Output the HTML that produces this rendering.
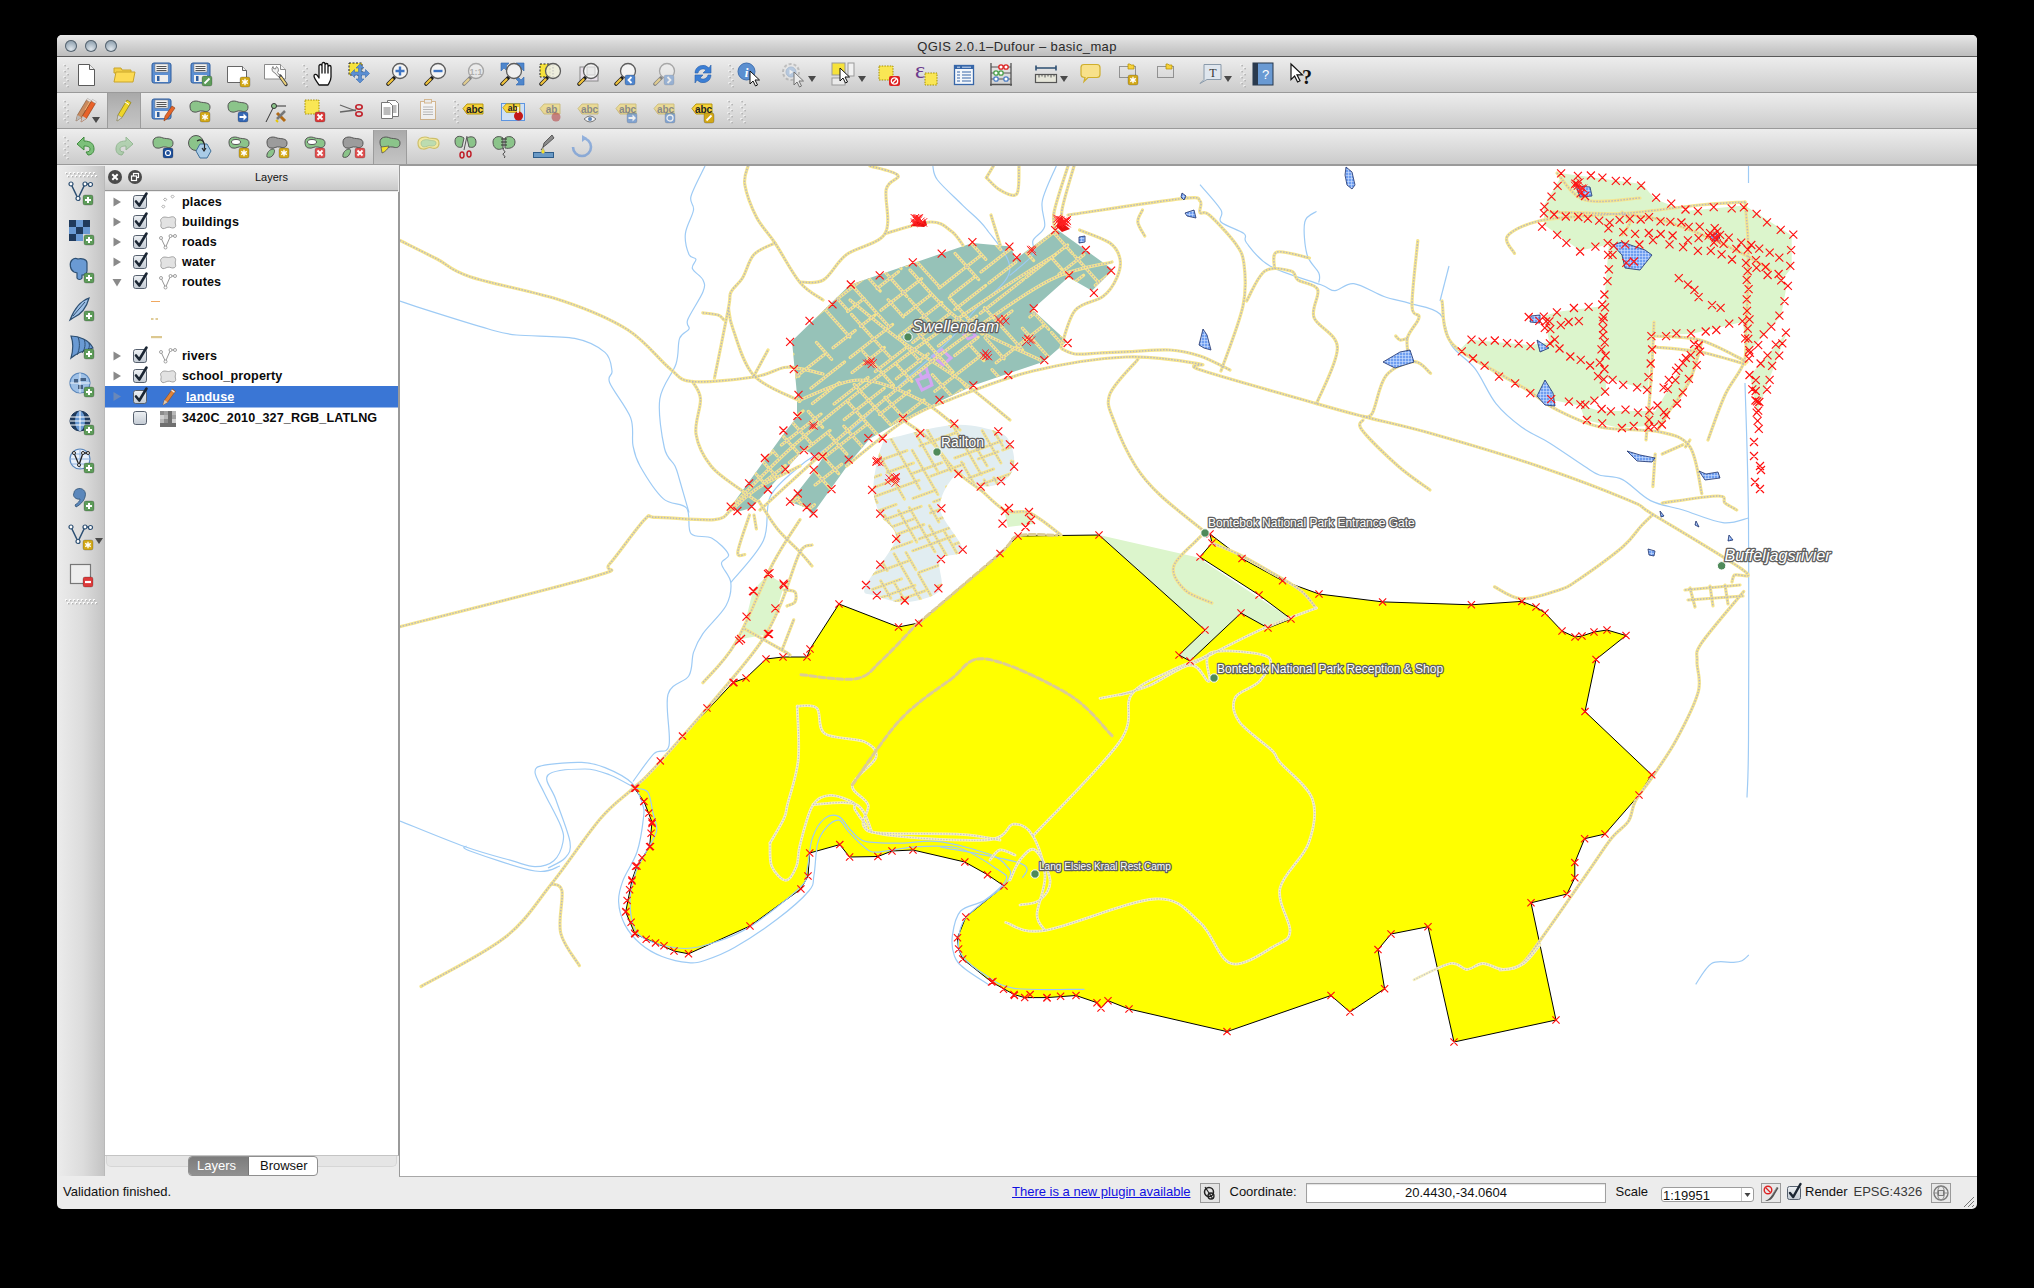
<!DOCTYPE html>
<html><head><meta charset="utf-8"><style>
html,body{margin:0;padding:0}
body{width:2034px;height:1288px;background:#000;overflow:hidden;position:relative;font-family:"Liberation Sans",sans-serif}
.a{position:absolute}
#win{position:absolute;left:57px;top:35px;width:1920px;height:1174px;background:#ececec;border-radius:5px 5px 5px 5px;overflow:hidden}
#title{position:absolute;left:0;top:0;width:1920px;height:21px;background:linear-gradient(#e9e9e9,#d6d6d6 40%,#bdbdbd);border-bottom:1px solid #585858}
#title .t{position:absolute;left:0;width:1920px;text-align:center;top:4px;font-size:13px;letter-spacing:.38px;color:#2a2a2a}
.tl{position:absolute;top:5px;width:12px;height:12px;border-radius:50%;background:radial-gradient(circle at 50% 75%,#dfe6ec,#9eaebb 60%,#7d8c99);box-shadow:inset 0 0 0 1px #56636e}
.tb{position:absolute;left:0;width:1920px;height:35px;background:linear-gradient(#ededed,#d9d9d9 60%,#cbcbcb);border-bottom:1px solid #9a9a9a;border-top:0}
#lbar{position:absolute;left:0;top:131px;width:47px;height:1010px;background:linear-gradient(90deg,#ececec,#dcdcdc 55%,#c4c4c4);border-right:1px solid #b9b9b9}
#ltitle{position:absolute;left:48px;top:130px;width:293px;height:25px;background:linear-gradient(#f0f0f0,#dedede 50%,#cacaca);border-bottom:1px solid #979797}
#ltitle .t{position:absolute;left:40px;right:0;top:6px;text-align:center;font-size:11px;color:#111}
.cb{position:absolute;top:5px;width:14px;height:14px;border-radius:50%;background:#4a4a4a}
#llist{position:absolute;left:48px;top:157px;width:293px;height:963px;background:#fff;border-right:1px solid #9a9a9a;border-bottom:1px solid #c4c4c4}
#map{position:absolute;left:342px;top:130px;width:1578px;height:1010px;border-left:1px solid #9a9a9a;border-top:1px solid #9a9a9a;border-bottom:1px solid #a8a8a8;background:#fff;overflow:hidden}
.row{position:absolute;left:0;height:20px;width:293px;font-size:13px;font-weight:bold;color:#111}
.lt{position:absolute;font-size:12.6px;font-weight:bold;color:#0a0a0a;line-height:16px;white-space:nowrap;letter-spacing:.12px}
.st{position:absolute;font-size:13px;line-height:18px;white-space:nowrap;color:#111}

</style></head><body>
<div id="win">
<div id="title"><div class="tl" style="left:8px"></div><div class="tl" style="left:28px"></div><div class="tl" style="left:48px"></div><div class="t">QGIS 2.0.1–Dufour – basic_map</div></div>
<div class="tb" style="top:22px"></div>
<div class="tb" style="top:58px"></div>
<div class="tb" style="top:94px"></div>
<div id="lbar"></div>
<div id="ltitle"><div class="cb" style="left:3px"><svg width="14" height="14"><path d="M4.3,4.3l5.4,5.4M9.7,4.3l-5.4,5.4" stroke="#fff" stroke-width="2"/></svg></div><div class="cb" style="left:23px"><svg width="14" height="14"><rect x="5.5" y="3.5" width="5" height="4" fill="none" stroke="#fff" stroke-width="1.2"/><rect x="3.5" y="6" width="5" height="4.5" fill="#4a4a4a" stroke="#fff" stroke-width="1.2"/></svg></div><div class="t">Layers</div></div>
<div id="llist"></div>
<div id="map"></div>
</div>
<svg class="a" style="left:0;top:0" width="1400" height="620"><defs><linearGradient id="act" x1="0" y1="0" x2="0" y2="1"><stop offset="0" stop-color="#a9a9a9"/><stop offset=".5" stop-color="#b9b9b9"/><stop offset="1" stop-color="#c4c4c4"/></linearGradient></defs><rect x="63.5" y="64" width="2" height="2" fill="#fafafa"/><rect x="64.3" y="64.8" width="1.6" height="1.6" fill="#b0b0b0"/><rect x="66.5" y="67" width="2" height="2" fill="#fafafa"/><rect x="67.3" y="67.8" width="1.6" height="1.6" fill="#b0b0b0"/><rect x="63.5" y="70" width="2" height="2" fill="#fafafa"/><rect x="64.3" y="70.8" width="1.6" height="1.6" fill="#b0b0b0"/><rect x="66.5" y="73" width="2" height="2" fill="#fafafa"/><rect x="67.3" y="73.8" width="1.6" height="1.6" fill="#b0b0b0"/><rect x="63.5" y="76" width="2" height="2" fill="#fafafa"/><rect x="64.3" y="76.8" width="1.6" height="1.6" fill="#b0b0b0"/><rect x="66.5" y="79" width="2" height="2" fill="#fafafa"/><rect x="67.3" y="79.8" width="1.6" height="1.6" fill="#b0b0b0"/><rect x="63.5" y="82" width="2" height="2" fill="#fafafa"/><rect x="64.3" y="82.8" width="1.6" height="1.6" fill="#b0b0b0"/><rect x="66.5" y="85" width="2" height="2" fill="#fafafa"/><rect x="67.3" y="85.8" width="1.6" height="1.6" fill="#b0b0b0"/><g transform="translate(77,63)"><path d="M1.5,1.5 h11 l5,5 v16 h-16 z" fill="#fff" stroke="#5a5a5a" stroke-width="1"/><path d="M12.5,1.5 v5 h5" fill="#eee" stroke="#5a5a5a"/></g><g transform="translate(113,64)"><path d="M1,4 h7 l1,2 h9 v3 h-17 z" fill="#f3cf47" stroke="#c9a52a"/><path d="M1,18 l2,-10 h19 l-2,10 z" fill="#fddb55" stroke="#c9a52a"/></g><g transform="translate(151,62)"><rect x="1" y="1" width="19" height="20" rx="2" fill="#5c8fd2" stroke="#2e5d9e"/><rect x="4" y="2" width="13" height="8" fill="#f2f2f2" stroke="#777" stroke-width=".5"/><path d="M5.5,4.5h10M5.5,6.5h10M5.5,8.5h10" stroke="#555" stroke-width="1"/><rect x="4" y="13" width="13" height="7" fill="#eee"/><rect x="6" y="14" width="2.5" height="5" fill="#2e5d9e"/></g><g transform="translate(190,62)"><rect x="1" y="1" width="19" height="20" rx="2" fill="#5c8fd2" stroke="#2e5d9e"/><rect x="4" y="2" width="13" height="8" fill="#f2f2f2" stroke="#777" stroke-width=".5"/><path d="M5.5,4.5h10M5.5,6.5h10M5.5,8.5h10" stroke="#555" stroke-width="1"/><rect x="4" y="13" width="13" height="7" fill="#eee"/><rect x="6" y="14" width="2.5" height="5" fill="#2e5d9e"/><g transform="translate(12,14)"><rect x="0" y="0" width="10" height="10" rx="2" fill="#5e9c5a" stroke="rgba(0,0,0,.25)" stroke-width=".8"/><path d="M2.5,7.5 l5,-5" stroke="#fff" stroke-width="1.8"/></g></g><g transform="translate(226,63)"><path d="M1.5,3.5 h15 l4,4 v12 h-19 z" fill="#fff" stroke="#666"/><path d="M16.5,3.5v4h4" fill="#eee" stroke="#666"/><g transform="translate(14,14)"><rect x="0" y="0" width="10" height="10" rx="2" fill="#d3a919" stroke="rgba(0,0,0,.25)" stroke-width=".8"/><path d="M5,1.8v6.4M2.2,3.4l5.6,3.2M2.2,6.6l5.6,-3.2" stroke="#fff" stroke-width="1.3"/><circle cx="5" cy="5" r="1.5" fill="#fff"/></g></g><g transform="translate(264,63)"><path d="M0.5,1.5 h16 l5,5 v9.5 h-21 z" fill="#fff" stroke="#8a8a8a"/><path d="M16.5,1.5v5h5" fill="#f2f2f2" stroke="#8a8a8a"/><path d="M16,13 l6,8.5" stroke="#3a3a3a" stroke-width="3.4" stroke-linecap="round"/><path d="M17,14.5 l4.6,6.5" stroke="#edd27a" stroke-width="2" stroke-linecap="round"/><path d="M16.5,13.5 l-3,-4 a4,4 0 0 0 -1,-6 l-1,2.5 l-2,-0.5 l-0.5,-2 a4,4 0 0 0 2,6.5 l3,3.5z" fill="#f0f0f0" stroke="#777" stroke-width=".9"/></g><rect x="302.5" y="64" width="2" height="2" fill="#fafafa"/><rect x="303.3" y="64.8" width="1.6" height="1.6" fill="#b0b0b0"/><rect x="305.5" y="67" width="2" height="2" fill="#fafafa"/><rect x="306.3" y="67.8" width="1.6" height="1.6" fill="#b0b0b0"/><rect x="302.5" y="70" width="2" height="2" fill="#fafafa"/><rect x="303.3" y="70.8" width="1.6" height="1.6" fill="#b0b0b0"/><rect x="305.5" y="73" width="2" height="2" fill="#fafafa"/><rect x="306.3" y="73.8" width="1.6" height="1.6" fill="#b0b0b0"/><rect x="302.5" y="76" width="2" height="2" fill="#fafafa"/><rect x="303.3" y="76.8" width="1.6" height="1.6" fill="#b0b0b0"/><rect x="305.5" y="79" width="2" height="2" fill="#fafafa"/><rect x="306.3" y="79.8" width="1.6" height="1.6" fill="#b0b0b0"/><rect x="302.5" y="82" width="2" height="2" fill="#fafafa"/><rect x="303.3" y="82.8" width="1.6" height="1.6" fill="#b0b0b0"/><rect x="305.5" y="85" width="2" height="2" fill="#fafafa"/><rect x="306.3" y="85.8" width="1.6" height="1.6" fill="#b0b0b0"/><g transform="translate(313,62)"><path d="M6,23 c-2,-3 -5,-7 -5,-9 c0,-2 2,-2 3,-1 l2,3 v-12 c0,-2 3,-2 3,0 v7 v-9 c0,-2 3,-2 3,0 v9 v-8 c0,-2 3,-2 3,0 v8 v-6 c0,-2 3,-2 3,0 v10 c0,4 -2,6 -3,8 z" fill="#fff" stroke="#111" stroke-width="1.3" stroke-linejoin="round"/></g><g transform="translate(348,62)"><rect x="1" y="1" width="13" height="12" fill="#f6e23a" stroke="#222" stroke-width="1" stroke-dasharray="2,1.5"/><path d="M12,2 l4,4 h-2.5 v4 h4 v-2.5 l4,4 l-4,4 v-2.5 h-4 v4 h2.5 l-4,4 l-4,-4 h2.5 v-4 h-4 v2.5 l-4,-4 l4,-4 v2.5 h4 v-4 h-2.5 z" fill="#5c8fd2" stroke="#3b6cae" stroke-width=".6"/></g><g transform="translate(386,62)"><path d="M2,22 l6,-6" stroke="#1a1a1a" stroke-width="3.6" stroke-linecap="round"/><path d="M2.3,21.7 l4.3,-4.3" stroke="#f0c33c" stroke-width="2.2" stroke-linecap="round"/><circle cx="14" cy="9" r="7.5" fill="#f4f4f4" stroke="#5d5d5d" stroke-width="1.3"/><path d="M14,4.5v9M9.5,9h9" stroke="#3d74c4" stroke-width="2.4"/></g><g transform="translate(424,62)"><path d="M2,22 l6,-6" stroke="#1a1a1a" stroke-width="3.6" stroke-linecap="round"/><path d="M2.3,21.7 l4.3,-4.3" stroke="#f0c33c" stroke-width="2.2" stroke-linecap="round"/><circle cx="14" cy="9" r="7.5" fill="#f4f4f4" stroke="#5d5d5d" stroke-width="1.3"/><path d="M9.5,9h9" stroke="#3d74c4" stroke-width="2.4"/></g><g transform="translate(462,62)" opacity=".45"><path d="M2,22 l6,-6" stroke="#1a1a1a" stroke-width="3.6" stroke-linecap="round"/><path d="M2.3,21.7 l4.3,-4.3" stroke="#f0c33c" stroke-width="2.2" stroke-linecap="round"/><circle cx="14" cy="9" r="7.5" fill="#f4f4f4" stroke="#5d5d5d" stroke-width="1.3"/><text x="14" y="12.5" font-size="9" font-weight="bold" text-anchor="middle" fill="#777" font-family="Liberation Sans">1:1</text></g><g transform="translate(500,62)"><path d="M1,1 h8 l-3,3 l3,3 l-2,2 l-3,-3 l-3,3 z M24,1 v8 l-3,-3 l-3,3 l-2,-2 l3,-3 l-3,-3 z M24,23 h-8 l3,-3 l-3,-3 l2,-2 l3,3 l3,-3 z" fill="#4e86cc" stroke="#2f66ae" stroke-width=".6"/></g><g transform="translate(500,62)"><path d="M2,22 l6,-6" stroke="#1a1a1a" stroke-width="3.6" stroke-linecap="round"/><path d="M2.3,21.7 l4.3,-4.3" stroke="#f0c33c" stroke-width="2.2" stroke-linecap="round"/><circle cx="14" cy="9" r="7.5" fill="#f0f0f0" stroke="#5d5d5d" stroke-width="1.3"/></g><g transform="translate(539,62)"><rect x="1" y="2" width="10" height="13" fill="#f6e23a" stroke="#222" stroke-dasharray="2,1.5"/></g><g transform="translate(539,62)"><path d="M2,22 l6,-6" stroke="#1a1a1a" stroke-width="3.6" stroke-linecap="round"/><path d="M2.3,21.7 l4.3,-4.3" stroke="#f0c33c" stroke-width="2.2" stroke-linecap="round"/><circle cx="14" cy="9" r="7.5" fill="rgba(240,240,220,.85)" stroke="#5d5d5d" stroke-width="1.3"/><path d="M14,2v14" stroke="#bbb" stroke-dasharray="1.5,1.5"/></g><g transform="translate(577,62)"><rect x="3" y="5" width="18" height="14" fill="#e8e0ea" stroke="#888"/></g><g transform="translate(577,62)"><path d="M2,22 l6,-6" stroke="#1a1a1a" stroke-width="3.6" stroke-linecap="round"/><path d="M2.3,21.7 l4.3,-4.3" stroke="#f0c33c" stroke-width="2.2" stroke-linecap="round"/><circle cx="14" cy="9" r="7.5" fill="#f4f4f4" stroke="#5d5d5d" stroke-width="1.3"/><rect x="10" y="5" width="8" height="8" fill="#e8e8e8" stroke="#ccc"/></g><g transform="translate(614,62)"><path d="M2,22 l6,-6" stroke="#1a1a1a" stroke-width="3.6" stroke-linecap="round"/><path d="M2.3,21.7 l4.3,-4.3" stroke="#f0c33c" stroke-width="2.2" stroke-linecap="round"/><circle cx="14" cy="9" r="7.5" fill="#f4f4f4" stroke="#5d5d5d" stroke-width="1.3"/><g transform="translate(11,13)"><rect x="0" y="0" width="10" height="10" rx="2" fill="#4f86d0" stroke="rgba(0,0,0,.25)" stroke-width=".8"/><path d="M6.5,2 l-3,3 l3,3" stroke="#fff" stroke-width="1.8" fill="none"/></g></g><g transform="translate(653,62)" opacity=".45"><path d="M2,22 l6,-6" stroke="#1a1a1a" stroke-width="3.6" stroke-linecap="round"/><path d="M2.3,21.7 l4.3,-4.3" stroke="#f0c33c" stroke-width="2.2" stroke-linecap="round"/><circle cx="14" cy="9" r="7.5" fill="#f4f4f4" stroke="#5d5d5d" stroke-width="1.3"/><g transform="translate(11,13)"><rect x="0" y="0" width="10" height="10" rx="2" fill="#4f86d0" stroke="rgba(0,0,0,.25)" stroke-width=".8"/><path d="M3.5,2 l3,3 l-3,3" stroke="#fff" stroke-width="1.8" fill="none"/></g></g><g transform="translate(691,62)"><path d="M4,11 a8,8 0 0 1 14,-5 l2,-3 v8 h-8 l3,-3 a5,5 0 0 0 -8,3 z" fill="#3b7fd6" stroke="#2a5fa8" stroke-width=".6"/><path d="M20,13 a8,8 0 0 1 -14,5 l-2,3 v-8 h8 l-3,3 a5,5 0 0 0 8,-3 z" fill="#3b7fd6" stroke="#2a5fa8" stroke-width=".6"/></g><rect x="728.5" y="64" width="2" height="2" fill="#fafafa"/><rect x="729.3" y="64.8" width="1.6" height="1.6" fill="#b0b0b0"/><rect x="731.5" y="67" width="2" height="2" fill="#fafafa"/><rect x="732.3" y="67.8" width="1.6" height="1.6" fill="#b0b0b0"/><rect x="728.5" y="70" width="2" height="2" fill="#fafafa"/><rect x="729.3" y="70.8" width="1.6" height="1.6" fill="#b0b0b0"/><rect x="731.5" y="73" width="2" height="2" fill="#fafafa"/><rect x="732.3" y="73.8" width="1.6" height="1.6" fill="#b0b0b0"/><rect x="728.5" y="76" width="2" height="2" fill="#fafafa"/><rect x="729.3" y="76.8" width="1.6" height="1.6" fill="#b0b0b0"/><rect x="731.5" y="79" width="2" height="2" fill="#fafafa"/><rect x="732.3" y="79.8" width="1.6" height="1.6" fill="#b0b0b0"/><rect x="728.5" y="82" width="2" height="2" fill="#fafafa"/><rect x="729.3" y="82.8" width="1.6" height="1.6" fill="#b0b0b0"/><rect x="731.5" y="85" width="2" height="2" fill="#fafafa"/><rect x="732.3" y="85.8" width="1.6" height="1.6" fill="#b0b0b0"/><g transform="translate(737,62)"><circle cx="9.5" cy="9.5" r="8.5" fill="#5b8fd0" stroke="#3f6faf"/><text x="9.5" y="14.5" font-size="13" font-style="italic" font-weight="bold" text-anchor="middle" fill="#fff" font-family="Liberation Serif">i</text><g transform="translate(13,9)"><path d="M0,0 v13 l3,-3 l2.5,5 l2,-1 l-2.5,-5 h4.5 z" fill="#fff" stroke="#111" stroke-width="1"/></g></g><g transform="translate(781,62)"><g opacity=".5"><circle cx="10" cy="10" r="8" fill="#e6e6e6" stroke="#999" stroke-width="2" stroke-dasharray="3,2"/><circle cx="10" cy="10" r="5" fill="#8fb3de" stroke="#7a9cc6"/><path d="M8.5,7.5 l4,2.5 l-4,2.5z" fill="#fff"/><g transform="translate(13,10)"><path d="M0,0 v13 l3,-3 l2.5,5 l2,-1 l-2.5,-5 h4.5 z" fill="#fff" stroke="#111" stroke-width="1"/></g></g></g><path d="M808,76 h8 l-4,6 z" fill="#4a4a4a"/><g transform="translate(831,62)"><rect x="1" y="1" width="13" height="12" fill="#f6e23a" stroke="#999"/><rect x="17" y="1" width="6" height="13" fill="#f1f1f1" stroke="#999"/><rect x="1" y="16" width="13" height="7" fill="#eaeaea" stroke="#999"/><g transform="translate(9,6)"><path d="M0,0 v13 l3,-3 l2.5,5 l2,-1 l-2.5,-5 h4.5 z" fill="#fff" stroke="#111" stroke-width="1"/></g></g><path d="M858,76 h8 l-4,6 z" fill="#4a4a4a"/><g transform="translate(878,63)"><rect x="1" y="3" width="14" height="14" fill="#f9e654" stroke="#a58f00" stroke-dasharray="1.5,1.2"/><g transform="translate(11,13)"><rect x="0" y="0" width="11" height="10" rx="2" fill="#d22"/><circle cx="5.5" cy="5" r="3.2" fill="none" stroke="#fff" stroke-width="1.3"/><path d="M3.5,7l4,-4" stroke="#fff" stroke-width="1.3"/></g></g><g transform="translate(915,62)"><text x="0" y="16" font-size="24" fill="#6b3b8c" font-family="Liberation Serif">ε</text><rect x="10" y="11" width="12" height="12" fill="#f9e654" stroke="#a58f00" stroke-dasharray="1.5,1.2"/></g><g transform="translate(953,63)"><rect x="1.5" y="2.5" width="19" height="19" fill="#f4f7fb" stroke="#3766a8" stroke-width="1.3"/><rect x="1.5" y="2.5" width="19" height="3.5" fill="#3766a8"/><path d="M4,9h3M9,9h9M4,12h3M9,12h9M4,15h3M9,15h9M4,18h3M9,18h9" stroke="#3766a8" stroke-width="1.2"/><path d="M4,4.2h3M9,4.2h9" stroke="#cfe0f5" stroke-width="1"/></g><g transform="translate(989,62)"><path d="M2,1v23M22,1v23M1,22.5h22" stroke="#555" stroke-width="1.3"/><path d="M2,5h20M2,11h20M2,17h20" stroke="#555" stroke-width="1"/><circle cx="12" cy="5" r="2.2" fill="#fff" stroke="#d22" stroke-width="1.3"/><circle cx="17" cy="5" r="2.2" fill="#fff" stroke="#d22" stroke-width="1.3"/><circle cx="7" cy="11" r="2.2" fill="#fff" stroke="#4aa04a" stroke-width="1.3"/><circle cx="12" cy="11" r="2.2" fill="#fff" stroke="#4aa04a" stroke-width="1.3"/><circle cx="7" cy="17" r="2.2" fill="#fff" stroke="#4d7fc6" stroke-width="1.3"/><circle cx="17" cy="17" r="2.2" fill="#fff" stroke="#4d7fc6" stroke-width="1.3"/></g><g transform="translate(1034,63)"><path d="M2,5h20M2,2.5v5M22,2.5v5" stroke="#2d4f72" stroke-width="1.6"/><rect x="1.5" y="11.5" width="21" height="8" fill="#e6e6da" stroke="#555" stroke-width="1.2"/><path d="M5,11.5v3M8,11.5v2M11,11.5v3M14,11.5v2M17,11.5v3M20,11.5v2" stroke="#555"/></g><path d="M1060,76 h8 l-4,6 z" fill="#4a4a4a"/><g transform="translate(1080,63)"><path d="M4,1.5 h13 c2,0 3,1 3,3 v7 c0,2 -1,3 -3,3 h-9 l-4,4 l1,-4 c-2,0 -4,-1 -4,-3 v-7 c0,-2 1,-3 3,-3 z" fill="#f8e18a" stroke="#cfae2c" stroke-width="1.2"/></g><g transform="translate(1118,63)"><rect x="1.5" y="3.5" width="16" height="11" fill="none" stroke="#444" stroke-dasharray="1,1"/><path d="M10,1 h2 l1,1 h3 v4 h-6 z" fill="#f7d23a" stroke="#b08d00" stroke-width=".7"/><g transform="translate(10,12)"><rect x="0" y="0" width="10" height="10" rx="2" fill="#d3a919" stroke="rgba(0,0,0,.25)" stroke-width=".8"/><path d="M5,1.8v6.4M2.2,3.4l5.6,3.2M2.2,6.6l5.6,-3.2" stroke="#fff" stroke-width="1.3"/><circle cx="5" cy="5" r="1.5" fill="#fff"/></g></g><g transform="translate(1156,63)"><rect x="1.5" y="3.5" width="16" height="11" fill="none" stroke="#444" stroke-dasharray="1,1"/><path d="M10,1 h2 l1,1 h3 v4 h-6 z" fill="#f7d23a" stroke="#b08d00" stroke-width=".7"/></g><g transform="translate(1199,63)"><path d="M5,1.5 h17 v15 h-14 l-7,4 l4,-4 v-15 z" fill="#dfe6ee" stroke="#8a9aaa" stroke-width="1"/><text x="14" y="13.5" font-size="12" text-anchor="middle" fill="#333" font-family="Liberation Serif">T</text></g><path d="M1224,76 h8 l-4,6 z" fill="#4a4a4a"/><rect x="1240.5" y="64" width="2" height="2" fill="#fafafa"/><rect x="1241.3" y="64.8" width="1.6" height="1.6" fill="#b0b0b0"/><rect x="1243.5" y="67" width="2" height="2" fill="#fafafa"/><rect x="1244.3" y="67.8" width="1.6" height="1.6" fill="#b0b0b0"/><rect x="1240.5" y="70" width="2" height="2" fill="#fafafa"/><rect x="1241.3" y="70.8" width="1.6" height="1.6" fill="#b0b0b0"/><rect x="1243.5" y="73" width="2" height="2" fill="#fafafa"/><rect x="1244.3" y="73.8" width="1.6" height="1.6" fill="#b0b0b0"/><rect x="1240.5" y="76" width="2" height="2" fill="#fafafa"/><rect x="1241.3" y="76.8" width="1.6" height="1.6" fill="#b0b0b0"/><rect x="1243.5" y="79" width="2" height="2" fill="#fafafa"/><rect x="1244.3" y="79.8" width="1.6" height="1.6" fill="#b0b0b0"/><rect x="1240.5" y="82" width="2" height="2" fill="#fafafa"/><rect x="1241.3" y="82.8" width="1.6" height="1.6" fill="#b0b0b0"/><rect x="1243.5" y="85" width="2" height="2" fill="#fafafa"/><rect x="1244.3" y="85.8" width="1.6" height="1.6" fill="#b0b0b0"/><g transform="translate(1252,62)"><rect x="1" y="1" width="20" height="22" fill="#6a9ad3" stroke="#26364a"/><rect x="1" y="1" width="5" height="22" fill="#2a3a4e"/><text x="13.5" y="17" font-size="13" text-anchor="middle" fill="#fff" font-family="Liberation Sans">?</text></g><g transform="translate(1290,62)"><g transform="translate(1,2) scale(1.2)"><path d="M0,0 v13 l3,-3 l2.5,5 l2,-1 l-2.5,-5 h4.5 z" fill="#fff" stroke="#111" stroke-width="1"/></g><text x="12" y="22" font-size="20" font-weight="bold" fill="#111" font-family="Liberation Serif">?</text></g><rect x="63.5" y="100" width="2" height="2" fill="#fafafa"/><rect x="64.3" y="100.8" width="1.6" height="1.6" fill="#b0b0b0"/><rect x="66.5" y="103" width="2" height="2" fill="#fafafa"/><rect x="67.3" y="103.8" width="1.6" height="1.6" fill="#b0b0b0"/><rect x="63.5" y="106" width="2" height="2" fill="#fafafa"/><rect x="64.3" y="106.8" width="1.6" height="1.6" fill="#b0b0b0"/><rect x="66.5" y="109" width="2" height="2" fill="#fafafa"/><rect x="67.3" y="109.8" width="1.6" height="1.6" fill="#b0b0b0"/><rect x="63.5" y="112" width="2" height="2" fill="#fafafa"/><rect x="64.3" y="112.8" width="1.6" height="1.6" fill="#b0b0b0"/><rect x="66.5" y="115" width="2" height="2" fill="#fafafa"/><rect x="67.3" y="115.8" width="1.6" height="1.6" fill="#b0b0b0"/><rect x="63.5" y="118" width="2" height="2" fill="#fafafa"/><rect x="64.3" y="118.8" width="1.6" height="1.6" fill="#b0b0b0"/><rect x="66.5" y="121" width="2" height="2" fill="#fafafa"/><rect x="67.3" y="121.8" width="1.6" height="1.6" fill="#b0b0b0"/><g transform="translate(74,98)"><path d="M2,23 l1.5,-6 l9,-15 l4,2.4 l-9,15 z" fill="#c98a5e" stroke="#7a4e2a" stroke-width=".6"/><path d="M12.5,2 l4,2.4 l1,-1.6 l-4,-2.4z" fill="#f4e8e0" stroke="#999" stroke-width=".5"/><path d="M2,23l1.5,-6l4,2.4z" fill="#b8b8b8"/><path d="M7,24 l1.5,-6 l9,-15 l4,2.4 l-9,15 z" fill="#e8622a" stroke="#8b3a10" stroke-width=".6"/><path d="M17.5,3 l4,2.4 l1,-1.6 l-4,-2.4z" fill="#f8f0ea" stroke="#999" stroke-width=".5"/><path d="M7,24l1.5,-6l4,2.4z" fill="#c8c8c8"/><path d="M11,12 l5,-8.5" stroke="#f7b070" stroke-width="1"/></g><path d="M92,117 h8 l-4,6 z" fill="#4a4a4a"/><rect x="107" y="93" width="34" height="35" fill="url(#act)"/><path d="M107.5,93v35M140.5,93v35" stroke="#9c9c9c"/><g transform="translate(114,98)"><path d="M3,23 l1,-6 l9,-15 l4,2.5 l-9,15 z" fill="#eed52a" stroke="#8a7a10" stroke-width=".7"/><path d="M3,23l1,-6l4,2.5z" fill="#d5d5d5" stroke="#888" stroke-width=".5"/><path d="M11,4 l4,2.5" stroke="#fff" stroke-width="1"/></g><g transform="translate(151,98)"><rect x="1" y="1" width="19" height="20" rx="2" fill="#5c8fd2" stroke="#2e5d9e"/><rect x="4" y="2" width="13" height="8" fill="#f2f2f2" stroke="#777" stroke-width=".5"/><path d="M5.5,4.5h10M5.5,6.5h10M5.5,8.5h10" stroke="#555" stroke-width="1"/><rect x="4" y="13" width="13" height="7" fill="#eee"/><rect x="6" y="14" width="2.5" height="5" fill="#2e5d9e"/><path d="M13,23 l1,-5 l7,-10 l3,2 l-7,10 z" fill="#e5662a" stroke="#8b3a10" stroke-width=".6"/></g><g transform="translate(188,99)"><path d="M2,7 c0,-5 6,-6 10,-4 c4,1 10,0 10,5 c0,5 -4,5 -7,4 c-4,-1 -6,2 -9,1 c-3,0 -4,-3 -4,-6z" fill="#8bc48a" stroke="#555" stroke-width="1"/><g transform="translate(12,13)"><rect x="0" y="0" width="10" height="10" rx="2" fill="#d3a919" stroke="rgba(0,0,0,.25)" stroke-width=".8"/><path d="M5,1.8v6.4M2.2,3.4l5.6,3.2M2.2,6.6l5.6,-3.2" stroke="#fff" stroke-width="1.3"/><circle cx="5" cy="5" r="1.5" fill="#fff"/></g></g><g transform="translate(226,99)"><path d="M2,7 c0,-5 6,-6 10,-4 c4,1 10,0 10,5 c0,5 -4,5 -7,4 c-4,-1 -6,2 -9,1 c-3,0 -4,-3 -4,-6z" fill="#8bc48a" stroke="#555" stroke-width="1"/><g transform="translate(12,13)"><rect x="0" y="0" width="10" height="10" rx="2" fill="#3668b5" stroke="rgba(0,0,0,.25)" stroke-width=".8"/><path d="M1.5,4h4v-2.5l3.5,3.5l-3.5,3.5v-2.5h-4z" fill="#fff"/></g></g><g transform="translate(265,99)"><path d="M1,23 l8,-16 h12" stroke="#333" stroke-width="1" fill="none"/><circle cx="9" cy="7" r="2.5" fill="#8bc48a" stroke="#333"/><path d="M12,14 l8,8" stroke="#b36a12" stroke-width="3"/><path d="M20,12 l-8,8" stroke="#777" stroke-width="2.5"/><path d="M11,21l2,2" stroke="#e8c800" stroke-width="2"/></g><g transform="translate(304,99)"><rect x="1" y="1" width="14" height="14" fill="#f9e654" stroke="#a58f00" stroke-dasharray="1.5,1.2"/><g transform="translate(11,13)"><rect x="0" y="0" width="10" height="10" rx="2" fill="#dc3a3a" stroke="rgba(0,0,0,.25)" stroke-width=".8"/><path d="M2.5,2.5l5,5M7.5,2.5l-5,5" stroke="#fff" stroke-width="1.8"/></g></g><g transform="translate(339,99)"><path d="M1,6 l16,6 M1,13 l16,-2" stroke="#666" stroke-width="1.3"/><ellipse cx="20" cy="8" rx="3.2" ry="2.2" fill="none" stroke="#c0202a" stroke-width="1.6"/><ellipse cx="20" cy="15" rx="3.2" ry="2.2" fill="none" stroke="#c0202a" stroke-width="1.6"/></g><g transform="translate(380,99)"><g transform="translate(6,-2)"><path d="M1.5,3.5h8l3,3v13h-11z" fill="#fff" stroke="#777"/><path d="M3.5,9h7M3.5,11h7M3.5,13h7M3.5,15h7" stroke="#555" stroke-width=".8"/></g><path d="M1.5,3.5h8l3,3v13h-11z" fill="#fff" stroke="#777"/><path d="M3.5,9h7M3.5,11h7M3.5,13h7M3.5,15h7" stroke="#555" stroke-width=".8"/></g><g transform="translate(419,99)"><g opacity=".6"><rect x="1.5" y="2.5" width="15" height="18" fill="#fff" stroke="#c99a5a"/><rect x="5.5" y="0.5" width="7" height="3.5" fill="#eee" stroke="#c99a5a"/><path d="M4,8h10M4,10.5h10M4,13h10M4,15.5h10" stroke="#888" stroke-width=".8"/></g></g><rect x="453.5" y="100" width="2" height="2" fill="#fafafa"/><rect x="454.3" y="100.8" width="1.6" height="1.6" fill="#b0b0b0"/><rect x="456.5" y="103" width="2" height="2" fill="#fafafa"/><rect x="457.3" y="103.8" width="1.6" height="1.6" fill="#b0b0b0"/><rect x="453.5" y="106" width="2" height="2" fill="#fafafa"/><rect x="454.3" y="106.8" width="1.6" height="1.6" fill="#b0b0b0"/><rect x="456.5" y="109" width="2" height="2" fill="#fafafa"/><rect x="457.3" y="109.8" width="1.6" height="1.6" fill="#b0b0b0"/><rect x="453.5" y="112" width="2" height="2" fill="#fafafa"/><rect x="454.3" y="112.8" width="1.6" height="1.6" fill="#b0b0b0"/><rect x="456.5" y="115" width="2" height="2" fill="#fafafa"/><rect x="457.3" y="115.8" width="1.6" height="1.6" fill="#b0b0b0"/><rect x="453.5" y="118" width="2" height="2" fill="#fafafa"/><rect x="454.3" y="118.8" width="1.6" height="1.6" fill="#b0b0b0"/><rect x="456.5" y="121" width="2" height="2" fill="#fafafa"/><rect x="457.3" y="121.8" width="1.6" height="1.6" fill="#b0b0b0"/><g transform="translate(462,103)"><g opacity="1.0"><path d="M1,5.5 l4,-4.5 h16 v10 h-16 z" fill="#f7d43c" stroke="#b09000" stroke-width=".9"/><text x="12.5" y="9.5" font-size="10" font-weight="bold" text-anchor="middle" fill="#222" font-family="Liberation Sans">abc</text></g></g><rect x="501.5" y="103.5" width="23" height="17" fill="#cfe0f5" stroke="#5d95e0"/><g transform="translate(502,103)"><g transform="scale(.85)"><g opacity="1.0"><path d="M1,5.5 l4,-4.5 h16 v10 h-16 z" fill="#f7d43c" stroke="#b09000" stroke-width=".9"/><text x="12.5" y="9.5" font-size="10" font-weight="bold" text-anchor="middle" fill="#222" font-family="Liberation Sans">ab</text></g></g><circle cx="16.5" cy="13" r="4.5" fill="#c41818"/><path d="M16,4v6" stroke="#fff" stroke-width="1.5"/></g><g transform="translate(539,103)"><g opacity="0.45"><path d="M1,5.5 l4,-4.5 h16 v10 h-16 z" fill="#f7d43c" stroke="#b09000" stroke-width=".9"/><text x="12.5" y="9.5" font-size="10" font-weight="bold" text-anchor="middle" fill="#222" font-family="Liberation Sans">ab</text></g><circle cx="17" cy="14" r="4.5" fill="#b84848" opacity=".6"/></g><g transform="translate(577,103)"><g opacity="0.45"><path d="M1,5.5 l4,-4.5 h16 v10 h-16 z" fill="#f7d43c" stroke="#b09000" stroke-width=".9"/><text x="12.5" y="9.5" font-size="10" font-weight="bold" text-anchor="middle" fill="#222" font-family="Liberation Sans">abc</text></g><path d="M7,16 q6,-6 12,0 q-6,6 -12,0z" fill="#fff" stroke="#555" opacity=".7"/><circle cx="13" cy="16" r="2" fill="#3b6cae" opacity=".8"/></g><g transform="translate(615,103)"><g opacity="0.45"><path d="M1,5.5 l4,-4.5 h16 v10 h-16 z" fill="#f7d43c" stroke="#b09000" stroke-width=".9"/><text x="12.5" y="9.5" font-size="10" font-weight="bold" text-anchor="middle" fill="#222" font-family="Liberation Sans">abc</text></g><g opacity=".6"><g transform="translate(12,10)"><rect x="0" y="0" width="10" height="10" rx="2" fill="#4f86d0" stroke="rgba(0,0,0,.25)" stroke-width=".8"/><path d="M1.5,4h4v-2.5l3.5,3.5l-3.5,3.5v-2.5h-4z" fill="#fff"/></g></g></g><g transform="translate(653,103)"><g opacity="0.45"><path d="M1,5.5 l4,-4.5 h16 v10 h-16 z" fill="#f7d43c" stroke="#b09000" stroke-width=".9"/><text x="12.5" y="9.5" font-size="10" font-weight="bold" text-anchor="middle" fill="#222" font-family="Liberation Sans">abc</text></g><g opacity=".6"><g transform="translate(12,10)"><rect x="0" y="0" width="10" height="10" rx="2" fill="#4f86d0" stroke="rgba(0,0,0,.25)" stroke-width=".8"/><circle cx="5" cy="5" r="3" fill="none" stroke="#fff" stroke-width="1.3"/></g></g></g><g transform="translate(691,103)"><g opacity="1.0"><path d="M1,5.5 l4,-4.5 h16 v10 h-16 z" fill="#f7d43c" stroke="#b09000" stroke-width=".9"/><text x="12.5" y="9.5" font-size="10" font-weight="bold" text-anchor="middle" fill="#222" font-family="Liberation Sans">abc</text></g><g transform="translate(13,10)"><rect x="0" y="0" width="10" height="10" rx="2" fill="#d3a919" stroke="rgba(0,0,0,.25)" stroke-width=".8"/><path d="M2.5,7.5 l5,-5" stroke="#fff" stroke-width="1.8"/></g></g><rect x="727.5" y="100" width="2" height="2" fill="#fafafa"/><rect x="728.3" y="100.8" width="1.6" height="1.6" fill="#b0b0b0"/><rect x="730.5" y="103" width="2" height="2" fill="#fafafa"/><rect x="731.3" y="103.8" width="1.6" height="1.6" fill="#b0b0b0"/><rect x="727.5" y="106" width="2" height="2" fill="#fafafa"/><rect x="728.3" y="106.8" width="1.6" height="1.6" fill="#b0b0b0"/><rect x="730.5" y="109" width="2" height="2" fill="#fafafa"/><rect x="731.3" y="109.8" width="1.6" height="1.6" fill="#b0b0b0"/><rect x="727.5" y="112" width="2" height="2" fill="#fafafa"/><rect x="728.3" y="112.8" width="1.6" height="1.6" fill="#b0b0b0"/><rect x="730.5" y="115" width="2" height="2" fill="#fafafa"/><rect x="731.3" y="115.8" width="1.6" height="1.6" fill="#b0b0b0"/><rect x="727.5" y="118" width="2" height="2" fill="#fafafa"/><rect x="728.3" y="118.8" width="1.6" height="1.6" fill="#b0b0b0"/><rect x="730.5" y="121" width="2" height="2" fill="#fafafa"/><rect x="731.3" y="121.8" width="1.6" height="1.6" fill="#b0b0b0"/><rect x="740.5" y="100" width="2" height="2" fill="#fafafa"/><rect x="741.3" y="100.8" width="1.6" height="1.6" fill="#b0b0b0"/><rect x="743.5" y="103" width="2" height="2" fill="#fafafa"/><rect x="744.3" y="103.8" width="1.6" height="1.6" fill="#b0b0b0"/><rect x="740.5" y="106" width="2" height="2" fill="#fafafa"/><rect x="741.3" y="106.8" width="1.6" height="1.6" fill="#b0b0b0"/><rect x="743.5" y="109" width="2" height="2" fill="#fafafa"/><rect x="744.3" y="109.8" width="1.6" height="1.6" fill="#b0b0b0"/><rect x="740.5" y="112" width="2" height="2" fill="#fafafa"/><rect x="741.3" y="112.8" width="1.6" height="1.6" fill="#b0b0b0"/><rect x="743.5" y="115" width="2" height="2" fill="#fafafa"/><rect x="744.3" y="115.8" width="1.6" height="1.6" fill="#b0b0b0"/><rect x="740.5" y="118" width="2" height="2" fill="#fafafa"/><rect x="741.3" y="118.8" width="1.6" height="1.6" fill="#b0b0b0"/><rect x="743.5" y="121" width="2" height="2" fill="#fafafa"/><rect x="744.3" y="121.8" width="1.6" height="1.6" fill="#b0b0b0"/><rect x="63.5" y="136" width="2" height="2" fill="#fafafa"/><rect x="64.3" y="136.8" width="1.6" height="1.6" fill="#b0b0b0"/><rect x="66.5" y="139" width="2" height="2" fill="#fafafa"/><rect x="67.3" y="139.8" width="1.6" height="1.6" fill="#b0b0b0"/><rect x="63.5" y="142" width="2" height="2" fill="#fafafa"/><rect x="64.3" y="142.8" width="1.6" height="1.6" fill="#b0b0b0"/><rect x="66.5" y="145" width="2" height="2" fill="#fafafa"/><rect x="67.3" y="145.8" width="1.6" height="1.6" fill="#b0b0b0"/><rect x="63.5" y="148" width="2" height="2" fill="#fafafa"/><rect x="64.3" y="148.8" width="1.6" height="1.6" fill="#b0b0b0"/><rect x="66.5" y="151" width="2" height="2" fill="#fafafa"/><rect x="67.3" y="151.8" width="1.6" height="1.6" fill="#b0b0b0"/><rect x="63.5" y="154" width="2" height="2" fill="#fafafa"/><rect x="64.3" y="154.8" width="1.6" height="1.6" fill="#b0b0b0"/><rect x="66.5" y="157" width="2" height="2" fill="#fafafa"/><rect x="67.3" y="157.8" width="1.6" height="1.6" fill="#b0b0b0"/><g transform="translate(76,136)"><path d="M1,8 l7,-7 v4 c7,0 10,3 10,8 c0,4 -3,6 -6,6 l-2,-3 c3,0 4,-1 4,-3 c0,-2 -2,-3 -6,-3 v4 z" fill="#7cc07a" stroke="#3f8a3d" stroke-width="1"/></g><g transform="translate(115,136)"><g transform="translate(19,0) scale(-1,1)" opacity=".45"><path d="M1,8 l7,-7 v4 c7,0 10,3 10,8 c0,4 -3,6 -6,6 l-2,-3 c3,0 4,-1 4,-3 c0,-2 -2,-3 -6,-3 v4 z" fill="#7cc07a" stroke="#3f8a3d" stroke-width="1"/></g></g><g transform="translate(151,135)"><path d="M2,7 c0,-5 6,-6 10,-4 c4,1 10,0 10,5 c0,5 -4,5 -7,4 c-4,-1 -6,2 -9,1 c-3,0 -4,-3 -4,-6z" fill="#8bc48a" stroke="#555" stroke-width="1"/><g transform="translate(12,13)"><rect x="0" y="0" width="10" height="10" rx="2" fill="#1f4f99" stroke="rgba(0,0,0,.25)" stroke-width=".8"/><circle cx="5" cy="5" r="2.5" fill="none" stroke="#fff" stroke-width="1.2"/></g></g><g transform="translate(188,135)"><circle cx="8" cy="8" r="7.5" fill="#8bc48a" stroke="#555"/><path d="M8,16 L12,9 H19 L23,16 L19,23 H12 Z" fill="#a9cbe6" stroke="#3e6f99"/><path d="M9,6 c5,-3 9,1 7,9" stroke="#222" fill="none" stroke-width="1.1"/><path d="M14,13 l2,3 l2,-3" stroke="#222" fill="none" stroke-width="1.1"/></g><g transform="translate(227,135)"><path d="M2,7 c0,-5 6,-6 10,-4 c4,1 10,0 10,5 c0,5 -4,5 -7,4 c-4,-1 -6,2 -9,1 c-3,0 -4,-3 -4,-6z" fill="#8bc48a" stroke="#555" stroke-width="1"/><ellipse cx="9" cy="7" rx="4.5" ry="2.5" fill="#fff" stroke="#555"/><g transform="translate(12,13)"><rect x="0" y="0" width="10" height="10" rx="2" fill="#d3a919" stroke="rgba(0,0,0,.25)" stroke-width=".8"/><path d="M5,1.8v6.4M2.2,3.4l5.6,3.2M2.2,6.6l5.6,-3.2" stroke="#fff" stroke-width="1.3"/><circle cx="5" cy="5" r="1.5" fill="#fff"/></g></g><g transform="translate(265,135)"><path d="M2,7 c0,-5 6,-6 10,-4 c4,1 10,0 10,5 c0,5 -4,5 -7,4 c-4,-1 -6,2 -9,1 c-3,0 -4,-3 -4,-6z" fill="#9c9c9c" stroke="#555" stroke-width="1"/><path d="M2,22 c-1,-4 3,-8 6,-8 c2,0 2,3 0,6 c-1,2 -4,3 -6,2z" fill="#8bc48a" stroke="#555"/><g transform="translate(14,13)"><rect x="0" y="0" width="10" height="10" rx="2" fill="#d3a919" stroke="rgba(0,0,0,.25)" stroke-width=".8"/><path d="M5,1.8v6.4M2.2,3.4l5.6,3.2M2.2,6.6l5.6,-3.2" stroke="#fff" stroke-width="1.3"/><circle cx="5" cy="5" r="1.5" fill="#fff"/></g></g><g transform="translate(303,135)"><path d="M2,7 c0,-5 6,-6 10,-4 c4,1 10,0 10,5 c0,5 -4,5 -7,4 c-4,-1 -6,2 -9,1 c-3,0 -4,-3 -4,-6z" fill="#8bc48a" stroke="#555" stroke-width="1"/><ellipse cx="9" cy="7" rx="4.5" ry="2.5" fill="#fff" stroke="#555"/><g transform="translate(12,13)"><rect x="0" y="0" width="10" height="10" rx="2" fill="#e05050" stroke="rgba(0,0,0,.25)" stroke-width=".8"/><path d="M2.5,2.5l5,5M7.5,2.5l-5,5" stroke="#fff" stroke-width="1.8"/></g></g><g transform="translate(341,135)"><path d="M2,7 c0,-5 6,-6 10,-4 c4,1 10,0 10,5 c0,5 -4,5 -7,4 c-4,-1 -6,2 -9,1 c-3,0 -4,-3 -4,-6z" fill="#9c9c9c" stroke="#555" stroke-width="1"/><path d="M2,22 c-1,-4 3,-8 6,-8 c2,0 2,3 0,6 c-1,2 -4,3 -6,2z" fill="#8bc48a" stroke="#555"/><g transform="translate(14,13)"><rect x="0" y="0" width="10" height="10" rx="2" fill="#e05050" stroke="rgba(0,0,0,.25)" stroke-width=".8"/><path d="M2.5,2.5l5,5M7.5,2.5l-5,5" stroke="#fff" stroke-width="1.8"/></g></g><rect x="373" y="130" width="34" height="34" fill="url(#act)"/><path d="M373.5,130v34M406.5,130v34" stroke="#9c9c9c"/><g transform="translate(379,135)"><path d="M1,7 c0,-5 6,-6 10,-4 c4,1 10,0 10,5 c0,5 -4,5 -7,4 c-4,-1 -6,2 -9,1 c-3,0 -4,-3 -4,-6z" fill="#8bc48a" stroke="#555"/><path d="M2,12 l8,-1 c-1,3 -4,6 -7,7 z" fill="#f1e22b" stroke="#555" stroke-width=".8"/></g><g transform="translate(416,135)"><path d="M2,8 c0,-6 7,-7 11,-5 c4,1 10,-1 10,5 c0,5 -4,6 -7,5 c-4,-2 -6,2 -9,1 c-3,0 -5,-2 -5,-6z" fill="#f1e8a0" stroke="#cdbf6a" stroke-width="1.2"/><path d="M5,8 c0,-3 5,-4 8,-3 c3,1 7,0 7,3 c0,3 -3,3 -5,3 c-3,-1 -4,1 -7,1 c-2,0 -3,-2 -3,-4z" fill="#bcdcb0" stroke="#9ab88e" stroke-width=".6"/></g><g transform="translate(454,135)"><path d="M1,6 c0,-5 5,-6 9,-3 l-2,9 c-3,1 -7,0 -7,-6z M13,3 c3,-2 9,-2 9,4 c0,5 -3,6 -7,5z" fill="#8bc48a" stroke="#555"/><path d="M13,1 l-3,14" stroke="#555"/><ellipse cx="8" cy="20" rx="2" ry="3" fill="none" stroke="#c0202a" stroke-width="1.5"/><ellipse cx="15" cy="19" rx="2" ry="3" fill="none" stroke="#c0202a" stroke-width="1.5"/></g><g transform="translate(492,135)"><path d="M1,7 c0,-5 6,-7 10,-4 v10 c-4,3 -10,1 -10,-6z M13,3 c4,-3 10,-1 10,4 c0,6 -6,7 -10,6z" fill="#8bc48a" stroke="#555"/><path d="M9,4h6M9,7h6M9,10h6" stroke="#333"/><path d="M12,13 c-3,2 3,3 0,5 c-3,2 3,3 0,5" stroke="#333" fill="none"/></g><g transform="translate(532,135)"><path d="M12,8 l8,-8 l2,3 l-8,7 l-3,2 z" fill="#8a8a8a" stroke="#444" stroke-width=".8"/><path d="M9,15 l3,-4" stroke="#444"/><rect x="1.5" y="17.5" width="20" height="5" fill="#6a9ac6" stroke="#2e5d8a"/><path d="M11,13 l2,4 l-2,2 l-2,-2z" fill="#f1e22b" stroke="#999" stroke-width=".5"/></g><g transform="translate(569,135)"><g opacity=".55"><path d="M4,12 a9,9 0 1 0 9,-9" stroke="#4e86d6" stroke-width="2.6" fill="none"/><path d="M13,0 l5,3 l-5,4z" fill="#4e86d6"/></g></g><rect x="65" y="172" width="2" height="2" fill="#fafafa"/><rect x="66" y="173" width="1.5" height="1.5" fill="#b5b5b5"/><rect x="67" y="175" width="2" height="2" fill="#fafafa"/><rect x="68" y="176" width="1.5" height="1.5" fill="#b5b5b5"/><rect x="69" y="172" width="2" height="2" fill="#fafafa"/><rect x="70" y="173" width="1.5" height="1.5" fill="#b5b5b5"/><rect x="71" y="175" width="2" height="2" fill="#fafafa"/><rect x="72" y="176" width="1.5" height="1.5" fill="#b5b5b5"/><rect x="73" y="172" width="2" height="2" fill="#fafafa"/><rect x="74" y="173" width="1.5" height="1.5" fill="#b5b5b5"/><rect x="75" y="175" width="2" height="2" fill="#fafafa"/><rect x="76" y="176" width="1.5" height="1.5" fill="#b5b5b5"/><rect x="77" y="172" width="2" height="2" fill="#fafafa"/><rect x="78" y="173" width="1.5" height="1.5" fill="#b5b5b5"/><rect x="79" y="175" width="2" height="2" fill="#fafafa"/><rect x="80" y="176" width="1.5" height="1.5" fill="#b5b5b5"/><rect x="81" y="172" width="2" height="2" fill="#fafafa"/><rect x="82" y="173" width="1.5" height="1.5" fill="#b5b5b5"/><rect x="83" y="175" width="2" height="2" fill="#fafafa"/><rect x="84" y="176" width="1.5" height="1.5" fill="#b5b5b5"/><rect x="85" y="172" width="2" height="2" fill="#fafafa"/><rect x="86" y="173" width="1.5" height="1.5" fill="#b5b5b5"/><rect x="87" y="175" width="2" height="2" fill="#fafafa"/><rect x="88" y="176" width="1.5" height="1.5" fill="#b5b5b5"/><rect x="89" y="172" width="2" height="2" fill="#fafafa"/><rect x="90" y="173" width="1.5" height="1.5" fill="#b5b5b5"/><rect x="91" y="175" width="2" height="2" fill="#fafafa"/><rect x="92" y="176" width="1.5" height="1.5" fill="#b5b5b5"/><rect x="93" y="172" width="2" height="2" fill="#fafafa"/><rect x="94" y="173" width="1.5" height="1.5" fill="#b5b5b5"/><rect x="95" y="175" width="2" height="2" fill="#fafafa"/><rect x="96" y="176" width="1.5" height="1.5" fill="#b5b5b5"/><g transform="translate(69,181)"><path d="M2,3 L9,17.5 L16,3 H21.5" stroke="#2d4f72" stroke-width="1.5" fill="none"/><circle cx="2" cy="3" r="2" fill="#fff" stroke="#2d4f72" stroke-width="1.2"/><circle cx="9" cy="17.5" r="2" fill="#fff" stroke="#2d4f72" stroke-width="1.2"/><circle cx="16" cy="3" r="2" fill="#fff" stroke="#2d4f72" stroke-width="1.2"/><circle cx="21.5" cy="3.5" r="2" fill="#fff" stroke="#2d4f72" stroke-width="1.2"/><g transform="translate(14,14)"><rect x="0" y="0" width="10" height="10" rx="2" fill="#5e9c5a" stroke="rgba(0,0,0,.25)" stroke-width=".8"/><path d="M5,2v6M2,5h6" stroke="#fff" stroke-width="2"/></g></g><g transform="translate(69,220)"><rect x="0" y="0" width="7" height="7" fill="#1f3a5c"/><rect x="7" y="0" width="7" height="7" fill="#6a9ad3"/><rect x="14" y="0" width="7" height="7" fill="#1f3a5c"/><rect x="0" y="7" width="7" height="7" fill="#6a9ad3"/><rect x="7" y="7" width="7" height="7" fill="#1f3a5c"/><rect x="14" y="7" width="7" height="7" fill="#6a9ad3"/><rect x="0" y="14" width="7" height="7" fill="#1f3a5c"/><rect x="7" y="14" width="7" height="7" fill="#6a9ad3"/><g transform="translate(15,15)"><rect x="0" y="0" width="10" height="10" rx="2" fill="#5e9c5a" stroke="rgba(0,0,0,.25)" stroke-width=".8"/><path d="M5,2v6M2,5h6" stroke="#fff" stroke-width="2"/></g></g><g transform="translate(69,258)"><path d="M3,2 c-3,3 -2,10 2,12 l3,1 v5 c1,2 4,2 5,0 v-3 c2,0 5,-1 5,-4 v-8 c0,-4 -6,-5 -9,-4 c-2,-1 -4,-1 -6,1z" fill="#6a9ad3" stroke="#2d4f72" stroke-width="1.2"/><g transform="translate(15,15)"><rect x="0" y="0" width="10" height="10" rx="2" fill="#5e9c5a" stroke="rgba(0,0,0,.25)" stroke-width=".8"/><path d="M5,2v6M2,5h6" stroke="#fff" stroke-width="2"/></g></g><g transform="translate(69,296)"><path d="M1,24 c3,-8 8,-18 19,-22 c-2,8 -7,16 -16,20z" fill="#9ec0e6" stroke="#2d4f72" stroke-width="1.2"/><path d="M4,20 l12,-14" stroke="#2d4f72"/><g transform="translate(15,15)"><rect x="0" y="0" width="10" height="10" rx="2" fill="#5e9c5a" stroke="rgba(0,0,0,.25)" stroke-width=".8"/><path d="M5,2v6M2,5h6" stroke="#fff" stroke-width="2"/></g></g><g transform="translate(69,334)"><path d="M2,2 c8,0 18,4 22,12 c-8,2 -16,5 -22,10 c2,-7 3,-14 0,-22z" fill="#6a9ad3" stroke="#2d4f72" stroke-width="1.2"/><path d="M9,3 c2,5 2,12 -1,18 M15,5 c2,5 1,10 -2,14 M20,9 c1,3 0,6 -2,8" stroke="#2d4f72" fill="none"/><g transform="translate(15,15)"><rect x="0" y="0" width="10" height="10" rx="2" fill="#5e9c5a" stroke="rgba(0,0,0,.25)" stroke-width=".8"/><path d="M5,2v6M2,5h6" stroke="#fff" stroke-width="2"/></g></g><g transform="translate(69,372)"><circle cx="11" cy="11" r="10" fill="#9ec0e6" stroke="#5b87bb" stroke-width="1.2"/><path d="M5,7h4v4h-4zM11,6h6v3h-6zM9,13h5v4h-5z" fill="#1f3a5c" opacity=".7"/><path d="M1,11h20M11,1v20" stroke="#fff" stroke-width=".8"/><g transform="translate(15,15)"><rect x="0" y="0" width="10" height="10" rx="2" fill="#5e9c5a" stroke="rgba(0,0,0,.25)" stroke-width=".8"/><path d="M5,2v6M2,5h6" stroke="#fff" stroke-width="2"/></g></g><g transform="translate(69,410)"><circle cx="11" cy="11" r="10" fill="#1f3a5c" stroke="#1f3a5c"/><ellipse cx="11" cy="11" rx="5" ry="10" fill="#6a9ad3"/><path d="M1,7h20M1,11h20M1,15h20M11,1v20" stroke="#fff" stroke-width="1"/><g transform="translate(15,15)"><rect x="0" y="0" width="10" height="10" rx="2" fill="#5e9c5a" stroke="rgba(0,0,0,.25)" stroke-width=".8"/><path d="M5,2v6M2,5h6" stroke="#fff" stroke-width="2"/></g></g><g transform="translate(69,448)"><circle cx="11" cy="11" r="10" fill="#e8f0fa" stroke="#5b87bb" stroke-width="1.2"/><path d="M1,11h20M11,1v20M3,6h16M3,16h16" stroke="#7ba3d8" stroke-width=".8"/><path d="M5,5 l5,12 l4,-12 h5" stroke="#222" stroke-width="1.3" fill="none"/><circle cx="5" cy="5" r="1.5" fill="#fff" stroke="#222"/><circle cx="10" cy="17" r="1.5" fill="#fff" stroke="#222"/><circle cx="14" cy="5" r="1.5" fill="#fff" stroke="#222"/><circle cx="19" cy="5" r="1.5" fill="#fff" stroke="#222"/><g transform="translate(15,15)"><rect x="0" y="0" width="10" height="10" rx="2" fill="#5e9c5a" stroke="rgba(0,0,0,.25)" stroke-width=".8"/><path d="M5,2v6M2,5h6" stroke="#fff" stroke-width="2"/></g></g><g transform="translate(69,487)"><path d="M8,2 c5,-2 10,2 8,8 c-1,4 -5,8 -9,10 l-1,-2 c3,-2 5,-4 5,-6 c-4,1 -8,-3 -6,-6 c0,-2 1,-3 3,-4z" fill="#5b87bb" stroke="#2d4f72" stroke-width=".8"/><g transform="translate(15,14)"><rect x="0" y="0" width="10" height="10" rx="2" fill="#5e9c5a" stroke="rgba(0,0,0,.25)" stroke-width=".8"/><path d="M5,2v6M2,5h6" stroke="#fff" stroke-width="2"/></g></g><g transform="translate(69,524)"><path d="M2,3 L9,17.5 L16,3 H21.5" stroke="#2d4f72" stroke-width="1.5" fill="none"/><circle cx="2" cy="3" r="2" fill="#fff" stroke="#2d4f72" stroke-width="1.2"/><circle cx="9" cy="17.5" r="2" fill="#fff" stroke="#2d4f72" stroke-width="1.2"/><circle cx="16" cy="3" r="2" fill="#fff" stroke="#2d4f72" stroke-width="1.2"/><circle cx="21.5" cy="3.5" r="2" fill="#fff" stroke="#2d4f72" stroke-width="1.2"/><g transform="translate(14,16)"><rect x="0" y="0" width="10" height="10" rx="2" fill="#d3a919" stroke="rgba(0,0,0,.25)" stroke-width=".8"/><path d="M5,1.8v6.4M2.2,3.4l5.6,3.2M2.2,6.6l5.6,-3.2" stroke="#fff" stroke-width="1.3"/><circle cx="5" cy="5" r="1.5" fill="#fff"/></g></g><path d="M95,538 h8 l-4,6 z" fill="#4a4a4a"/><g transform="translate(70,564)"><rect x="0.5" y="0.5" width="20" height="19" fill="#eee" stroke="#777" stroke-width="1.2"/><g transform="translate(13,13)"><rect x="0" y="0" width="10" height="10" rx="2" fill="#dc3a3a" stroke="rgba(0,0,0,.25)" stroke-width=".8"/><path d="M2,5h6" stroke="#fff" stroke-width="2.2"/></g></g><rect x="65" y="599" width="2" height="2" fill="#fafafa"/><rect x="66" y="600" width="1.5" height="1.5" fill="#b5b5b5"/><rect x="67" y="602" width="2" height="2" fill="#fafafa"/><rect x="68" y="603" width="1.5" height="1.5" fill="#b5b5b5"/><rect x="69" y="599" width="2" height="2" fill="#fafafa"/><rect x="70" y="600" width="1.5" height="1.5" fill="#b5b5b5"/><rect x="71" y="602" width="2" height="2" fill="#fafafa"/><rect x="72" y="603" width="1.5" height="1.5" fill="#b5b5b5"/><rect x="73" y="599" width="2" height="2" fill="#fafafa"/><rect x="74" y="600" width="1.5" height="1.5" fill="#b5b5b5"/><rect x="75" y="602" width="2" height="2" fill="#fafafa"/><rect x="76" y="603" width="1.5" height="1.5" fill="#b5b5b5"/><rect x="77" y="599" width="2" height="2" fill="#fafafa"/><rect x="78" y="600" width="1.5" height="1.5" fill="#b5b5b5"/><rect x="79" y="602" width="2" height="2" fill="#fafafa"/><rect x="80" y="603" width="1.5" height="1.5" fill="#b5b5b5"/><rect x="81" y="599" width="2" height="2" fill="#fafafa"/><rect x="82" y="600" width="1.5" height="1.5" fill="#b5b5b5"/><rect x="83" y="602" width="2" height="2" fill="#fafafa"/><rect x="84" y="603" width="1.5" height="1.5" fill="#b5b5b5"/><rect x="85" y="599" width="2" height="2" fill="#fafafa"/><rect x="86" y="600" width="1.5" height="1.5" fill="#b5b5b5"/><rect x="87" y="602" width="2" height="2" fill="#fafafa"/><rect x="88" y="603" width="1.5" height="1.5" fill="#b5b5b5"/><rect x="89" y="599" width="2" height="2" fill="#fafafa"/><rect x="90" y="600" width="1.5" height="1.5" fill="#b5b5b5"/><rect x="91" y="602" width="2" height="2" fill="#fafafa"/><rect x="92" y="603" width="1.5" height="1.5" fill="#b5b5b5"/><rect x="93" y="599" width="2" height="2" fill="#fafafa"/><rect x="94" y="600" width="1.5" height="1.5" fill="#b5b5b5"/><rect x="95" y="602" width="2" height="2" fill="#fafafa"/><rect x="96" y="603" width="1.5" height="1.5" fill="#b5b5b5"/></svg><svg class="a" style="left:0;top:0" width="420" height="440"><defs><linearGradient id="cbg" x1="0" y1="0" x2="0" y2="1"><stop offset="0" stop-color="#eef1f4"/><stop offset=".5" stop-color="#d9dee4"/><stop offset="1" stop-color="#c2cad3"/></linearGradient></defs><rect x="105" y="386" width="293" height="21.5" fill="#3a76d5"/><path d="M113.5,197.5 L121,202 L113.5,206.5 z" fill="#8a8a8a"/><rect x="133.5" y="195.5" width="13" height="13" rx="2.2" fill="url(#cbg)" stroke="#56606e" stroke-width="1"/><path d="M136,201.5 L139.3,205.5 L146.5,193.5" fill="none" stroke="#1b2633" stroke-width="2.6" stroke-linecap="round" stroke-linejoin="round"/><path d="M172.5,194.9 L174.1,196.5 L172.5,198.1 L170.9,196.5 Z" fill="#fff" stroke="#8a8a8a" stroke-width=".7"/><path d="M165.2,197.9 L166.79999999999998,199.5 L165.2,201.1 L163.6,199.5 Z" fill="#fff" stroke="#8a8a8a" stroke-width=".7"/><path d="M163.4,204.9 L165.0,206.5 L163.4,208.1 L161.8,206.5 Z" fill="#fff" stroke="#8a8a8a" stroke-width=".7"/><path d="M113.5,217.5 L121,222 L113.5,226.5 z" fill="#8a8a8a"/><rect x="133.5" y="215.5" width="13" height="13" rx="2.2" fill="url(#cbg)" stroke="#56606e" stroke-width="1"/><path d="M136,221.5 L139.3,225.5 L146.5,213.5" fill="none" stroke="#1b2633" stroke-width="2.6" stroke-linecap="round" stroke-linejoin="round"/><path d="M161.5,218.5 c2,-2.5 5,-1 7,-1 c2,0 4.5,-2 6.5,0.5 c1.5,2 0,3.5 0.2,5 c0.2,1.5 1.3,3 -0.5,4.5 c-2.5,1.5 -4.5,-0.8 -6.8,-0.3 c-2.5,0.5 -4.5,2.5 -6.2,0.8 c-1.8,-2 -0.2,-4 -0.6,-5.5 c-0.4,-1.5 -1.2,-2.5 0.4,-4z" fill="#e2e2e2" stroke="#9a9a9a" stroke-width=".9"/><path d="M113.5,237.5 L121,242 L113.5,246.5 z" fill="#8a8a8a"/><rect x="133.5" y="235.5" width="13" height="13" rx="2.2" fill="url(#cbg)" stroke="#56606e" stroke-width="1"/><path d="M136,241.5 L139.3,245.5 L146.5,233.5" fill="none" stroke="#1b2633" stroke-width="2.6" stroke-linecap="round" stroke-linejoin="round"/><path d="M161,238 L165.5,247.5 L170.5,236 L175,236" fill="none" stroke="#8a8a8a" stroke-width=".9"/><circle cx="161" cy="238" r="1.5" fill="#fff" stroke="#8a8a8a" stroke-width=".8"/><circle cx="165.5" cy="247.5" r="1.5" fill="#fff" stroke="#8a8a8a" stroke-width=".8"/><circle cx="170.5" cy="236" r="1.5" fill="#fff" stroke="#8a8a8a" stroke-width=".8"/><circle cx="175" cy="236" r="1.5" fill="#fff" stroke="#8a8a8a" stroke-width=".8"/><path d="M113.5,257.5 L121,262 L113.5,266.5 z" fill="#8a8a8a"/><rect x="133.5" y="255.5" width="13" height="13" rx="2.2" fill="url(#cbg)" stroke="#56606e" stroke-width="1"/><path d="M136,261.5 L139.3,265.5 L146.5,253.5" fill="none" stroke="#1b2633" stroke-width="2.6" stroke-linecap="round" stroke-linejoin="round"/><path d="M161.5,258.5 c2,-2.5 5,-1 7,-1 c2,0 4.5,-2 6.5,0.5 c1.5,2 0,3.5 0.2,5 c0.2,1.5 1.3,3 -0.5,4.5 c-2.5,1.5 -4.5,-0.8 -6.8,-0.3 c-2.5,0.5 -4.5,2.5 -6.2,0.8 c-1.8,-2 -0.2,-4 -0.6,-5.5 c-0.4,-1.5 -1.2,-2.5 0.4,-4z" fill="#e2e2e2" stroke="#9a9a9a" stroke-width=".9"/><path d="M112.5,279 L121.5,279 L117,286.5 z" fill="#8a8a8a"/><rect x="133.5" y="275.5" width="13" height="13" rx="2.2" fill="url(#cbg)" stroke="#56606e" stroke-width="1"/><path d="M136,281.5 L139.3,285.5 L146.5,273.5" fill="none" stroke="#1b2633" stroke-width="2.6" stroke-linecap="round" stroke-linejoin="round"/><path d="M161,278 L165.5,287.5 L170.5,276 L175,276" fill="none" stroke="#8a8a8a" stroke-width=".9"/><circle cx="161" cy="278" r="1.5" fill="#fff" stroke="#8a8a8a" stroke-width=".8"/><circle cx="165.5" cy="287.5" r="1.5" fill="#fff" stroke="#8a8a8a" stroke-width=".8"/><circle cx="170.5" cy="276" r="1.5" fill="#fff" stroke="#8a8a8a" stroke-width=".8"/><circle cx="175" cy="276" r="1.5" fill="#fff" stroke="#8a8a8a" stroke-width=".8"/><path d="M113.5,351.5 L121,356 L113.5,360.5 z" fill="#8a8a8a"/><rect x="133.5" y="349.5" width="13" height="13" rx="2.2" fill="url(#cbg)" stroke="#56606e" stroke-width="1"/><path d="M136,355.5 L139.3,359.5 L146.5,347.5" fill="none" stroke="#1b2633" stroke-width="2.6" stroke-linecap="round" stroke-linejoin="round"/><path d="M161,352 L165.5,361.5 L170.5,350 L175,350" fill="none" stroke="#8a8a8a" stroke-width=".9"/><circle cx="161" cy="352" r="1.5" fill="#fff" stroke="#8a8a8a" stroke-width=".8"/><circle cx="165.5" cy="361.5" r="1.5" fill="#fff" stroke="#8a8a8a" stroke-width=".8"/><circle cx="170.5" cy="350" r="1.5" fill="#fff" stroke="#8a8a8a" stroke-width=".8"/><circle cx="175" cy="350" r="1.5" fill="#fff" stroke="#8a8a8a" stroke-width=".8"/><path d="M113.5,371.5 L121,376 L113.5,380.5 z" fill="#8a8a8a"/><rect x="133.5" y="369.5" width="13" height="13" rx="2.2" fill="url(#cbg)" stroke="#56606e" stroke-width="1"/><path d="M136,375.5 L139.3,379.5 L146.5,367.5" fill="none" stroke="#1b2633" stroke-width="2.6" stroke-linecap="round" stroke-linejoin="round"/><path d="M161.5,372.5 c2,-2.5 5,-1 7,-1 c2,0 4.5,-2 6.5,0.5 c1.5,2 0,3.5 0.2,5 c0.2,1.5 1.3,3 -0.5,4.5 c-2.5,1.5 -4.5,-0.8 -6.8,-0.3 c-2.5,0.5 -4.5,2.5 -6.2,0.8 c-1.8,-2 -0.2,-4 -0.6,-5.5 c-0.4,-1.5 -1.2,-2.5 0.4,-4z" fill="#e2e2e2" stroke="#9a9a9a" stroke-width=".9"/><path d="M113.5,392.0 L121,396.5 L113.5,401.0 z" fill="#6a88b8"/><rect x="133.5" y="390.5" width="13" height="13" rx="2.2" fill="url(#cbg)" stroke="#56606e" stroke-width="1"/><path d="M136,396.5 L139.3,400.5 L146.5,388.5" fill="none" stroke="#1b2633" stroke-width="2.6" stroke-linecap="round" stroke-linejoin="round"/><path d="M163,405 l1.5,-5 l8,-11 l3,2.2 l-8,11 z" fill="#e0843a" stroke="#8b4a1a" stroke-width=".6"/><path d="M163,405 l1.5,-5 l3,2.2z" fill="#d8c8b0"/><path d="M171.5,390 l3,2.2" stroke="#eee" stroke-width="1.2"/><rect x="133.5" y="411.5" width="13" height="13" rx="2.2" fill="url(#cbg)" stroke="#56606e" stroke-width="1"/><rect x="160" y="411" width="4" height="4" fill="#8c8c8c"/><rect x="164" y="411" width="4" height="4" fill="#a0a0a0"/><rect x="168" y="411" width="4" height="4" fill="#6f6f6f"/><rect x="172" y="411" width="4" height="4" fill="#b8b8b8"/><rect x="160" y="415" width="4" height="4" fill="#d0d0d0"/><rect x="164" y="415" width="4" height="4" fill="#b8b8b8"/><rect x="168" y="415" width="4" height="4" fill="#6f6f6f"/><rect x="172" y="415" width="4" height="4" fill="#a0a0a0"/><rect x="160" y="419" width="4" height="4" fill="#b8b8b8"/><rect x="164" y="419" width="4" height="4" fill="#8c8c8c"/><rect x="168" y="419" width="4" height="4" fill="#6f6f6f"/><rect x="172" y="419" width="4" height="4" fill="#d0d0d0"/><rect x="160" y="423" width="4" height="4" fill="#6f6f6f"/><rect x="164" y="423" width="4" height="4" fill="#6f6f6f"/><rect x="168" y="423" width="4" height="4" fill="#6f6f6f"/><rect x="172" y="423" width="4" height="4" fill="#6f6f6f"/><path d="M151,301.5h9" stroke="#f0a860" stroke-width="1"/><rect x="151" y="318" width="2.5" height="2" fill="#e0cc98"/><rect x="155.5" y="318" width="2.5" height="2" fill="#e0cc98"/><rect x="151" y="336" width="11" height="2.2" fill="#dcc890"/></svg><div class="lt" style="left:182px;top:194px">places</div><div class="lt" style="left:182px;top:214px">buildings</div><div class="lt" style="left:182px;top:234px">roads</div><div class="lt" style="left:182px;top:254px">water</div><div class="lt" style="left:182px;top:274px">routes</div><div class="lt" style="left:182px;top:348px">rivers</div><div class="lt" style="left:182px;top:368px">school_property</div><div class="lt" style="left:186px;top:388.5px;color:#fff;text-decoration:underline">landuse</div><div class="lt" style="left:182px;top:409.5px">3420C_2010_327_RGB_LATLNG</div><svg class="a" style="left:0;top:0" width="2034" height="1288"><defs><clipPath id="mc"><rect x="400" y="166" width="1576" height="1010"/></clipPath></defs><g clip-path="url(#mc)"><path d="M768.0,574.5 L784.5,584.6 L769.0,634.0 L741.0,639.0 L753.0,590.6Z" fill="#dcf5cc"/><path d="M1099.0,535.0 L1198.0,557.5 L1291.0,619.0 L1268.0,628.0 L1241.0,613.0 L1190.0,661.0 L1179.0,655.0 L1205.0,630.0Z" fill="#dcf5cc"/><path d="M979.0,352.0 L993.0,341.0 L1005.0,350.0 L998.0,364.0 L979.0,363.0Z" fill="#dcf5cc"/><path d="M1005.0,514.0 L1030.0,512.0 L1034.0,524.0 L1008.0,527.0Z" fill="#dcf5cc"/><path d="M1544.0,205.6 L1563.0,173.5 L1642.0,184.0 L1655.0,199.0 L1685.0,211.0 L1744.7,205.6 L1791.7,235.5 L1791.7,267.5 L1782.0,280.0 L1744.7,263.0 L1685.0,246.0 L1655.0,242.0 L1612.0,244.0 L1580.0,250.4 L1544.0,224.8Z" fill="#dcf5cc"/><path d="M1610.0,229.0 L1700.0,240.0 L1748.0,250.0 L1787.0,284.0 L1781.0,316.0 L1748.0,353.0 L1742.5,322.0 L1691.0,334.0 L1652.0,335.0 L1648.0,390.0 L1600.0,376.0 L1604.0,306.0Z" fill="#dcf5cc"/><path d="M1469.8,339.7 L1530.0,345.0 L1549.4,342.5 L1544.0,316.0 L1558.0,311.7 L1604.0,306.0 L1606.0,392.0 L1585.8,406.7 L1551.0,399.8 L1530.0,391.4 L1497.7,376.0 L1460.0,349.4Z" fill="#dcf5cc"/><path d="M1580.0,405.0 L1600.0,411.0 L1650.0,411.0 L1665.0,413.0 L1660.0,425.0 L1620.0,428.0 L1585.0,420.0Z" fill="#dcf5cc"/><path d="M1650.0,420.0 L1668.0,390.0 L1693.0,345.0 L1701.0,353.0 L1676.0,405.0 L1654.0,427.0Z" fill="#dcf5cc"/><path d="M1786.7,332.6 L1757.0,412.3 L1750.0,375.4Z" fill="#dcf5cc"/><path d="M850.0,284.8 L972.4,242.9 L1010.8,246.4 L1015.5,259.2 L1056.3,228.9 L1113.0,269.7 L1092.0,290.8 L1068.4,277.2 L1032.3,309.5 L1067.0,341.2 L1043.5,361.7 L974.7,385.0 L939.8,401.3 L902.5,420.0 L870.0,438.6 L850.4,461.5 L812.0,515.0 L807.0,508.0 L789.6,501.7 L796.0,494.0 L815.6,469.0 L824.0,456.0 L814.6,455.0 L803.7,449.6 L751.5,508.0 L738.5,511.5 L729.8,508.0 L785.0,432.0 L797.0,417.0 L797.0,395.0 L792.0,341.0Z" fill="#96c2b8"/><path d="M883.8,440.0 C895.3,437.5 934.0,426.3 953.0,425.0 C972.0,423.7 988.1,428.7 997.8,432.0 C1007.5,435.3 1008.4,439.1 1011.0,445.0 C1013.6,450.9 1015.2,461.0 1013.6,467.3 C1012.0,473.6 1007.3,479.6 1001.6,482.7 C995.9,485.8 986.8,487.5 979.4,486.1 C972.0,484.7 963.8,470.5 957.2,474.2 C950.6,477.9 939.1,495.8 940.0,508.3 C940.9,520.8 962.3,540.8 962.3,549.3 C962.3,557.8 943.7,552.8 940.0,559.6 C936.3,566.4 945.7,583.2 940.0,590.3 C934.3,597.4 916.8,601.4 906.0,602.3 C895.2,603.2 882.0,598.0 875.2,595.5 C868.4,593.0 861.6,596.4 865.0,587.0 C868.4,577.6 893.2,551.1 895.7,539.1 C898.2,527.1 884.0,523.2 880.3,515.2 C876.6,507.2 874.1,500.1 873.5,491.3 C872.9,482.5 875.2,470.8 876.9,462.2 C878.6,453.6 882.6,443.7 883.8,440.0" fill="#e1edf1"/><path d="M919,372 l7,-5 l2,7 l-6,4 z M917,380 l12,-4 l3,9 l-10,5z" fill="none" stroke="#d3a6f2" stroke-width="3"/><path d="M933,356 l8,-7 l10,9 l-8,7 z" fill="none" stroke="#d3a6f2" stroke-width="3"/><path d="M964,335 l8,-3 l4,4 l-8,3z" fill="none" stroke="#d3a6f2" stroke-width="2.5"/><path d="M733.0,682.5 L746.0,678.0 L766.0,659.0 L783.0,657.0 L807.0,657.0 L810.0,649.0 L839.0,604.0 L898.5,627.0 L918.7,623.0 L1000.0,553.5 L1018.0,536.0 L1099.0,535.0 L1205.0,630.0 L1179.0,655.0 L1190.0,661.0 L1241.0,613.0 L1268.0,628.0 L1291.0,619.0 L1259.0,595.0 L1200.0,557.0 L1212.0,543.0 L1210.0,534.0 L1242.0,558.5 L1282.5,580.7 L1319.0,594.0 L1382.6,601.9 L1471.4,604.8 L1521.8,601.4 L1536.0,607.0 L1545.0,613.0 L1562.0,631.0 L1575.0,637.0 L1582.0,636.0 L1594.0,632.0 L1607.0,630.0 L1626.0,635.5 L1596.0,659.4 L1585.0,711.6 L1651.7,774.8 L1639.0,795.0 L1605.0,834.0 L1584.6,838.7 L1574.8,862.6 L1574.8,877.8 L1567.0,894.0 L1531.0,902.8 L1556.0,1020.0 L1454.0,1042.0 L1428.0,926.7 L1391.0,934.0 L1378.0,949.6 L1384.6,988.7 L1349.9,1012.0 L1331.0,995.5 L1227.0,1031.6 L1129.0,1009.0 L1108.0,1000.7 L1101.0,1008.0 L1097.0,1002.7 L1076.0,995.5 L1047.0,997.6 L1024.7,997.6 L1014.0,994.5 L991.6,982.0 L962.7,959.0 L958.6,949.0 L957.5,937.7 L965.8,917.0 L1004.0,886.0 L987.5,874.7 L964.8,862.0 L913.0,850.0 L892.0,851.0 L877.9,856.5 L849.6,857.0 L839.8,844.6 L809.7,853.0 L808.0,876.0 L800.9,889.0 L750.0,926.0 L688.5,953.8 L674.0,951.0 L635.0,934.0 L625.7,912.0 L632.0,880.0 L637.0,866.0 L649.6,846.7 L652.0,822.0 L644.0,801.6 L634.5,788.3Z" fill="#ffff00" stroke="#000" stroke-width="1" stroke-linejoin="round"/><path d="M400.0,301.0 C404.7,302.6 413.2,305.7 428.0,310.4 C442.8,315.1 473.8,324.9 488.5,329.0 C503.2,333.1 502.1,333.4 516.5,335.0 C530.9,336.6 560.0,335.5 574.7,338.4 C589.5,341.3 598.8,347.0 605.0,352.4 C611.2,357.8 611.2,365.9 612.0,371.0 C612.8,376.1 606.6,374.9 609.7,382.7 C612.8,390.5 626.7,407.1 630.6,417.6 C634.5,428.1 631.4,437.5 633.0,445.6 C634.6,453.7 635.0,457.2 640.0,466.0 C645.0,474.8 655.5,491.6 663.2,498.6 C671.0,505.6 681.9,502.2 686.5,508.0 C691.1,513.8 686.8,528.6 691.0,533.6 C695.2,538.6 705.8,534.7 712.0,538.2 C718.2,541.7 726.9,550.2 728.5,554.5 C730.1,558.8 721.1,559.1 721.5,563.8 C721.9,568.5 730.0,575.5 730.8,582.5 C731.5,589.5 730.6,597.3 726.0,605.8 C721.4,614.3 708.3,625.9 702.9,633.7 C697.5,641.5 695.8,645.4 693.5,652.4 C691.2,659.4 693.1,668.7 688.9,675.7 C684.6,682.7 671.3,682.6 668.0,694.3 C664.7,705.9 671.3,735.7 669.0,745.6 C666.7,755.5 660.0,747.6 654.0,753.6 C648.0,759.6 636.5,776.9 633.0,781.5" fill="none" stroke="#9ecbf5" stroke-width="1.2"/><path d="M705.0,166.0 C702.7,171.1 692.9,189.0 691.0,196.3 C689.1,203.6 694.4,203.8 693.5,210.0 C692.6,216.2 686.1,226.2 685.4,233.6 C684.6,241.0 687.2,250.2 689.0,254.5 C690.8,258.8 695.3,256.9 695.9,259.2 C696.5,261.5 691.2,265.0 692.4,268.5 C693.6,272.0 701.2,276.1 703.0,280.0 C704.8,283.9 705.5,285.2 703.0,291.8 C700.5,298.4 690.0,313.6 687.7,319.8 C685.4,326.0 690.4,325.9 689.0,329.0 C687.6,332.1 681.8,332.6 679.6,338.4 C677.4,344.2 679.3,353.9 676.0,364.0 C672.7,374.1 661.7,385.0 659.8,399.0 C657.9,413.0 661.9,436.8 664.4,448.0 C666.9,459.2 672.5,460.7 675.0,466.0 C677.5,471.3 677.3,472.2 679.6,480.0 C681.9,487.8 687.4,507.2 689.0,512.6" fill="none" stroke="#9ecbf5" stroke-width="1.2"/><path d="M932.8,166.0 C933.6,168.3 932.5,173.4 937.5,180.0 C942.5,186.6 954.9,197.4 963.0,205.6 C971.1,213.8 978.6,218.1 986.4,229.0 C994.2,239.9 1011.7,257.2 1009.7,270.8 C1007.8,284.4 984.8,298.8 974.7,310.4 C964.6,322.0 960.6,329.0 949.0,340.7 C937.4,352.4 920.0,366.3 904.8,380.3 C889.6,394.3 871.6,413.0 858.0,424.6 C844.4,436.2 833.0,443.1 823.3,450.0 C813.6,456.9 808.8,458.3 800.0,466.0 C791.2,473.7 776.5,483.9 770.4,496.3 C764.3,508.7 770.0,526.1 763.4,540.5 C756.8,554.9 736.2,575.5 730.8,582.5" fill="none" stroke="#9ecbf5" stroke-width="1.2"/><path d="M1056.3,166.0 C1054.0,171.8 1044.2,190.9 1042.3,201.0 C1040.3,211.1 1046.1,220.0 1044.6,226.6 C1043.0,233.2 1034.9,235.8 1033.0,240.5 C1031.1,245.2 1036.9,248.7 1033.0,254.5 C1029.1,260.3 1013.6,272.0 1009.7,275.5" fill="none" stroke="#9ecbf5" stroke-width="1.2"/><path d="M1200.0,184.6 C1203.5,188.8 1217.5,203.8 1221.0,210.0 C1224.5,216.2 1217.2,218.1 1221.0,222.0 C1224.8,225.9 1239.7,230.1 1244.0,233.6 C1248.3,237.1 1242.3,237.6 1246.6,243.0 C1250.9,248.4 1257.6,259.0 1270.0,266.0 C1282.4,273.0 1310.2,280.7 1321.0,284.8 C1331.8,288.9 1329.5,290.8 1335.0,290.6 C1340.5,290.4 1345.6,282.6 1353.8,283.6 C1362.0,284.6 1374.7,293.2 1384.0,296.5 C1393.3,299.8 1400.4,300.5 1409.7,303.4 C1419.0,306.3 1433.0,307.0 1440.0,314.0 C1447.0,321.0 1445.8,336.3 1451.6,345.4 C1457.4,354.5 1467.6,359.0 1475.0,368.7 C1482.4,378.4 1488.2,393.9 1496.0,403.6 C1503.8,413.3 1512.6,420.4 1521.5,427.0 C1530.4,433.6 1539.1,436.5 1549.5,443.0 C1559.9,449.5 1575.7,460.7 1584.0,466.0 C1592.3,471.3 1592.9,472.7 1599.3,475.0 C1605.7,477.3 1614.1,475.3 1622.6,479.6 C1631.1,483.9 1640.4,495.5 1650.5,500.6 C1660.6,505.7 1671.0,506.3 1683.0,510.0 C1695.0,513.7 1711.9,521.4 1722.8,522.7 C1733.7,524.0 1744.1,518.8 1748.4,518.0" fill="none" stroke="#9ecbf5" stroke-width="1.2"/><path d="M1316.5,211.4 C1314.5,213.2 1306.4,214.8 1304.8,222.0 C1303.2,229.2 1304.7,246.0 1307.0,254.5 C1309.3,263.0 1316.8,268.3 1318.8,273.0 C1320.8,277.7 1318.8,280.9 1318.8,282.5" fill="none" stroke="#9ecbf5" stroke-width="1.2"/><path d="M1449.0,266.0 L1440.0,301.0" fill="none" stroke="#9ecbf5" stroke-width="1.2"/><path d="M1748.5,166.0 L1748.5,183.0" fill="none" stroke="#9ecbf5" stroke-width="1.2"/><path d="M1745.0,383.0 C1745.6,405.8 1747.9,460.5 1748.5,520.0 C1749.1,579.5 1748.8,693.8 1748.5,740.0 C1748.2,786.2 1747.2,787.9 1747.0,797.5" fill="none" stroke="#9ecbf5" stroke-width="1.2"/><path d="M1695.7,984.4 C1698.3,980.9 1705.3,967.1 1711.6,963.4 C1717.9,959.7 1728.5,962.8 1733.6,962.4 C1738.7,962.0 1739.5,961.9 1742.0,960.7 C1744.5,959.5 1747.7,956.0 1748.8,955.0" fill="none" stroke="#9ecbf5" stroke-width="1.2"/><path d="M400.0,821.0 C410.9,825.3 446.6,840.2 465.2,846.8 C483.8,853.4 500.2,857.4 511.8,860.7 C523.4,864.0 528.0,866.6 535.0,866.6 C542.0,866.6 549.1,864.8 553.8,860.7 C558.5,856.6 561.9,847.8 563.0,842.0 C564.1,836.2 563.8,833.9 560.7,825.8 C557.6,817.7 548.7,802.2 544.4,793.2 C540.1,784.2 535.0,776.7 535.0,772.0 C535.0,767.3 536.6,766.8 544.4,765.2 C552.2,763.6 571.6,762.0 581.7,762.4 C591.8,762.8 596.6,764.2 605.0,767.6 C613.4,771.0 625.6,776.9 631.9,783.0 C638.1,789.1 640.6,798.1 642.5,804.0 C644.4,809.9 644.3,810.4 643.4,818.4 C642.5,826.4 640.4,841.7 637.0,852.0 C633.6,862.3 626.1,872.1 623.0,880.4 C619.9,888.7 618.3,894.2 618.6,901.6 C618.9,909.0 621.1,917.5 624.8,924.6 C628.5,931.7 634.5,938.7 640.7,944.0 C646.9,949.3 654.0,953.4 662.0,956.5 C670.0,959.6 681.2,962.1 688.5,962.7 C695.8,963.3 698.3,962.5 706.0,960.0 C713.7,957.5 722.7,954.4 734.5,947.6 C746.3,940.8 764.6,928.7 777.0,919.3 C789.4,909.9 802.6,898.4 808.8,891.0 C815.0,883.6 812.5,883.0 814.0,875.0 C815.5,867.0 815.6,851.2 817.7,843.2 C819.8,835.2 823.0,831.1 826.5,827.3 C830.0,823.5 835.5,819.6 839.0,820.2 C842.5,820.8 844.0,826.7 847.8,830.8 C851.6,834.9 857.9,841.5 862.0,845.0 C866.1,848.5 867.9,851.1 872.6,852.0 C877.3,852.9 882.3,851.2 890.0,850.3 C897.7,849.4 906.9,847.0 918.6,846.7 C930.3,846.4 946.8,844.7 960.0,848.5 C973.2,852.3 990.1,864.4 997.8,869.6 C1005.5,874.9 1008.1,874.9 1006.0,880.0 C1003.9,885.1 992.6,894.8 985.0,900.0 C977.4,905.2 966.0,905.1 960.6,911.0 C955.2,916.9 953.4,928.1 952.4,935.6 C951.4,943.1 952.4,950.8 954.5,956.3 C956.6,961.8 958.9,963.9 964.8,968.7 C970.6,973.5 985.5,982.5 989.6,985.2" fill="none" stroke="#9ecbf5" stroke-width="1.2"/><path d="M548.0,868.0 C550.8,866.3 561.3,862.3 565.0,858.0 C568.7,853.7 571.5,851.7 570.0,842.0 C568.5,832.3 559.7,811.2 556.0,800.0 C552.3,788.8 543.2,780.2 548.0,775.0 C552.8,769.8 574.7,769.0 585.0,769.0 C595.3,769.0 601.6,771.8 610.0,775.0 C618.4,778.2 631.2,786.1 635.4,788.3" fill="none" stroke="#9ecbf5" stroke-width="1.2"/><path d="M466.0,846.0 C466.7,846.8 458.5,846.8 470.0,851.0 C481.5,855.2 520.0,868.5 535.0,871.0 C550.0,873.5 555.8,866.8 560.0,866.0" fill="none" stroke="#9ecbf5" stroke-width="1.2"/><path d="M635.4,788.3 C637.5,788.9 644.9,787.9 647.8,792.0 C650.7,796.1 651.5,806.5 653.0,813.0 C654.5,819.5 657.8,824.3 656.6,830.8 C655.4,837.3 649.5,844.9 646.0,852.0 C642.5,859.1 638.1,865.0 635.4,873.3 C632.7,881.6 630.0,892.1 630.0,901.6 C630.0,911.1 631.6,923.2 635.4,930.0 C639.2,936.8 644.7,939.2 653.0,942.3 C661.3,945.4 674.7,948.5 685.0,948.5 C695.3,948.5 704.1,946.0 715.0,942.3 C725.9,938.6 736.2,935.5 750.4,926.4 C764.6,917.2 790.6,896.8 800.0,887.4 C809.4,878.0 804.9,878.0 807.0,869.7 C809.1,861.5 809.4,846.5 812.4,837.9 C815.4,829.3 820.4,821.9 824.8,818.4 C829.2,814.9 834.6,814.5 839.0,816.6 C843.4,818.7 846.9,826.7 851.3,830.8 C855.7,834.9 857.2,839.3 865.5,841.4 C873.8,843.5 888.6,843.2 901.0,843.2 C913.4,843.2 924.9,839.7 940.0,841.7 C955.1,843.7 980.3,850.8 991.6,855.1 C1002.9,859.4 1004.9,864.1 1008.0,867.5 C1011.1,870.9 1010.9,872.6 1010.2,875.7 C1009.5,878.8 1008.1,881.9 1004.0,886.0 C999.9,890.1 991.9,895.0 985.4,900.5 C978.9,906.0 969.3,912.5 964.8,919.0 C960.3,925.5 959.0,933.6 958.6,939.8 C958.2,946.0 958.2,950.4 962.7,956.3 C967.2,962.1 976.8,969.6 985.4,974.9 C994.0,980.2 997.8,985.9 1014.3,988.3 C1030.8,990.7 1072.8,989.1 1084.5,989.3" fill="none" stroke="#9ecbf5" stroke-width="1.2"/><path d="M940.0,846.8 C953.4,849.6 1006.7,858.2 1020.5,863.4 C1034.3,868.6 1022.2,875.4 1022.6,877.8" fill="none" stroke="#9ecbf5" stroke-width="1.2"/><g fill="none" stroke="#f6e58e" stroke-width="3.2" stroke-linejoin="round" stroke-linecap="round"><path d="M400.0,240.5 C406.2,243.6 425.3,253.0 437.0,259.0 C448.7,265.0 449.0,269.7 470.0,276.7 C491.0,283.7 536.7,292.1 563.0,301.0 C589.3,309.9 610.2,318.7 628.0,330.0 C645.8,341.3 659.3,360.1 670.0,368.7 C680.7,377.3 678.4,380.1 692.4,381.5 C706.4,382.9 738.7,379.3 754.0,377.0 C769.3,374.7 776.3,368.9 784.0,367.5 C791.7,366.1 793.5,367.6 800.0,368.7 C806.5,369.8 819.2,373.1 823.0,374.0"/><path d="M692.4,381.5 C693.8,384.4 699.9,390.2 700.5,399.0 C701.1,407.8 694.2,422.8 696.0,434.0 C697.8,445.2 703.7,456.8 711.0,466.0 C718.3,475.2 732.4,483.5 740.0,489.3 C747.6,495.1 753.7,499.1 756.4,501.0"/><path d="M748.0,166.0 C747.5,169.1 743.4,176.1 744.8,184.6 C746.2,193.1 751.4,207.3 756.4,217.0 C761.4,226.7 767.7,232.1 775.0,243.0 C782.3,253.9 792.0,273.0 800.0,282.5 C808.0,292.0 819.2,297.1 823.0,300.0"/><path d="M775.0,243.0 C771.5,244.9 759.4,248.7 754.0,254.5 C748.6,260.3 746.3,271.8 742.5,278.0 C738.7,284.2 733.3,287.0 731.0,292.0 C728.7,297.0 731.2,293.7 728.5,308.0 C725.8,322.3 716.8,366.3 714.5,378.0"/><path d="M728.5,308.0 C729.2,311.5 728.8,317.7 733.0,329.0 C737.2,340.3 742.8,363.7 754.0,375.7 C765.2,387.7 792.3,396.8 800.0,401.0"/><path d="M754.0,375.7 L768.0,350.0"/><path d="M702.8,312.8 C705.3,313.2 714.5,313.9 718.0,315.0 C721.5,316.1 722.8,318.9 723.8,319.7"/><path d="M400.0,626.7 C432.2,618.4 558.4,587.2 593.4,576.7 C628.4,566.2 601.2,573.3 609.7,563.8 C618.2,554.3 636.8,527.4 644.6,519.6 C652.4,511.9 644.6,517.3 656.3,517.3 C667.9,517.3 702.1,520.8 714.5,519.6 C726.9,518.4 725.4,514.2 730.8,510.3 C736.2,506.4 741.6,500.6 747.0,496.3 C752.4,492.0 754.6,489.7 763.4,484.6 C772.2,479.6 793.9,469.1 800.0,466.0"/><path d="M749.5,515.0 C747.5,521.2 738.6,545.4 737.8,552.0 C737.0,558.6 743.6,554.1 744.8,554.5"/><path d="M754.0,515.0 L756.4,529.0"/><path d="M758.8,501.0 C761.9,505.7 770.5,520.5 777.4,529.0 C784.3,537.5 794.2,545.8 800.0,552.0 C805.8,558.2 810.0,563.7 812.0,566.0"/><path d="M800.0,519.6 C795.5,527.0 783.5,543.2 772.7,563.8 C762.0,584.4 747.1,623.2 735.5,643.0 C723.9,662.8 708.3,676.1 702.9,682.7"/><path d="M812.0,545.0 C810.0,546.2 805.0,542.7 800.0,552.0 C795.0,561.3 788.1,586.6 782.0,601.0 C775.9,615.4 771.9,625.2 763.4,638.4 C754.9,651.6 748.6,659.0 730.8,680.3 C712.9,701.6 672.6,748.0 656.3,766.0 C640.0,784.0 642.3,779.7 633.0,788.5 C623.7,797.3 613.9,802.9 600.3,818.8 C586.7,834.7 567.3,864.2 551.4,884.0 C535.5,903.8 526.5,920.5 504.8,937.6 C483.1,954.7 435.0,978.4 421.0,986.5"/><path d="M793.7,619.8 L782.0,650.0"/><path d="M744.8,629.0 C751.0,632.5 774.5,645.7 782.0,650.0 C789.5,654.3 788.7,654.2 790.0,655.0"/><path d="M784.0,590.0 C785.8,590.3 793.2,590.0 795.0,592.0 C796.8,594.0 796.3,599.7 795.0,602.0 C793.7,604.3 788.3,605.3 787.0,606.0"/><path d="M551.4,884.0 C553.2,885.2 560.5,882.8 562.0,891.0 C563.5,899.2 557.8,920.6 560.7,933.0 C563.6,945.4 576.3,960.2 579.4,965.6"/><path d="M846.6,466.0 C855.9,458.7 885.0,433.2 902.5,422.0 C920.0,410.8 929.6,407.5 951.4,399.0 C973.1,390.5 1003.9,378.0 1033.0,371.0 C1062.1,364.0 1098.2,358.2 1126.0,357.0 C1153.8,355.8 1187.7,361.9 1200.0,364.0 C1212.3,366.1 1180.6,363.2 1200.0,369.8 C1219.4,376.4 1289.3,395.8 1316.5,403.6 C1343.7,411.4 1343.6,411.3 1363.0,416.4 C1382.4,421.5 1403.9,425.7 1433.0,434.0 C1462.1,442.3 1505.0,454.9 1537.8,466.0 C1570.6,477.1 1610.4,492.5 1629.6,500.6 C1648.8,508.7 1634.0,502.9 1653.0,514.5 C1672.0,526.1 1730.1,560.4 1743.7,570.5 C1757.3,580.6 1736.4,573.1 1734.4,575.0 C1732.5,576.9 1732.4,580.8 1732.0,582.0"/><path d="M1061.0,347.7 C1063.3,341.5 1068.0,318.9 1075.0,310.4 C1082.0,301.9 1095.9,301.9 1102.9,296.5 C1109.9,291.1 1114.0,284.1 1116.8,277.8 C1119.6,271.6 1121.2,264.8 1120.0,259.0 C1118.8,253.2 1116.5,247.7 1109.8,242.9 C1103.1,238.1 1084.6,232.2 1079.6,230.0"/><path d="M1137.8,359.4 C1133.1,365.2 1113.7,383.8 1109.8,394.3 C1105.9,404.8 1110.2,410.4 1114.5,422.3 C1118.8,434.2 1127.9,453.9 1135.5,466.0 C1143.1,478.1 1148.4,484.0 1160.0,495.0 C1171.6,506.0 1197.5,525.8 1205.0,532.0"/><path d="M1068.0,215.0 C1087.0,212.3 1160.0,200.9 1182.0,198.6 C1204.0,196.3 1197.0,198.7 1200.0,201.0 C1203.0,203.3 1198.5,210.3 1200.0,212.6 C1201.5,214.9 1203.5,209.9 1209.3,215.0 C1215.1,220.1 1229.2,234.7 1235.0,242.9 C1240.8,251.1 1242.7,253.5 1244.0,264.0 C1245.3,274.5 1246.8,288.0 1243.0,305.8 C1239.2,323.6 1224.7,360.1 1221.0,371.0"/><path d="M1142.5,210.0 C1141.7,212.0 1137.4,217.7 1137.8,222.0 C1138.2,226.3 1143.6,233.7 1144.8,236.0"/><path d="M1068.0,166.0 C1065.7,173.8 1056.0,201.3 1054.0,212.6 C1052.0,223.9 1055.9,230.1 1056.3,233.6"/><path d="M1074.0,166.0 C1072.0,173.3 1063.7,199.7 1062.0,210.0 C1060.3,220.3 1063.7,225.0 1064.0,228.0"/><path d="M870.0,166.0 C874.6,167.6 895.1,171.4 897.8,175.3 C900.5,179.2 888.3,179.6 886.2,189.3 C884.1,199.0 891.6,222.7 885.0,233.6 C878.4,244.5 856.9,246.8 846.6,254.5 C836.3,262.2 831.1,275.4 823.3,280.0 C815.5,284.6 803.9,281.7 800.0,282.0"/><path d="M885.0,233.6 C892.6,231.7 919.4,222.4 930.5,222.0 C941.6,221.6 946.0,227.3 951.4,231.2 C956.8,235.1 961.1,242.9 963.0,245.2"/><path d="M986.4,177.6 L993.4,166.0"/><path d="M986.4,177.6 C988.7,179.7 995.0,187.3 1000.0,190.0 C1005.0,192.7 1013.5,198.0 1016.7,194.0 C1019.9,190.0 1018.6,170.7 1019.0,166.0"/><path d="M991.0,215.0 L1000.3,245.2"/><path d="M1316.5,403.6 C1320.0,394.3 1337.8,362.1 1337.4,347.7 C1337.0,333.3 1317.3,327.1 1314.0,317.4 C1310.7,307.7 1320.3,295.7 1317.6,289.5 C1314.9,283.3 1302.4,283.1 1298.0,280.0 C1293.6,276.9 1296.5,272.5 1291.0,271.0 C1285.5,269.5 1272.4,266.0 1265.0,271.0 C1257.6,276.0 1249.7,296.0 1246.6,301.0"/><path d="M1274.5,268.5 C1274.9,265.8 1271.2,253.8 1277.0,252.0 C1282.8,250.2 1304.1,257.0 1309.5,258.0"/><path d="M1363.0,416.4 C1364.6,415.8 1368.6,419.8 1372.4,413.0 C1376.2,406.2 1379.1,384.2 1386.0,375.7 C1392.9,367.1 1406.6,362.1 1414.0,361.7 C1421.4,361.3 1427.8,371.4 1430.6,373.3"/><path d="M1409.7,361.7 C1409.3,357.8 1405.8,345.8 1407.3,338.4 C1408.8,331.0 1418.2,322.8 1419.0,317.4 C1419.8,312.0 1412.2,318.6 1412.0,305.8 C1411.8,293.0 1416.8,251.4 1417.8,240.5"/><path d="M1395.7,336.0 C1396.4,336.7 1398.1,339.6 1400.0,340.0 C1401.9,340.4 1406.1,338.7 1407.3,338.4"/><path d="M1363.0,420.0 C1362.8,421.7 1356.2,422.3 1362.0,430.0 C1367.8,437.7 1386.7,456.0 1398.0,466.0 C1409.3,476.0 1424.7,486.0 1430.0,490.0"/><path d="M1514.5,253.4 C1513.3,250.5 1503.2,241.4 1507.5,236.0 C1511.8,230.6 1524.6,224.2 1540.0,220.7 C1555.4,217.2 1583.3,216.4 1600.0,215.0 C1616.7,213.6 1623.3,213.7 1640.0,212.0 C1656.7,210.3 1682.5,206.7 1700.0,205.0 C1717.5,203.3 1737.5,202.5 1745.0,202.0"/><path d="M1442.0,301.0 C1443.6,308.0 1441.4,330.6 1451.6,343.0 C1461.8,355.4 1489.8,367.5 1503.0,375.7 C1516.2,383.9 1522.3,386.6 1530.8,392.0 C1539.3,397.4 1542.5,402.5 1554.0,408.3 C1565.5,414.1 1582.3,423.1 1600.0,427.0 C1617.7,430.9 1645.0,428.7 1660.0,432.0 C1675.0,435.3 1683.0,436.7 1690.0,447.0 C1697.0,457.3 1699.8,485.8 1701.8,493.6"/><path d="M1662.2,503.0 C1671.5,501.8 1707.5,496.0 1718.0,496.0 C1728.5,496.0 1721.9,500.7 1725.0,503.0 C1728.1,505.3 1734.8,508.8 1736.7,510.0"/><path d="M1653.0,514.5 C1651.0,516.4 1646.3,520.6 1641.2,526.0 C1636.1,531.4 1633.1,538.0 1622.6,547.0 C1612.1,556.0 1588.6,572.8 1578.0,580.0 C1567.4,587.2 1568.4,586.9 1559.0,590.0 C1549.6,593.1 1532.5,599.3 1521.8,598.8 C1511.0,598.3 1499.0,588.8 1494.5,586.8"/><path d="M1743.7,591.4 C1736.7,600.0 1709.6,631.1 1701.8,642.7 C1694.0,654.4 1697.6,653.1 1697.0,661.3 C1696.4,669.4 1701.8,678.5 1698.3,691.6 C1694.8,704.7 1683.9,725.8 1676.2,740.0 C1668.5,754.2 1659.1,766.8 1652.3,777.0 C1645.5,787.2 1639.4,793.7 1635.4,801.0 C1631.5,808.3 1632.5,814.8 1628.6,821.0 C1624.6,827.2 1618.5,829.5 1611.7,838.0 C1604.9,846.5 1599.8,855.0 1588.0,872.0 C1576.2,889.0 1551.9,924.2 1540.6,939.7 C1529.3,955.2 1527.1,960.0 1520.3,965.0 C1513.5,970.0 1503.4,969.2 1500.0,970.0"/><path d="M1655.2,454.0 L1652.9,486.6"/><path d="M1662.2,454.0 L1683.0,444.7"/><path d="M1685.5,447.0 L1690.0,440.0"/><path d="M1685.0,590.0 L1740.0,585.0"/><path d="M1688.0,600.0 L1743.0,596.0"/><path d="M1690.0,588.0 L1695.0,607.0"/><path d="M1710.0,586.0 L1713.0,606.0"/><path d="M1725.0,585.0 L1728.0,604.0"/><path d="M1557.0,173.0 C1561.7,177.5 1571.2,195.8 1585.0,200.0 C1598.8,204.2 1630.8,198.3 1640.0,198.0"/><path d="M1550.0,212.0 C1565.0,212.7 1616.7,213.0 1640.0,216.0 C1663.3,219.0 1672.5,223.5 1690.0,230.0 C1707.5,236.5 1731.7,248.3 1745.0,255.0 C1758.3,261.7 1765.8,267.5 1770.0,270.0"/><path d="M1622.0,212.0 C1623.3,213.7 1630.0,218.2 1630.0,222.0 C1630.0,225.8 1623.3,232.8 1622.0,235.0"/><path d="M1062.0,349.0 C1064.2,349.8 1068.7,353.3 1075.0,354.0 C1081.3,354.7 1090.8,353.4 1100.0,353.0 C1109.2,352.6 1118.3,352.2 1130.0,351.7 C1141.7,351.2 1158.3,349.3 1170.0,350.0 C1181.7,350.7 1190.0,352.7 1200.0,356.0 C1210.0,359.3 1225.0,367.7 1230.0,370.0"/><path d="M1745.0,202.0 C1745.5,208.3 1747.5,226.8 1748.0,240.0 C1748.5,253.2 1748.3,266.0 1748.0,281.0 C1747.7,296.0 1746.7,316.5 1746.0,330.0 C1745.3,343.5 1747.5,351.2 1744.0,362.0 C1740.5,372.8 1731.0,382.0 1725.0,395.0 C1719.0,408.0 1710.8,432.5 1708.0,440.0"/><path d="M1654.0,336.0 C1661.7,336.7 1684.5,335.7 1700.0,340.0 C1715.5,344.3 1739.2,358.3 1747.0,362.0"/><path d="M1654.0,347.0 C1661.7,347.8 1684.8,349.2 1700.0,352.0 C1715.2,354.8 1737.5,362.0 1745.0,364.0"/><path d="M1654.0,322.0 C1653.5,331.7 1652.3,360.3 1651.0,380.0 C1649.7,399.7 1646.8,430.0 1646.0,440.0"/><path d="M1702.0,341.0 C1700.0,347.5 1695.3,368.5 1690.0,380.0 C1684.7,391.5 1675.5,401.5 1670.0,410.0 C1664.5,418.5 1659.2,427.5 1657.0,431.0"/><path d="M1212.0,543.0 C1216.7,545.0 1230.8,550.5 1240.0,555.0 C1249.2,559.5 1257.0,564.2 1267.0,570.0 C1277.0,575.8 1291.8,583.7 1300.0,590.0 C1308.2,596.3 1313.3,605.0 1316.0,608.0"/><path d="M1205.0,533.0 C1203.7,534.2 1202.2,534.4 1197.0,540.0 C1191.8,545.6 1175.6,558.3 1173.6,566.6 C1171.6,574.9 1178.6,583.9 1185.0,590.0 C1191.4,596.1 1207.5,600.8 1212.0,603.0"/><path d="M982.0,491.0 C986.0,494.3 998.0,507.3 1006.0,511.0 C1014.0,514.7 1020.8,509.0 1030.0,513.0 C1039.2,517.0 1055.8,531.3 1061.0,535.0"/><path d="M903.0,420.0 C907.5,423.3 921.3,431.7 930.0,440.0 C938.7,448.3 946.3,461.5 955.0,470.0 C963.7,478.5 977.5,487.5 982.0,491.0"/></g><g fill="none" stroke="#b8b8c0" stroke-width="1.5" stroke-dasharray="1.5,1.5"><path d="M400.0,240.5 C406.2,243.6 425.3,253.0 437.0,259.0 C448.7,265.0 449.0,269.7 470.0,276.7 C491.0,283.7 536.7,292.1 563.0,301.0 C589.3,309.9 610.2,318.7 628.0,330.0 C645.8,341.3 659.3,360.1 670.0,368.7 C680.7,377.3 678.4,380.1 692.4,381.5 C706.4,382.9 738.7,379.3 754.0,377.0 C769.3,374.7 776.3,368.9 784.0,367.5 C791.7,366.1 793.5,367.6 800.0,368.7 C806.5,369.8 819.2,373.1 823.0,374.0"/><path d="M692.4,381.5 C693.8,384.4 699.9,390.2 700.5,399.0 C701.1,407.8 694.2,422.8 696.0,434.0 C697.8,445.2 703.7,456.8 711.0,466.0 C718.3,475.2 732.4,483.5 740.0,489.3 C747.6,495.1 753.7,499.1 756.4,501.0"/><path d="M748.0,166.0 C747.5,169.1 743.4,176.1 744.8,184.6 C746.2,193.1 751.4,207.3 756.4,217.0 C761.4,226.7 767.7,232.1 775.0,243.0 C782.3,253.9 792.0,273.0 800.0,282.5 C808.0,292.0 819.2,297.1 823.0,300.0"/><path d="M775.0,243.0 C771.5,244.9 759.4,248.7 754.0,254.5 C748.6,260.3 746.3,271.8 742.5,278.0 C738.7,284.2 733.3,287.0 731.0,292.0 C728.7,297.0 731.2,293.7 728.5,308.0 C725.8,322.3 716.8,366.3 714.5,378.0"/><path d="M728.5,308.0 C729.2,311.5 728.8,317.7 733.0,329.0 C737.2,340.3 742.8,363.7 754.0,375.7 C765.2,387.7 792.3,396.8 800.0,401.0"/><path d="M754.0,375.7 L768.0,350.0"/><path d="M702.8,312.8 C705.3,313.2 714.5,313.9 718.0,315.0 C721.5,316.1 722.8,318.9 723.8,319.7"/><path d="M400.0,626.7 C432.2,618.4 558.4,587.2 593.4,576.7 C628.4,566.2 601.2,573.3 609.7,563.8 C618.2,554.3 636.8,527.4 644.6,519.6 C652.4,511.9 644.6,517.3 656.3,517.3 C667.9,517.3 702.1,520.8 714.5,519.6 C726.9,518.4 725.4,514.2 730.8,510.3 C736.2,506.4 741.6,500.6 747.0,496.3 C752.4,492.0 754.6,489.7 763.4,484.6 C772.2,479.6 793.9,469.1 800.0,466.0"/><path d="M749.5,515.0 C747.5,521.2 738.6,545.4 737.8,552.0 C737.0,558.6 743.6,554.1 744.8,554.5"/><path d="M754.0,515.0 L756.4,529.0"/><path d="M758.8,501.0 C761.9,505.7 770.5,520.5 777.4,529.0 C784.3,537.5 794.2,545.8 800.0,552.0 C805.8,558.2 810.0,563.7 812.0,566.0"/><path d="M800.0,519.6 C795.5,527.0 783.5,543.2 772.7,563.8 C762.0,584.4 747.1,623.2 735.5,643.0 C723.9,662.8 708.3,676.1 702.9,682.7"/><path d="M812.0,545.0 C810.0,546.2 805.0,542.7 800.0,552.0 C795.0,561.3 788.1,586.6 782.0,601.0 C775.9,615.4 771.9,625.2 763.4,638.4 C754.9,651.6 748.6,659.0 730.8,680.3 C712.9,701.6 672.6,748.0 656.3,766.0 C640.0,784.0 642.3,779.7 633.0,788.5 C623.7,797.3 613.9,802.9 600.3,818.8 C586.7,834.7 567.3,864.2 551.4,884.0 C535.5,903.8 526.5,920.5 504.8,937.6 C483.1,954.7 435.0,978.4 421.0,986.5"/><path d="M793.7,619.8 L782.0,650.0"/><path d="M744.8,629.0 C751.0,632.5 774.5,645.7 782.0,650.0 C789.5,654.3 788.7,654.2 790.0,655.0"/><path d="M784.0,590.0 C785.8,590.3 793.2,590.0 795.0,592.0 C796.8,594.0 796.3,599.7 795.0,602.0 C793.7,604.3 788.3,605.3 787.0,606.0"/><path d="M551.4,884.0 C553.2,885.2 560.5,882.8 562.0,891.0 C563.5,899.2 557.8,920.6 560.7,933.0 C563.6,945.4 576.3,960.2 579.4,965.6"/><path d="M846.6,466.0 C855.9,458.7 885.0,433.2 902.5,422.0 C920.0,410.8 929.6,407.5 951.4,399.0 C973.1,390.5 1003.9,378.0 1033.0,371.0 C1062.1,364.0 1098.2,358.2 1126.0,357.0 C1153.8,355.8 1187.7,361.9 1200.0,364.0 C1212.3,366.1 1180.6,363.2 1200.0,369.8 C1219.4,376.4 1289.3,395.8 1316.5,403.6 C1343.7,411.4 1343.6,411.3 1363.0,416.4 C1382.4,421.5 1403.9,425.7 1433.0,434.0 C1462.1,442.3 1505.0,454.9 1537.8,466.0 C1570.6,477.1 1610.4,492.5 1629.6,500.6 C1648.8,508.7 1634.0,502.9 1653.0,514.5 C1672.0,526.1 1730.1,560.4 1743.7,570.5 C1757.3,580.6 1736.4,573.1 1734.4,575.0 C1732.5,576.9 1732.4,580.8 1732.0,582.0"/><path d="M1061.0,347.7 C1063.3,341.5 1068.0,318.9 1075.0,310.4 C1082.0,301.9 1095.9,301.9 1102.9,296.5 C1109.9,291.1 1114.0,284.1 1116.8,277.8 C1119.6,271.6 1121.2,264.8 1120.0,259.0 C1118.8,253.2 1116.5,247.7 1109.8,242.9 C1103.1,238.1 1084.6,232.2 1079.6,230.0"/><path d="M1137.8,359.4 C1133.1,365.2 1113.7,383.8 1109.8,394.3 C1105.9,404.8 1110.2,410.4 1114.5,422.3 C1118.8,434.2 1127.9,453.9 1135.5,466.0 C1143.1,478.1 1148.4,484.0 1160.0,495.0 C1171.6,506.0 1197.5,525.8 1205.0,532.0"/><path d="M1068.0,215.0 C1087.0,212.3 1160.0,200.9 1182.0,198.6 C1204.0,196.3 1197.0,198.7 1200.0,201.0 C1203.0,203.3 1198.5,210.3 1200.0,212.6 C1201.5,214.9 1203.5,209.9 1209.3,215.0 C1215.1,220.1 1229.2,234.7 1235.0,242.9 C1240.8,251.1 1242.7,253.5 1244.0,264.0 C1245.3,274.5 1246.8,288.0 1243.0,305.8 C1239.2,323.6 1224.7,360.1 1221.0,371.0"/><path d="M1142.5,210.0 C1141.7,212.0 1137.4,217.7 1137.8,222.0 C1138.2,226.3 1143.6,233.7 1144.8,236.0"/><path d="M1068.0,166.0 C1065.7,173.8 1056.0,201.3 1054.0,212.6 C1052.0,223.9 1055.9,230.1 1056.3,233.6"/><path d="M1074.0,166.0 C1072.0,173.3 1063.7,199.7 1062.0,210.0 C1060.3,220.3 1063.7,225.0 1064.0,228.0"/><path d="M870.0,166.0 C874.6,167.6 895.1,171.4 897.8,175.3 C900.5,179.2 888.3,179.6 886.2,189.3 C884.1,199.0 891.6,222.7 885.0,233.6 C878.4,244.5 856.9,246.8 846.6,254.5 C836.3,262.2 831.1,275.4 823.3,280.0 C815.5,284.6 803.9,281.7 800.0,282.0"/><path d="M885.0,233.6 C892.6,231.7 919.4,222.4 930.5,222.0 C941.6,221.6 946.0,227.3 951.4,231.2 C956.8,235.1 961.1,242.9 963.0,245.2"/><path d="M986.4,177.6 L993.4,166.0"/><path d="M986.4,177.6 C988.7,179.7 995.0,187.3 1000.0,190.0 C1005.0,192.7 1013.5,198.0 1016.7,194.0 C1019.9,190.0 1018.6,170.7 1019.0,166.0"/><path d="M991.0,215.0 L1000.3,245.2"/><path d="M1316.5,403.6 C1320.0,394.3 1337.8,362.1 1337.4,347.7 C1337.0,333.3 1317.3,327.1 1314.0,317.4 C1310.7,307.7 1320.3,295.7 1317.6,289.5 C1314.9,283.3 1302.4,283.1 1298.0,280.0 C1293.6,276.9 1296.5,272.5 1291.0,271.0 C1285.5,269.5 1272.4,266.0 1265.0,271.0 C1257.6,276.0 1249.7,296.0 1246.6,301.0"/><path d="M1274.5,268.5 C1274.9,265.8 1271.2,253.8 1277.0,252.0 C1282.8,250.2 1304.1,257.0 1309.5,258.0"/><path d="M1363.0,416.4 C1364.6,415.8 1368.6,419.8 1372.4,413.0 C1376.2,406.2 1379.1,384.2 1386.0,375.7 C1392.9,367.1 1406.6,362.1 1414.0,361.7 C1421.4,361.3 1427.8,371.4 1430.6,373.3"/><path d="M1409.7,361.7 C1409.3,357.8 1405.8,345.8 1407.3,338.4 C1408.8,331.0 1418.2,322.8 1419.0,317.4 C1419.8,312.0 1412.2,318.6 1412.0,305.8 C1411.8,293.0 1416.8,251.4 1417.8,240.5"/><path d="M1395.7,336.0 C1396.4,336.7 1398.1,339.6 1400.0,340.0 C1401.9,340.4 1406.1,338.7 1407.3,338.4"/><path d="M1363.0,420.0 C1362.8,421.7 1356.2,422.3 1362.0,430.0 C1367.8,437.7 1386.7,456.0 1398.0,466.0 C1409.3,476.0 1424.7,486.0 1430.0,490.0"/><path d="M1514.5,253.4 C1513.3,250.5 1503.2,241.4 1507.5,236.0 C1511.8,230.6 1524.6,224.2 1540.0,220.7 C1555.4,217.2 1583.3,216.4 1600.0,215.0 C1616.7,213.6 1623.3,213.7 1640.0,212.0 C1656.7,210.3 1682.5,206.7 1700.0,205.0 C1717.5,203.3 1737.5,202.5 1745.0,202.0"/><path d="M1442.0,301.0 C1443.6,308.0 1441.4,330.6 1451.6,343.0 C1461.8,355.4 1489.8,367.5 1503.0,375.7 C1516.2,383.9 1522.3,386.6 1530.8,392.0 C1539.3,397.4 1542.5,402.5 1554.0,408.3 C1565.5,414.1 1582.3,423.1 1600.0,427.0 C1617.7,430.9 1645.0,428.7 1660.0,432.0 C1675.0,435.3 1683.0,436.7 1690.0,447.0 C1697.0,457.3 1699.8,485.8 1701.8,493.6"/><path d="M1662.2,503.0 C1671.5,501.8 1707.5,496.0 1718.0,496.0 C1728.5,496.0 1721.9,500.7 1725.0,503.0 C1728.1,505.3 1734.8,508.8 1736.7,510.0"/><path d="M1653.0,514.5 C1651.0,516.4 1646.3,520.6 1641.2,526.0 C1636.1,531.4 1633.1,538.0 1622.6,547.0 C1612.1,556.0 1588.6,572.8 1578.0,580.0 C1567.4,587.2 1568.4,586.9 1559.0,590.0 C1549.6,593.1 1532.5,599.3 1521.8,598.8 C1511.0,598.3 1499.0,588.8 1494.5,586.8"/><path d="M1743.7,591.4 C1736.7,600.0 1709.6,631.1 1701.8,642.7 C1694.0,654.4 1697.6,653.1 1697.0,661.3 C1696.4,669.4 1701.8,678.5 1698.3,691.6 C1694.8,704.7 1683.9,725.8 1676.2,740.0 C1668.5,754.2 1659.1,766.8 1652.3,777.0 C1645.5,787.2 1639.4,793.7 1635.4,801.0 C1631.5,808.3 1632.5,814.8 1628.6,821.0 C1624.6,827.2 1618.5,829.5 1611.7,838.0 C1604.9,846.5 1599.8,855.0 1588.0,872.0 C1576.2,889.0 1551.9,924.2 1540.6,939.7 C1529.3,955.2 1527.1,960.0 1520.3,965.0 C1513.5,970.0 1503.4,969.2 1500.0,970.0"/><path d="M1655.2,454.0 L1652.9,486.6"/><path d="M1662.2,454.0 L1683.0,444.7"/><path d="M1685.5,447.0 L1690.0,440.0"/><path d="M1685.0,590.0 L1740.0,585.0"/><path d="M1688.0,600.0 L1743.0,596.0"/><path d="M1690.0,588.0 L1695.0,607.0"/><path d="M1710.0,586.0 L1713.0,606.0"/><path d="M1725.0,585.0 L1728.0,604.0"/><path d="M1557.0,173.0 C1561.7,177.5 1571.2,195.8 1585.0,200.0 C1598.8,204.2 1630.8,198.3 1640.0,198.0"/><path d="M1550.0,212.0 C1565.0,212.7 1616.7,213.0 1640.0,216.0 C1663.3,219.0 1672.5,223.5 1690.0,230.0 C1707.5,236.5 1731.7,248.3 1745.0,255.0 C1758.3,261.7 1765.8,267.5 1770.0,270.0"/><path d="M1622.0,212.0 C1623.3,213.7 1630.0,218.2 1630.0,222.0 C1630.0,225.8 1623.3,232.8 1622.0,235.0"/><path d="M1062.0,349.0 C1064.2,349.8 1068.7,353.3 1075.0,354.0 C1081.3,354.7 1090.8,353.4 1100.0,353.0 C1109.2,352.6 1118.3,352.2 1130.0,351.7 C1141.7,351.2 1158.3,349.3 1170.0,350.0 C1181.7,350.7 1190.0,352.7 1200.0,356.0 C1210.0,359.3 1225.0,367.7 1230.0,370.0"/><path d="M1745.0,202.0 C1745.5,208.3 1747.5,226.8 1748.0,240.0 C1748.5,253.2 1748.3,266.0 1748.0,281.0 C1747.7,296.0 1746.7,316.5 1746.0,330.0 C1745.3,343.5 1747.5,351.2 1744.0,362.0 C1740.5,372.8 1731.0,382.0 1725.0,395.0 C1719.0,408.0 1710.8,432.5 1708.0,440.0"/><path d="M1654.0,336.0 C1661.7,336.7 1684.5,335.7 1700.0,340.0 C1715.5,344.3 1739.2,358.3 1747.0,362.0"/><path d="M1654.0,347.0 C1661.7,347.8 1684.8,349.2 1700.0,352.0 C1715.2,354.8 1737.5,362.0 1745.0,364.0"/><path d="M1654.0,322.0 C1653.5,331.7 1652.3,360.3 1651.0,380.0 C1649.7,399.7 1646.8,430.0 1646.0,440.0"/><path d="M1702.0,341.0 C1700.0,347.5 1695.3,368.5 1690.0,380.0 C1684.7,391.5 1675.5,401.5 1670.0,410.0 C1664.5,418.5 1659.2,427.5 1657.0,431.0"/><path d="M1212.0,543.0 C1216.7,545.0 1230.8,550.5 1240.0,555.0 C1249.2,559.5 1257.0,564.2 1267.0,570.0 C1277.0,575.8 1291.8,583.7 1300.0,590.0 C1308.2,596.3 1313.3,605.0 1316.0,608.0"/><path d="M1205.0,533.0 C1203.7,534.2 1202.2,534.4 1197.0,540.0 C1191.8,545.6 1175.6,558.3 1173.6,566.6 C1171.6,574.9 1178.6,583.9 1185.0,590.0 C1191.4,596.1 1207.5,600.8 1212.0,603.0"/><path d="M982.0,491.0 C986.0,494.3 998.0,507.3 1006.0,511.0 C1014.0,514.7 1020.8,509.0 1030.0,513.0 C1039.2,517.0 1055.8,531.3 1061.0,535.0"/><path d="M903.0,420.0 C907.5,423.3 921.3,431.7 930.0,440.0 C938.7,448.3 946.3,461.5 955.0,470.0 C963.7,478.5 977.5,487.5 982.0,491.0"/></g><clipPath id="tc"><path d="M850.0,284.8 L972.4,242.9 L1010.8,246.4 L1015.5,259.2 L1056.3,228.9 L1113.0,269.7 L1092.0,290.8 L1068.4,277.2 L1032.3,309.5 L1067.0,341.2 L1043.5,361.7 L974.7,385.0 L939.8,401.3 L902.5,420.0 L870.0,438.6 L850.4,461.5 L812.0,515.0 L807.0,508.0 L789.6,501.7 L796.0,494.0 L815.6,469.0 L824.0,456.0 L814.6,455.0 L803.7,449.6 L751.5,508.0 L738.5,511.5 L729.8,508.0 L785.0,432.0 L797.0,417.0 L797.0,395.0 L792.0,341.0Z"/></clipPath><clipPath id="rc"><path d="M883.8,440.0 C895.3,437.5 934.0,426.3 953.0,425.0 C972.0,423.7 988.1,428.7 997.8,432.0 C1007.5,435.3 1008.4,439.1 1011.0,445.0 C1013.6,450.9 1015.2,461.0 1013.6,467.3 C1012.0,473.6 1007.3,479.6 1001.6,482.7 C995.9,485.8 986.8,487.5 979.4,486.1 C972.0,484.7 963.8,470.5 957.2,474.2 C950.6,477.9 939.1,495.8 940.0,508.3 C940.9,520.8 962.3,540.8 962.3,549.3 C962.3,557.8 943.7,552.8 940.0,559.6 C936.3,566.4 945.7,583.2 940.0,590.3 C934.3,597.4 916.8,601.4 906.0,602.3 C895.2,603.2 882.0,598.0 875.2,595.5 C868.4,593.0 861.6,596.4 865.0,587.0 C868.4,577.6 893.2,551.1 895.7,539.1 C898.2,527.1 884.0,523.2 880.3,515.2 C876.6,507.2 874.1,500.1 873.5,491.3 C872.9,482.5 875.2,470.8 876.9,462.2 C878.6,453.6 882.6,443.7 883.8,440.0"/></clipPath><g clip-path="url(#tc)"><path d="M652.5,338.9L672.7,323.1M680.0,317.4L713.3,291.4M763.4,252.2L804.9,219.8M815.8,211.3L833.0,197.9M847.0,186.9L877.4,163.2M913.1,135.3L935.6,117.7M949.6,106.8L978.1,84.5M663.5,353.1L708.0,318.4M762.8,275.5L778.1,263.6M783.4,259.5L829.4,223.5M840.2,215.1L862.7,197.5M870.2,191.6L894.5,172.7M904.7,164.7L948.6,130.4M729.1,319.9L761.1,294.9M766.3,290.8L807.6,258.5M866.3,212.7L883.4,199.3M896.1,189.4L938.9,155.9M949.5,147.7L962.9,137.2M684.6,380.0L707.4,362.2M717.8,354.1L730.7,344.0M738.5,337.8L772.0,311.7M774.9,309.4L817.5,276.1M832.7,264.3L876.3,230.2M884.9,223.5L915.1,199.9M925.5,191.8L957.1,167.1M972.1,155.4L1001.9,132.1M725.4,366.7L756.7,342.3M764.6,336.1L797.0,310.8M807.6,302.5L841.9,275.7M852.6,267.3L881.0,245.2M888.1,239.6L924.9,210.8M927.6,208.7L941.6,197.8M956.8,185.9L977.6,169.7M987.9,161.6L1011.0,143.5M703.2,403.8L736.1,378.1M743.5,372.3L782.7,341.7M792.7,333.9L830.6,304.3M836.0,300.1L876.3,268.6M881.2,264.8L908.4,243.5M912.1,240.6L935.4,222.4M980.9,186.9L1004.7,168.3M713.1,416.6L732.9,401.1M774.6,368.6L792.9,354.3M847.6,311.5L864.1,298.6M877.1,288.5L898.5,271.7M906.4,265.5L933.2,244.7M947.8,233.2L965.2,219.6M725.2,432.1L769.9,397.1M782.3,387.5L823.8,355.1M833.1,347.8L855.2,330.5M860.6,326.3L874.8,315.2M881.0,310.3L921.6,278.7M986.8,227.7L1030.5,193.5M736.4,446.4L754.3,432.4M765.6,423.6L796.0,399.9M811.0,388.2L844.5,362.0M850.2,357.5L892.6,324.4M905.5,314.4L929.8,295.4M939.3,287.9L980.1,256.1M781.6,427.7L803.1,410.9M812.5,403.6L839.3,382.6M852.1,372.6L864.0,363.3M868.0,360.2L884.3,347.5M899.7,335.4L941.8,302.5M950.9,295.4L973.9,277.4M981.0,271.9L1015.7,244.8M1022.9,239.1L1041.5,224.6M1045.6,221.5L1077.1,196.8M752.8,467.4L771.0,453.2M781.4,445.0L821.0,414.1M834.1,403.9L868.0,377.4M875.4,371.6L904.8,348.7M912.8,342.4L949.2,313.9M954.9,309.5L985.7,285.5M989.0,282.9L1015.9,261.9M1030.0,250.8L1075.1,215.6M764.2,482.0L785.3,465.5M789.4,462.4L830.0,430.6M844.3,419.5L884.2,388.3M896.4,378.7L928.2,353.9M938.4,345.9L950.4,336.5M963.2,326.6L976.6,316.1M980.3,313.2L1023.3,279.6M1026.0,277.5L1067.6,244.9M826.7,455.6L866.9,424.3M879.5,414.4L909.5,391.0M954.8,355.6L978.1,337.3M991.6,326.8L1012.0,310.9M1059.0,274.2L1083.9,254.7M784.9,508.5L799.7,497.0M815.1,484.9L841.6,464.3M893.8,423.5L924.0,399.9M934.9,391.3L978.6,357.2M1029.9,317.1L1057.4,295.6M1062.3,291.8L1083.6,275.2M794.3,520.5L814.4,504.8M829.5,493.0L851.8,475.6M859.7,469.4L901.8,436.5M907.7,431.9L927.3,416.6M936.1,409.7L961.5,389.9M996.2,362.8L1043.1,326.1M1095.3,285.3L1126.9,260.6M806.0,535.5L832.0,515.1M847.2,503.2L875.6,481.0M881.1,476.7L918.4,447.6M933.6,435.7L975.7,402.9M980.6,399.0L1001.6,382.6M1061.5,335.9L1104.0,302.7M817.1,549.7L832.0,538.1M845.5,527.5L867.7,510.2M877.9,502.3L913.6,474.3M920.5,469.0L947.8,447.7M993.1,412.2L1024.2,387.9M1030.3,383.2L1065.7,355.5M1079.9,344.4L1124.0,310.0M872.3,526.5L908.1,498.5M957.7,459.7L993.4,431.8M997.3,428.8L1026.6,405.9M1038.6,396.5L1074.5,368.5M1079.3,364.7L1114.0,337.6M1118.8,333.9L1162.1,300.0M838.8,577.4L855.6,564.3M867.6,554.9L900.6,529.1M911.7,520.5L939.7,498.5M944.5,494.9L958.7,483.7M971.2,474.0L1002.3,449.7M1009.4,444.1L1030.7,427.5M1044.7,416.5L1058.0,406.1M1063.7,401.7L1102.8,371.1M1109.6,365.8L1135.8,345.4M848.3,589.6L890.2,556.9M896.1,552.2L911.5,540.2M924.3,530.2L961.9,500.8M966.8,497.0L993.4,476.2M1006.7,465.9L1045.1,435.9M1049.4,432.5L1075.3,412.2M1084.8,404.9L1116.7,379.9M1122.5,375.4L1162.0,344.5M860.1,604.8L905.6,569.2M915.4,561.6L947.9,536.2M963.3,524.1L999.5,495.9M1013.4,485.0L1042.4,462.4M1077.6,434.9L1106.9,412.0M1115.4,405.3L1134.1,390.7M1137.0,388.5L1166.5,365.4M920.6,579.1L960.5,547.9M963.6,545.5L988.1,526.3M1029.2,494.2L1071.9,460.9M1076.0,457.6L1118.3,424.6M1133.1,413.1L1170.3,384.0M935.2,591.4L973.8,561.1M977.6,558.2L991.0,547.7M996.0,543.8L1013.5,530.1M1025.3,520.9L1056.1,496.8M1067.2,488.2L1089.8,470.5M1102.3,460.7L1128.4,440.4M1142.8,429.1L1180.1,399.9M935.6,101.4L963.6,132.5M985.6,156.9L1009.5,183.4M1013.9,188.3L1029.0,205.2M1033.0,209.5L1043.8,221.6M1047.7,225.9L1072.5,253.5M1074.8,256.0L1098.3,282.1M1108.3,293.2L1119.9,306.1M1141.8,330.4L1154.7,344.7M1158.5,349.0L1187.3,380.9M1190.7,384.7L1202.3,397.6M951.3,146.5L968.9,166.0M980.1,178.5L1009.1,210.7M1051.5,257.8L1061.7,269.1M1064.7,272.4L1079.9,289.3M1116.5,330.0L1155.9,373.7M964.1,183.3L985.9,207.5M995.6,218.3L1033.6,260.5M1084.5,317.0L1122.3,359.0M1153.4,393.6L1171.6,413.8M897.8,135.4L929.2,170.3M936.7,178.7L951.4,195.0M987.5,235.1L1000.5,249.5M1087.3,345.9L1107.4,368.2M1135.5,399.4L1162.6,429.6M884.7,147.1L902.0,166.3M905.8,170.5L935.2,203.2M958.8,229.4L985.8,259.4M1033.0,311.8L1048.7,329.3M1051.6,332.5L1086.5,371.3M1088.8,373.8L1127.9,417.3M1140.1,430.8L1152.7,444.8M870.8,159.7L899.3,191.5M910.0,203.3L946.3,243.6M955.1,253.5L978.6,279.5M1022.4,328.1L1048.7,357.3M1058.9,368.7L1071.3,382.5M1078.8,390.8L1091.0,404.4M1101.4,415.9L1124.2,441.2M886.4,198.8L909.4,224.3M984.5,307.7L1022.6,350.0M845.5,182.5L861.0,199.8M871.3,211.2L890.2,232.2M899.5,242.5L910.7,255.0M915.9,260.7L938.9,286.3M949.4,297.9L981.9,334.0M985.1,337.6L1004.1,358.7M1083.0,446.4L1104.3,470.0M833.4,193.4L859.3,222.1M865.4,228.9L901.1,268.5M969.9,345.0L983.9,360.6M992.0,369.6L1007.1,386.3M1011.4,391.1L1044.6,428.0M822.8,202.9L833.2,214.5M839.1,221.0L850.6,233.9M853.7,237.3L873.1,258.9M884.3,271.2L906.9,296.4M909.4,299.2L932.4,324.7M1043.1,447.7L1061.6,468.2M852.0,259.7L880.2,291.0M888.1,299.8L903.3,316.7M913.1,327.6L953.0,371.9M959.6,379.3L980.3,402.2M1018.8,445.0L1038.4,466.7M797.8,225.4L808.8,237.6M817.0,246.7L841.8,274.2M851.8,285.4L889.3,327.0M898.9,337.7L920.2,361.3M932.4,374.8L971.3,418.1M975.5,422.8L1013.3,464.7M1019.7,471.8L1054.6,510.6M783.2,238.5L821.7,281.3M828.1,288.4L846.7,309.0M851.5,314.4L891.1,358.3M895.7,363.5L911.8,381.3M961.3,436.4L996.0,474.9M1001.2,480.7L1040.2,524.0M771.0,249.5L789.1,269.6M812.5,295.5L849.8,337.0M863.1,351.7L893.4,385.4M960.1,459.4L981.6,483.4M988.0,490.5L1027.8,534.7M760.6,258.9L774.5,274.3M786.9,288.1L799.3,301.8M885.0,397.1L916.3,431.7M918.5,434.2L938.9,456.9M949.8,469.0L977.0,499.2M985.1,508.2L1008.5,534.2M816.5,342.5L831.6,359.2M854.2,384.4L890.5,424.7M942.2,482.1L972.9,516.1M983.6,528.1L996.4,542.3M1003.5,550.1L1017.9,566.1M737.6,279.6L758.9,303.2M847.1,401.1L886.5,444.9M889.9,448.7L915.0,476.6M920.9,483.2L950.4,515.9M963.4,530.3L987.1,556.6M723.4,292.4L763.2,336.5M770.2,344.3L798.8,376.1M843.9,426.2L879.7,465.9M892.9,480.6L913.9,504.0M922.2,513.1L958.8,553.8M970.7,567.0L1002.2,602.0M711.1,303.5L733.2,327.9M742.6,338.4L779.0,378.8M782.7,382.9L799.3,401.4M808.3,411.4L822.6,427.2M828.2,433.5L846.8,454.1M854.9,463.1L892.7,505.1M950.5,569.3L973.8,595.2M696.9,316.3L718.3,340.1M730.5,353.5L749.1,374.3M760.5,386.9L788.6,418.1M790.9,420.7L811.5,443.6M823.0,456.3L838.6,473.6M845.0,480.7L870.4,509.0M879.6,519.2L909.5,552.4M912.6,555.8L952.1,599.7M720.4,366.5L730.7,377.9M780.3,433.0L802.9,458.1M815.0,471.5L831.1,489.4M834.1,492.8L863.5,525.3M876.1,539.4L901.9,568.1M904.9,571.4L921.9,590.3M933.7,603.3L960.0,632.5M671.8,338.8L697.8,367.7M703.2,373.7L740.3,414.9M748.4,423.8L777.1,455.7M835.7,520.8L851.8,538.7M858.8,546.4L878.2,568.0M661.1,348.5L676.7,365.9M717.5,411.2L729.2,424.3M735.7,431.4L751.1,448.5M756.1,454.0L787.0,488.4M790.3,492.0L807.0,510.6M815.4,519.9L832.8,539.3M837.3,544.2L867.5,577.8M871.5,582.3L904.2,618.5M912.3,627.6L940.3,658.7M692.4,403.4L719.9,433.9M732.1,447.5L762.8,481.5M774.1,494.1L813.8,538.2M827.2,553.0L851.8,580.3M861.9,591.6L882.2,614.1M890.8,623.7L904.1,638.4" fill="none" stroke="#f6e58e" stroke-width="3.2" stroke-linecap="round"/><path d="M652.5,338.9L672.7,323.1M680.0,317.4L713.3,291.4M763.4,252.2L804.9,219.8M815.8,211.3L833.0,197.9M847.0,186.9L877.4,163.2M913.1,135.3L935.6,117.7M949.6,106.8L978.1,84.5M663.5,353.1L708.0,318.4M762.8,275.5L778.1,263.6M783.4,259.5L829.4,223.5M840.2,215.1L862.7,197.5M870.2,191.6L894.5,172.7M904.7,164.7L948.6,130.4M729.1,319.9L761.1,294.9M766.3,290.8L807.6,258.5M866.3,212.7L883.4,199.3M896.1,189.4L938.9,155.9M949.5,147.7L962.9,137.2M684.6,380.0L707.4,362.2M717.8,354.1L730.7,344.0M738.5,337.8L772.0,311.7M774.9,309.4L817.5,276.1M832.7,264.3L876.3,230.2M884.9,223.5L915.1,199.9M925.5,191.8L957.1,167.1M972.1,155.4L1001.9,132.1M725.4,366.7L756.7,342.3M764.6,336.1L797.0,310.8M807.6,302.5L841.9,275.7M852.6,267.3L881.0,245.2M888.1,239.6L924.9,210.8M927.6,208.7L941.6,197.8M956.8,185.9L977.6,169.7M987.9,161.6L1011.0,143.5M703.2,403.8L736.1,378.1M743.5,372.3L782.7,341.7M792.7,333.9L830.6,304.3M836.0,300.1L876.3,268.6M881.2,264.8L908.4,243.5M912.1,240.6L935.4,222.4M980.9,186.9L1004.7,168.3M713.1,416.6L732.9,401.1M774.6,368.6L792.9,354.3M847.6,311.5L864.1,298.6M877.1,288.5L898.5,271.7M906.4,265.5L933.2,244.7M947.8,233.2L965.2,219.6M725.2,432.1L769.9,397.1M782.3,387.5L823.8,355.1M833.1,347.8L855.2,330.5M860.6,326.3L874.8,315.2M881.0,310.3L921.6,278.7M986.8,227.7L1030.5,193.5M736.4,446.4L754.3,432.4M765.6,423.6L796.0,399.9M811.0,388.2L844.5,362.0M850.2,357.5L892.6,324.4M905.5,314.4L929.8,295.4M939.3,287.9L980.1,256.1M781.6,427.7L803.1,410.9M812.5,403.6L839.3,382.6M852.1,372.6L864.0,363.3M868.0,360.2L884.3,347.5M899.7,335.4L941.8,302.5M950.9,295.4L973.9,277.4M981.0,271.9L1015.7,244.8M1022.9,239.1L1041.5,224.6M1045.6,221.5L1077.1,196.8M752.8,467.4L771.0,453.2M781.4,445.0L821.0,414.1M834.1,403.9L868.0,377.4M875.4,371.6L904.8,348.7M912.8,342.4L949.2,313.9M954.9,309.5L985.7,285.5M989.0,282.9L1015.9,261.9M1030.0,250.8L1075.1,215.6M764.2,482.0L785.3,465.5M789.4,462.4L830.0,430.6M844.3,419.5L884.2,388.3M896.4,378.7L928.2,353.9M938.4,345.9L950.4,336.5M963.2,326.6L976.6,316.1M980.3,313.2L1023.3,279.6M1026.0,277.5L1067.6,244.9M826.7,455.6L866.9,424.3M879.5,414.4L909.5,391.0M954.8,355.6L978.1,337.3M991.6,326.8L1012.0,310.9M1059.0,274.2L1083.9,254.7M784.9,508.5L799.7,497.0M815.1,484.9L841.6,464.3M893.8,423.5L924.0,399.9M934.9,391.3L978.6,357.2M1029.9,317.1L1057.4,295.6M1062.3,291.8L1083.6,275.2M794.3,520.5L814.4,504.8M829.5,493.0L851.8,475.6M859.7,469.4L901.8,436.5M907.7,431.9L927.3,416.6M936.1,409.7L961.5,389.9M996.2,362.8L1043.1,326.1M1095.3,285.3L1126.9,260.6M806.0,535.5L832.0,515.1M847.2,503.2L875.6,481.0M881.1,476.7L918.4,447.6M933.6,435.7L975.7,402.9M980.6,399.0L1001.6,382.6M1061.5,335.9L1104.0,302.7M817.1,549.7L832.0,538.1M845.5,527.5L867.7,510.2M877.9,502.3L913.6,474.3M920.5,469.0L947.8,447.7M993.1,412.2L1024.2,387.9M1030.3,383.2L1065.7,355.5M1079.9,344.4L1124.0,310.0M872.3,526.5L908.1,498.5M957.7,459.7L993.4,431.8M997.3,428.8L1026.6,405.9M1038.6,396.5L1074.5,368.5M1079.3,364.7L1114.0,337.6M1118.8,333.9L1162.1,300.0M838.8,577.4L855.6,564.3M867.6,554.9L900.6,529.1M911.7,520.5L939.7,498.5M944.5,494.9L958.7,483.7M971.2,474.0L1002.3,449.7M1009.4,444.1L1030.7,427.5M1044.7,416.5L1058.0,406.1M1063.7,401.7L1102.8,371.1M1109.6,365.8L1135.8,345.4M848.3,589.6L890.2,556.9M896.1,552.2L911.5,540.2M924.3,530.2L961.9,500.8M966.8,497.0L993.4,476.2M1006.7,465.9L1045.1,435.9M1049.4,432.5L1075.3,412.2M1084.8,404.9L1116.7,379.9M1122.5,375.4L1162.0,344.5M860.1,604.8L905.6,569.2M915.4,561.6L947.9,536.2M963.3,524.1L999.5,495.9M1013.4,485.0L1042.4,462.4M1077.6,434.9L1106.9,412.0M1115.4,405.3L1134.1,390.7M1137.0,388.5L1166.5,365.4M920.6,579.1L960.5,547.9M963.6,545.5L988.1,526.3M1029.2,494.2L1071.9,460.9M1076.0,457.6L1118.3,424.6M1133.1,413.1L1170.3,384.0M935.2,591.4L973.8,561.1M977.6,558.2L991.0,547.7M996.0,543.8L1013.5,530.1M1025.3,520.9L1056.1,496.8M1067.2,488.2L1089.8,470.5M1102.3,460.7L1128.4,440.4M1142.8,429.1L1180.1,399.9M935.6,101.4L963.6,132.5M985.6,156.9L1009.5,183.4M1013.9,188.3L1029.0,205.2M1033.0,209.5L1043.8,221.6M1047.7,225.9L1072.5,253.5M1074.8,256.0L1098.3,282.1M1108.3,293.2L1119.9,306.1M1141.8,330.4L1154.7,344.7M1158.5,349.0L1187.3,380.9M1190.7,384.7L1202.3,397.6M951.3,146.5L968.9,166.0M980.1,178.5L1009.1,210.7M1051.5,257.8L1061.7,269.1M1064.7,272.4L1079.9,289.3M1116.5,330.0L1155.9,373.7M964.1,183.3L985.9,207.5M995.6,218.3L1033.6,260.5M1084.5,317.0L1122.3,359.0M1153.4,393.6L1171.6,413.8M897.8,135.4L929.2,170.3M936.7,178.7L951.4,195.0M987.5,235.1L1000.5,249.5M1087.3,345.9L1107.4,368.2M1135.5,399.4L1162.6,429.6M884.7,147.1L902.0,166.3M905.8,170.5L935.2,203.2M958.8,229.4L985.8,259.4M1033.0,311.8L1048.7,329.3M1051.6,332.5L1086.5,371.3M1088.8,373.8L1127.9,417.3M1140.1,430.8L1152.7,444.8M870.8,159.7L899.3,191.5M910.0,203.3L946.3,243.6M955.1,253.5L978.6,279.5M1022.4,328.1L1048.7,357.3M1058.9,368.7L1071.3,382.5M1078.8,390.8L1091.0,404.4M1101.4,415.9L1124.2,441.2M886.4,198.8L909.4,224.3M984.5,307.7L1022.6,350.0M845.5,182.5L861.0,199.8M871.3,211.2L890.2,232.2M899.5,242.5L910.7,255.0M915.9,260.7L938.9,286.3M949.4,297.9L981.9,334.0M985.1,337.6L1004.1,358.7M1083.0,446.4L1104.3,470.0M833.4,193.4L859.3,222.1M865.4,228.9L901.1,268.5M969.9,345.0L983.9,360.6M992.0,369.6L1007.1,386.3M1011.4,391.1L1044.6,428.0M822.8,202.9L833.2,214.5M839.1,221.0L850.6,233.9M853.7,237.3L873.1,258.9M884.3,271.2L906.9,296.4M909.4,299.2L932.4,324.7M1043.1,447.7L1061.6,468.2M852.0,259.7L880.2,291.0M888.1,299.8L903.3,316.7M913.1,327.6L953.0,371.9M959.6,379.3L980.3,402.2M1018.8,445.0L1038.4,466.7M797.8,225.4L808.8,237.6M817.0,246.7L841.8,274.2M851.8,285.4L889.3,327.0M898.9,337.7L920.2,361.3M932.4,374.8L971.3,418.1M975.5,422.8L1013.3,464.7M1019.7,471.8L1054.6,510.6M783.2,238.5L821.7,281.3M828.1,288.4L846.7,309.0M851.5,314.4L891.1,358.3M895.7,363.5L911.8,381.3M961.3,436.4L996.0,474.9M1001.2,480.7L1040.2,524.0M771.0,249.5L789.1,269.6M812.5,295.5L849.8,337.0M863.1,351.7L893.4,385.4M960.1,459.4L981.6,483.4M988.0,490.5L1027.8,534.7M760.6,258.9L774.5,274.3M786.9,288.1L799.3,301.8M885.0,397.1L916.3,431.7M918.5,434.2L938.9,456.9M949.8,469.0L977.0,499.2M985.1,508.2L1008.5,534.2M816.5,342.5L831.6,359.2M854.2,384.4L890.5,424.7M942.2,482.1L972.9,516.1M983.6,528.1L996.4,542.3M1003.5,550.1L1017.9,566.1M737.6,279.6L758.9,303.2M847.1,401.1L886.5,444.9M889.9,448.7L915.0,476.6M920.9,483.2L950.4,515.9M963.4,530.3L987.1,556.6M723.4,292.4L763.2,336.5M770.2,344.3L798.8,376.1M843.9,426.2L879.7,465.9M892.9,480.6L913.9,504.0M922.2,513.1L958.8,553.8M970.7,567.0L1002.2,602.0M711.1,303.5L733.2,327.9M742.6,338.4L779.0,378.8M782.7,382.9L799.3,401.4M808.3,411.4L822.6,427.2M828.2,433.5L846.8,454.1M854.9,463.1L892.7,505.1M950.5,569.3L973.8,595.2M696.9,316.3L718.3,340.1M730.5,353.5L749.1,374.3M760.5,386.9L788.6,418.1M790.9,420.7L811.5,443.6M823.0,456.3L838.6,473.6M845.0,480.7L870.4,509.0M879.6,519.2L909.5,552.4M912.6,555.8L952.1,599.7M720.4,366.5L730.7,377.9M780.3,433.0L802.9,458.1M815.0,471.5L831.1,489.4M834.1,492.8L863.5,525.3M876.1,539.4L901.9,568.1M904.9,571.4L921.9,590.3M933.7,603.3L960.0,632.5M671.8,338.8L697.8,367.7M703.2,373.7L740.3,414.9M748.4,423.8L777.1,455.7M835.7,520.8L851.8,538.7M858.8,546.4L878.2,568.0M661.1,348.5L676.7,365.9M717.5,411.2L729.2,424.3M735.7,431.4L751.1,448.5M756.1,454.0L787.0,488.4M790.3,492.0L807.0,510.6M815.4,519.9L832.8,539.3M837.3,544.2L867.5,577.8M871.5,582.3L904.2,618.5M912.3,627.6L940.3,658.7M692.4,403.4L719.9,433.9M732.1,447.5L762.8,481.5M774.1,494.1L813.8,538.2M827.2,553.0L851.8,580.3M861.9,591.6L882.2,614.1M890.8,623.7L904.1,638.4" fill="none" stroke="#b8b8c0" stroke-width="1.5" stroke-dasharray="1.5,1.5"/></g><g clip-path="url(#rc)"><path d="M825.7,460.7L858.9,448.6M876.5,442.2L910.3,429.9M922.5,425.4L944.4,417.5M957.3,412.8L1004.9,395.4M828.6,468.8L877.0,451.2M949.3,424.8L989.5,410.2M992.5,409.1L1029.0,395.9M831.9,477.9L847.3,472.3M857.2,468.7L906.9,450.6M919.9,445.9L955.2,433.0M836.7,490.9L880.7,474.9M887.2,472.5L913.5,463.0M839.9,499.8L892.5,480.7M911.0,474.0L941.9,462.7M954.8,458.0L1001.8,440.9M842.9,508.1L867.5,499.2M871.2,497.8L919.0,480.4M930.8,476.2L963.8,464.1M978.3,458.9L998.0,451.7M1002.6,450.0L1034.5,438.4M848.0,522.0L896.1,504.5M913.0,498.4L936.0,490.0M952.5,484.0L993.7,469.0M1012.4,462.2L1035.5,453.8M851.5,531.7L878.2,522.0M882.4,520.5L921.2,506.4M933.6,501.8L963.4,491.0M981.5,484.4L1016.1,471.8M891.2,527.1L915.8,518.2M930.5,512.9L984.3,493.2M1002.3,486.7L1053.7,468.0M880.1,540.5L923.9,524.5M939.9,518.7L979.2,504.4M984.9,502.3L1029.4,486.1M861.8,559.8L911.9,541.6M919.2,538.9L972.1,519.7M975.2,518.6L1000.7,509.3M1004.4,507.9L1026.0,500.1M912.7,550.8L954.6,535.5M966.7,531.1L986.8,523.8M989.9,522.7L1042.5,503.6M867.6,575.9L908.6,560.9M954.7,544.2L991.9,530.6M1009.1,524.4L1054.3,507.9M872.5,589.4L901.5,578.9M918.7,572.6L969.6,554.1M985.1,548.4L1035.7,530.0M876.2,599.4L914.9,585.3M977.0,562.7L1021.9,546.4M1036.5,541.1L1075.1,527.0M879.1,607.5L924.9,590.8M937.4,586.3L971.8,573.8M985.8,568.7L1020.9,555.9M1038.4,549.5L1063.3,540.5M883.5,619.5L906.1,611.2M923.4,604.9L965.4,589.7M982.5,583.4L1010.4,573.3M971.7,392.6L987.9,420.5M992.1,427.8L1002.7,446.1M1011.3,461.0L1037.9,507.1M1047.4,523.7L1061.2,547.4M963.2,397.5L975.5,418.8M982.3,430.7L1000.9,462.9M1009.5,477.8L1039.1,529.1M1051.3,550.2L1074.8,590.8M951.4,404.3L959.4,418.0M976.3,447.4L987.0,465.8M993.8,477.7L1011.4,508.1M943.3,409.0L961.5,440.5M963.1,443.2L981.2,474.6M984.2,479.9L997.8,503.5M1005.3,516.3L1024.5,549.6M961.5,462.1L990.0,511.4M992.6,515.9L1010.3,546.6M1019.6,562.6L1035.5,590.3M922.2,421.1L951.0,470.9M958.0,483.1L970.1,504.1M978.6,518.7L1000.5,556.7M912.0,427.0L937.3,470.8M946.6,486.8L973.3,533.2M975.5,537.0L992.9,567.2M912.3,450.4L937.8,494.5M942.2,502.1L967.4,545.8M970.2,550.5L989.3,583.7M891.0,439.1L919.8,489.0M929.4,505.6L938.8,521.9M944.8,532.3L958.8,556.6M929.4,525.9L948.7,559.3M951.9,564.9L971.4,598.8M875.1,448.3L904.4,499.1M909.3,507.6L934.9,551.8M940.5,561.6L963.6,601.6M898.5,510.6L916.7,542.1M953.2,605.4L967.9,630.8M865.3,482.0L877.1,502.5M884.5,515.3L899.2,540.8M906.0,552.5L915.8,569.6M918.4,574.0L937.4,606.9M940.6,612.4L960.0,646.1M843.7,466.5L863.1,500.1M866.4,505.7L888.1,543.3M894.1,553.7L920.7,599.8M929.5,615.1L942.2,637.1M831.3,473.6L845.9,498.9M876.7,552.3L887.2,570.5M894.9,583.8L908.3,606.9M821.9,479.0L844.9,518.7M880.7,580.7L890.8,598.2M898.7,612.0L917.5,644.6" fill="none" stroke="#f6e58e" stroke-width="3" stroke-linecap="round"/><path d="M825.7,460.7L858.9,448.6M876.5,442.2L910.3,429.9M922.5,425.4L944.4,417.5M957.3,412.8L1004.9,395.4M828.6,468.8L877.0,451.2M949.3,424.8L989.5,410.2M992.5,409.1L1029.0,395.9M831.9,477.9L847.3,472.3M857.2,468.7L906.9,450.6M919.9,445.9L955.2,433.0M836.7,490.9L880.7,474.9M887.2,472.5L913.5,463.0M839.9,499.8L892.5,480.7M911.0,474.0L941.9,462.7M954.8,458.0L1001.8,440.9M842.9,508.1L867.5,499.2M871.2,497.8L919.0,480.4M930.8,476.2L963.8,464.1M978.3,458.9L998.0,451.7M1002.6,450.0L1034.5,438.4M848.0,522.0L896.1,504.5M913.0,498.4L936.0,490.0M952.5,484.0L993.7,469.0M1012.4,462.2L1035.5,453.8M851.5,531.7L878.2,522.0M882.4,520.5L921.2,506.4M933.6,501.8L963.4,491.0M981.5,484.4L1016.1,471.8M891.2,527.1L915.8,518.2M930.5,512.9L984.3,493.2M1002.3,486.7L1053.7,468.0M880.1,540.5L923.9,524.5M939.9,518.7L979.2,504.4M984.9,502.3L1029.4,486.1M861.8,559.8L911.9,541.6M919.2,538.9L972.1,519.7M975.2,518.6L1000.7,509.3M1004.4,507.9L1026.0,500.1M912.7,550.8L954.6,535.5M966.7,531.1L986.8,523.8M989.9,522.7L1042.5,503.6M867.6,575.9L908.6,560.9M954.7,544.2L991.9,530.6M1009.1,524.4L1054.3,507.9M872.5,589.4L901.5,578.9M918.7,572.6L969.6,554.1M985.1,548.4L1035.7,530.0M876.2,599.4L914.9,585.3M977.0,562.7L1021.9,546.4M1036.5,541.1L1075.1,527.0M879.1,607.5L924.9,590.8M937.4,586.3L971.8,573.8M985.8,568.7L1020.9,555.9M1038.4,549.5L1063.3,540.5M883.5,619.5L906.1,611.2M923.4,604.9L965.4,589.7M982.5,583.4L1010.4,573.3M971.7,392.6L987.9,420.5M992.1,427.8L1002.7,446.1M1011.3,461.0L1037.9,507.1M1047.4,523.7L1061.2,547.4M963.2,397.5L975.5,418.8M982.3,430.7L1000.9,462.9M1009.5,477.8L1039.1,529.1M1051.3,550.2L1074.8,590.8M951.4,404.3L959.4,418.0M976.3,447.4L987.0,465.8M993.8,477.7L1011.4,508.1M943.3,409.0L961.5,440.5M963.1,443.2L981.2,474.6M984.2,479.9L997.8,503.5M1005.3,516.3L1024.5,549.6M961.5,462.1L990.0,511.4M992.6,515.9L1010.3,546.6M1019.6,562.6L1035.5,590.3M922.2,421.1L951.0,470.9M958.0,483.1L970.1,504.1M978.6,518.7L1000.5,556.7M912.0,427.0L937.3,470.8M946.6,486.8L973.3,533.2M975.5,537.0L992.9,567.2M912.3,450.4L937.8,494.5M942.2,502.1L967.4,545.8M970.2,550.5L989.3,583.7M891.0,439.1L919.8,489.0M929.4,505.6L938.8,521.9M944.8,532.3L958.8,556.6M929.4,525.9L948.7,559.3M951.9,564.9L971.4,598.8M875.1,448.3L904.4,499.1M909.3,507.6L934.9,551.8M940.5,561.6L963.6,601.6M898.5,510.6L916.7,542.1M953.2,605.4L967.9,630.8M865.3,482.0L877.1,502.5M884.5,515.3L899.2,540.8M906.0,552.5L915.8,569.6M918.4,574.0L937.4,606.9M940.6,612.4L960.0,646.1M843.7,466.5L863.1,500.1M866.4,505.7L888.1,543.3M894.1,553.7L920.7,599.8M929.5,615.1L942.2,637.1M831.3,473.6L845.9,498.9M876.7,552.3L887.2,570.5M894.9,583.8L908.3,606.9M821.9,479.0L844.9,518.7M880.7,580.7L890.8,598.2M898.7,612.0L917.5,644.6" fill="none" stroke="#b8b8c0" stroke-width="1.2" stroke-dasharray="1.4,1.4"/></g><g fill="none" stroke="#f6e58e" stroke-width="3.2" stroke-linecap="round"><path d="M730.0,508.0 C741.7,496.7 771.7,464.7 800.0,440.0 C828.3,415.3 866.7,385.0 900.0,360.0 C933.3,335.0 974.2,307.5 1000.0,290.0 C1025.8,272.5 1045.8,260.8 1055.0,255.0"/><path d="M760.0,510.0 C776.7,495.0 826.7,448.3 860.0,420.0 C893.3,391.7 928.3,363.3 960.0,340.0 C991.7,316.7 1024.7,293.0 1050.0,280.0 C1075.3,267.0 1101.7,265.0 1112.0,262.0"/><path d="M800.0,400.0 C810.0,396.7 840.0,380.0 860.0,380.0 C880.0,380.0 903.3,391.7 920.0,400.0 C936.7,408.3 953.3,425.0 960.0,430.0"/><path d="M850.0,300.0 C858.3,306.7 881.7,326.7 900.0,340.0 C918.3,353.3 941.7,366.7 960.0,380.0 C978.3,393.3 1001.7,413.3 1010.0,420.0"/><path d="M910.0,270.0 C918.3,278.3 938.3,305.0 960.0,320.0 C981.7,335.0 1026.7,353.3 1040.0,360.0"/></g><g fill="none" stroke="#b8b8c0" stroke-width="1.5" stroke-dasharray="1.5,1.5"><path d="M730.0,508.0 C741.7,496.7 771.7,464.7 800.0,440.0 C828.3,415.3 866.7,385.0 900.0,360.0 C933.3,335.0 974.2,307.5 1000.0,290.0 C1025.8,272.5 1045.8,260.8 1055.0,255.0"/><path d="M760.0,510.0 C776.7,495.0 826.7,448.3 860.0,420.0 C893.3,391.7 928.3,363.3 960.0,340.0 C991.7,316.7 1024.7,293.0 1050.0,280.0 C1075.3,267.0 1101.7,265.0 1112.0,262.0"/><path d="M800.0,400.0 C810.0,396.7 840.0,380.0 860.0,380.0 C880.0,380.0 903.3,391.7 920.0,400.0 C936.7,408.3 953.3,425.0 960.0,430.0"/><path d="M850.0,300.0 C858.3,306.7 881.7,326.7 900.0,340.0 C918.3,353.3 941.7,366.7 960.0,380.0 C978.3,393.3 1001.7,413.3 1010.0,420.0"/><path d="M910.0,270.0 C918.3,278.3 938.3,305.0 960.0,320.0 C981.7,335.0 1026.7,353.3 1040.0,360.0"/></g><g fill="none" stroke="#f7f1c0" stroke-width="2.8" stroke-linecap="round"><path d="M797.2,706.2 C800.5,706.5 812.3,703.6 816.9,708.2 C821.5,712.8 816.9,728.1 824.8,733.7 C832.6,739.3 855.5,737.7 864.0,741.6 C872.5,745.5 878.0,750.1 876.0,757.3 C874.0,764.5 853.6,777.0 852.3,784.9 C851.0,792.8 864.7,796.6 868.0,804.5 C871.3,812.4 852.3,826.1 872.0,832.0 C891.7,837.9 962.4,841.3 986.0,840.0 C1009.6,838.7 1005.8,824.9 1013.6,824.2 C1021.4,823.5 1027.8,827.5 1033.0,836.0 C1038.2,844.5 1044.3,862.2 1045.0,875.3 C1045.7,888.4 1037.0,905.4 1037.0,914.6 C1037.0,923.8 1043.7,927.8 1045.0,930.4"/><path d="M813.0,804.5 C820.2,804.5 846.4,799.9 856.2,804.5 C866.0,809.1 869.4,827.4 872.0,832.0"/><path d="M1033.0,836.0 C1047.5,820.3 1103.4,765.2 1119.8,741.6 C1136.2,718.0 1123.1,706.2 1131.6,694.4 C1140.1,682.6 1159.6,676.7 1171.0,670.8 C1182.4,664.9 1193.3,662.0 1200.0,659.0 C1206.7,656.0 1209.2,653.8 1211.0,652.8"/><path d="M1100.0,698.3 L1131.6,692.4"/><path d="M1005.7,922.5 C1012.2,923.8 1020.1,934.3 1045.0,930.4 C1069.9,926.5 1129.2,900.3 1155.0,899.0 C1180.8,897.7 1187.3,911.8 1200.0,922.5 C1212.7,933.2 1218.5,959.7 1231.2,963.5 C1243.9,967.3 1266.1,950.6 1275.9,945.2 C1285.7,939.8 1289.3,940.5 1290.0,931.0 C1290.7,921.5 1276.9,902.8 1280.0,888.3 C1283.1,873.8 1303.0,858.6 1308.4,843.7 C1313.8,828.8 1317.1,812.5 1312.4,799.0 C1307.7,785.5 1286.8,770.5 1280.0,762.4 C1273.2,754.3 1278.6,757.1 1271.8,750.3 C1265.0,743.5 1245.4,730.6 1239.3,721.8 C1233.2,713.0 1231.9,704.3 1235.3,697.5 C1238.7,690.7 1254.2,688.0 1259.6,681.2 C1265.0,674.4 1275.9,661.6 1267.8,656.9 C1259.7,652.2 1220.8,648.8 1211.0,652.8 C1201.2,656.8 1212.4,679.2 1209.0,681.2 C1205.6,683.2 1200.4,664.3 1190.6,665.0 C1180.8,665.7 1161.8,680.3 1150.0,685.3 C1138.2,690.3 1125.0,693.4 1120.0,695.0"/><path d="M1190.6,665.0 C1202.2,659.2 1239.0,639.5 1260.0,630.0 C1281.0,620.5 1307.1,611.7 1316.5,608.0"/><path d="M1414.0,979.7 C1420.1,977.0 1441.7,965.2 1450.5,963.5 C1459.3,961.8 1461.4,969.5 1466.8,969.5 C1472.2,969.5 1476.9,963.5 1483.0,963.5 C1489.1,963.5 1496.5,969.5 1503.3,969.5 C1510.1,969.5 1517.5,967.6 1523.6,963.5 C1529.7,959.4 1537.3,948.1 1540.0,945.0"/><path d="M1010.0,880.0 C1011.7,876.7 1015.8,865.0 1020.0,860.0 C1024.2,855.0 1030.0,846.7 1035.0,850.0 C1040.0,853.3 1049.2,871.7 1050.0,880.0 C1050.8,888.3 1045.0,895.8 1040.0,900.0 C1035.0,904.2 1023.3,904.2 1020.0,905.0"/><path d="M990.0,860.0 C991.7,858.3 995.8,850.8 1000.0,850.0 C1004.2,849.2 1012.5,854.2 1015.0,855.0"/><path d="M770.0,843.0 C772.3,838.9 781.1,824.9 784.0,818.4 C786.9,811.9 785.2,813.9 787.6,804.2 C790.0,794.5 796.6,776.3 798.2,760.0 C799.8,743.7 797.4,715.2 797.2,706.2"/><path d="M770.0,843.0 C770.3,846.9 769.1,860.0 771.7,866.2 C774.3,872.4 781.7,880.4 785.8,880.4 C789.9,880.4 794.1,872.1 796.5,866.2 C798.9,860.3 797.4,855.0 800.0,845.0 C802.6,835.0 807.4,814.3 812.4,806.0 C817.4,797.7 823.2,796.0 830.0,795.4 C836.8,794.8 848.9,800.1 853.0,802.5 C857.1,804.9 852.8,806.1 854.9,809.6 C857.0,813.1 862.0,819.9 865.5,823.7 C869.0,827.5 860.2,830.8 876.0,832.6 C891.8,834.4 939.3,833.1 960.0,834.3 C980.7,835.5 993.3,839.0 1000.0,840.0"/></g><g fill="none" stroke="#c3c3cc" stroke-width="1.2" stroke-dasharray="1.4,1.4"><path d="M797.2,706.2 C800.5,706.5 812.3,703.6 816.9,708.2 C821.5,712.8 816.9,728.1 824.8,733.7 C832.6,739.3 855.5,737.7 864.0,741.6 C872.5,745.5 878.0,750.1 876.0,757.3 C874.0,764.5 853.6,777.0 852.3,784.9 C851.0,792.8 864.7,796.6 868.0,804.5 C871.3,812.4 852.3,826.1 872.0,832.0 C891.7,837.9 962.4,841.3 986.0,840.0 C1009.6,838.7 1005.8,824.9 1013.6,824.2 C1021.4,823.5 1027.8,827.5 1033.0,836.0 C1038.2,844.5 1044.3,862.2 1045.0,875.3 C1045.7,888.4 1037.0,905.4 1037.0,914.6 C1037.0,923.8 1043.7,927.8 1045.0,930.4"/><path d="M813.0,804.5 C820.2,804.5 846.4,799.9 856.2,804.5 C866.0,809.1 869.4,827.4 872.0,832.0"/><path d="M1033.0,836.0 C1047.5,820.3 1103.4,765.2 1119.8,741.6 C1136.2,718.0 1123.1,706.2 1131.6,694.4 C1140.1,682.6 1159.6,676.7 1171.0,670.8 C1182.4,664.9 1193.3,662.0 1200.0,659.0 C1206.7,656.0 1209.2,653.8 1211.0,652.8"/><path d="M1100.0,698.3 L1131.6,692.4"/><path d="M1005.7,922.5 C1012.2,923.8 1020.1,934.3 1045.0,930.4 C1069.9,926.5 1129.2,900.3 1155.0,899.0 C1180.8,897.7 1187.3,911.8 1200.0,922.5 C1212.7,933.2 1218.5,959.7 1231.2,963.5 C1243.9,967.3 1266.1,950.6 1275.9,945.2 C1285.7,939.8 1289.3,940.5 1290.0,931.0 C1290.7,921.5 1276.9,902.8 1280.0,888.3 C1283.1,873.8 1303.0,858.6 1308.4,843.7 C1313.8,828.8 1317.1,812.5 1312.4,799.0 C1307.7,785.5 1286.8,770.5 1280.0,762.4 C1273.2,754.3 1278.6,757.1 1271.8,750.3 C1265.0,743.5 1245.4,730.6 1239.3,721.8 C1233.2,713.0 1231.9,704.3 1235.3,697.5 C1238.7,690.7 1254.2,688.0 1259.6,681.2 C1265.0,674.4 1275.9,661.6 1267.8,656.9 C1259.7,652.2 1220.8,648.8 1211.0,652.8 C1201.2,656.8 1212.4,679.2 1209.0,681.2 C1205.6,683.2 1200.4,664.3 1190.6,665.0 C1180.8,665.7 1161.8,680.3 1150.0,685.3 C1138.2,690.3 1125.0,693.4 1120.0,695.0"/><path d="M1190.6,665.0 C1202.2,659.2 1239.0,639.5 1260.0,630.0 C1281.0,620.5 1307.1,611.7 1316.5,608.0"/><path d="M1414.0,979.7 C1420.1,977.0 1441.7,965.2 1450.5,963.5 C1459.3,961.8 1461.4,969.5 1466.8,969.5 C1472.2,969.5 1476.9,963.5 1483.0,963.5 C1489.1,963.5 1496.5,969.5 1503.3,969.5 C1510.1,969.5 1517.5,967.6 1523.6,963.5 C1529.7,959.4 1537.3,948.1 1540.0,945.0"/><path d="M1010.0,880.0 C1011.7,876.7 1015.8,865.0 1020.0,860.0 C1024.2,855.0 1030.0,846.7 1035.0,850.0 C1040.0,853.3 1049.2,871.7 1050.0,880.0 C1050.8,888.3 1045.0,895.8 1040.0,900.0 C1035.0,904.2 1023.3,904.2 1020.0,905.0"/><path d="M990.0,860.0 C991.7,858.3 995.8,850.8 1000.0,850.0 C1004.2,849.2 1012.5,854.2 1015.0,855.0"/><path d="M770.0,843.0 C772.3,838.9 781.1,824.9 784.0,818.4 C786.9,811.9 785.2,813.9 787.6,804.2 C790.0,794.5 796.6,776.3 798.2,760.0 C799.8,743.7 797.4,715.2 797.2,706.2"/><path d="M770.0,843.0 C770.3,846.9 769.1,860.0 771.7,866.2 C774.3,872.4 781.7,880.4 785.8,880.4 C789.9,880.4 794.1,872.1 796.5,866.2 C798.9,860.3 797.4,855.0 800.0,845.0 C802.6,835.0 807.4,814.3 812.4,806.0 C817.4,797.7 823.2,796.0 830.0,795.4 C836.8,794.8 848.9,800.1 853.0,802.5 C857.1,804.9 852.8,806.1 854.9,809.6 C857.0,813.1 862.0,819.9 865.5,823.7 C869.0,827.5 860.2,830.8 876.0,832.6 C891.8,834.4 939.3,833.1 960.0,834.3 C980.7,835.5 993.3,839.0 1000.0,840.0"/></g><g fill="none" stroke="#dccb95" stroke-width="3" stroke-dasharray="6,3" stroke-linecap="round"><path d="M801.0,674.7 C810.2,675.4 842.5,681.2 856.0,678.7 C869.5,676.2 871.4,669.6 882.0,660.0 C892.6,650.4 913.3,627.5 919.6,621.0"/><path d="M852.3,784.9 C860.2,774.1 883.7,737.5 900.0,720.0 C916.3,702.5 935.7,690.2 950.0,680.0 C964.3,669.8 966.2,656.6 986.0,659.0 C1005.8,661.4 1047.6,681.6 1068.6,694.4 C1089.6,707.2 1104.8,728.8 1112.0,735.7"/><path d="M918.7,623.0 C932.2,611.4 983.5,568.0 1000.0,553.5 C1016.5,539.0 1008.5,539.0 1018.0,536.0 C1027.5,533.0 1050.5,535.4 1057.0,535.3"/></g><defs><pattern id="hatch" width="3" height="3" patternUnits="userSpaceOnUse"><rect width="3" height="3" fill="#6f9ef0"/><path d="M0,1.5h3M1.5,0v3" stroke="#cfe0ff" stroke-width=".6"/></pattern></defs><path d="M1346.0,167.0 L1352.0,172.0 L1355.0,185.0 L1352.0,189.0 L1347.0,185.0 L1345.0,175.0Z" fill="url(#hatch)" stroke="#1a2f6a" stroke-width=".8"/><path d="M1182.0,193.0 L1186.0,196.0 L1184.0,200.0 L1181.0,197.0Z" fill="url(#hatch)" stroke="#1a2f6a" stroke-width=".8"/><path d="M1185.0,213.0 L1194.0,210.0 L1196.0,218.0 L1187.0,216.0Z" fill="url(#hatch)" stroke="#1a2f6a" stroke-width=".8"/><path d="M1203.0,329.0 L1207.0,335.0 L1211.0,350.0 L1204.0,348.0 L1199.0,345.0Z" fill="url(#hatch)" stroke="#1a2f6a" stroke-width=".8"/><path d="M1383.0,362.0 L1400.0,352.0 L1410.0,350.0 L1414.0,362.0 L1395.0,368.0Z" fill="url(#hatch)" stroke="#1a2f6a" stroke-width=".8"/><path d="M1627.0,451.0 L1640.0,455.0 L1655.0,458.0 L1652.0,462.0 L1637.0,461.0Z" fill="url(#hatch)" stroke="#1a2f6a" stroke-width=".8"/><path d="M1699.0,471.0 L1706.0,474.0 L1718.0,472.0 L1720.0,478.0 L1705.0,480.0Z" fill="url(#hatch)" stroke="#1a2f6a" stroke-width=".8"/><path d="M1576.0,186.0 L1590.0,187.0 L1592.0,196.0 L1580.0,197.0Z" fill="url(#hatch)" stroke="#1a2f6a" stroke-width=".8"/><path d="M1613.0,245.0 L1622.0,242.0 L1645.0,250.0 L1652.0,255.0 L1640.0,270.0 L1625.0,268.0 L1622.0,255.0Z" fill="url(#hatch)" stroke="#1a2f6a" stroke-width=".8"/><path d="M1710.0,237.0 L1716.0,233.0 L1720.0,238.0 L1715.0,241.0Z" fill="url(#hatch)" stroke="#1a2f6a" stroke-width=".8"/><path d="M1531.0,316.0 L1540.0,315.0 L1540.0,323.0 L1530.0,322.0Z" fill="url(#hatch)" stroke="#1a2f6a" stroke-width=".8"/><path d="M1537.0,340.0 L1549.0,348.0 L1540.0,352.0Z" fill="url(#hatch)" stroke="#1a2f6a" stroke-width=".8"/><path d="M1545.0,380.0 L1553.0,393.0 L1555.0,406.0 L1545.0,405.0 L1537.0,396.0Z" fill="url(#hatch)" stroke="#1a2f6a" stroke-width=".8"/><path d="M1660.0,511.0 L1664.0,516.0 L1661.0,517.0Z" fill="url(#hatch)" stroke="#1a2f6a" stroke-width=".8"/><path d="M1696.0,521.0 L1699.0,527.0 L1695.0,525.0Z" fill="url(#hatch)" stroke="#1a2f6a" stroke-width=".8"/><path d="M1729.0,535.0 L1733.0,540.0 L1728.0,541.0Z" fill="url(#hatch)" stroke="#1a2f6a" stroke-width=".8"/><path d="M1648.0,549.0 L1655.0,551.0 L1654.0,556.0 L1649.0,555.0Z" fill="url(#hatch)" stroke="#1a2f6a" stroke-width=".8"/><path d="M1079.0,237.0 L1085.0,236.0 L1085.0,242.0 L1079.0,243.0Z" fill="url(#hatch)" stroke="#1a2f6a" stroke-width=".8"/><path d="M912,226 l5,-6 l4,3 l4,-4 l2,6 l-3,2z M1056,226 l6,-10 l3,9 l5,4 l-8,3z" fill="#e81010"/><path d="M910.9,218.4L918.4,225.9M918.4,218.4L910.9,225.9M913.7,215.2L921.9,223.4M921.9,215.2L913.7,223.4M917.6,217.6L924.6,224.6M924.6,217.6L917.6,224.6M912.1,214.8L918.6,221.3M918.6,214.8L912.1,221.3M914.8,214.3L922.9,222.5M922.9,214.3L914.8,222.5M912.7,216.8L917.9,222.0M917.9,216.8L912.7,222.0M918.7,218.2L927.2,226.7M927.2,218.2L918.7,226.7M916.0,215.0L922.3,221.4M922.3,215.0L916.0,221.4M913.6,214.3L922.4,223.1M922.4,214.3L913.6,223.1M912.5,214.8L920.8,223.1M920.8,214.8L912.5,223.1M910.8,220.2L917.7,227.0M917.7,220.2L910.8,227.0M915.1,216.6L922.0,223.5M922.0,216.6L915.1,223.5M910.6,214.0L919.1,222.5M919.1,214.0L910.6,222.5M912.4,219.8L918.3,225.6M918.3,219.8L912.4,225.6M1062.7,219.4L1070.7,227.4M1070.7,219.4L1062.7,227.4M1060.7,217.5L1068.6,225.4M1068.6,217.5L1060.7,225.4M1054.1,216.7L1062.4,225.0M1062.4,216.7L1054.1,225.0M1054.7,219.3L1063.3,227.8M1063.3,219.3L1054.7,227.8M1057.7,216.8L1064.5,223.6M1064.5,216.8L1057.7,223.6M1057.6,220.7L1064.1,227.2M1064.1,220.7L1057.6,227.2M1053.3,214.6L1061.2,222.5M1061.2,214.6L1053.3,222.5M1063.4,217.5L1070.4,224.5M1070.4,217.5L1063.4,224.5M1059.6,219.5L1065.4,225.4M1065.4,219.5L1059.6,225.4M1059.3,217.6L1066.8,225.1M1066.8,217.6L1059.3,225.1M1055.6,215.8L1062.0,222.2M1062.0,215.8L1055.6,222.2M1062.6,216.4L1070.0,223.8M1070.0,216.4L1062.6,223.8M1057.4,216.0L1062.7,221.3M1062.7,216.0L1057.4,221.3M1061.9,219.4L1068.4,225.9M1068.4,219.4L1061.9,225.9M1059.5,217.8L1068.1,226.4M1068.1,217.8L1059.5,226.4M1062.1,216.0L1071.1,224.9M1071.1,216.0L1062.1,224.9M868.3,359.3L876.9,367.8M876.9,359.3L868.3,367.8M864.9,359.3L870.9,365.2M870.9,359.3L864.9,365.2M869.1,358.3L874.4,363.6M874.4,358.3L869.1,363.6M867.6,361.2L874.5,368.1M874.5,361.2L867.6,368.1M868.4,357.3L874.4,363.3M874.4,357.3L868.4,363.3M863.1,359.7L868.7,365.4M868.7,359.7L863.1,365.4M994.3,314.9L1002.9,323.5M1002.9,314.9L994.3,323.5M1002.4,317.7L1009.3,324.6M1009.3,317.7L1002.4,324.6M996.5,318.7L1003.6,325.8M1003.6,318.7L996.5,325.8M1000.9,314.8L1006.8,320.7M1006.8,314.8L1000.9,320.7M1027.8,246.8L1036.3,255.3M1036.3,246.8L1027.8,255.3M1026.9,246.1L1034.3,253.4M1034.3,246.1L1026.9,253.4M1028.5,245.7L1035.7,252.9M1035.7,245.7L1028.5,252.9M809.1,423.4L814.2,428.5M814.2,423.4L809.1,428.5M811.6,424.1L816.7,429.2M816.7,424.1L811.6,429.2M809.4,421.3L817.8,429.7M817.8,421.3L809.4,429.7M875.2,457.8L881.8,464.4M881.8,457.8L875.2,464.4M878.0,460.7L883.5,466.2M883.5,460.7L878.0,466.2M873.0,458.0L878.1,463.1M878.1,458.0L873.0,463.1M873.4,456.5L881.9,464.9M881.9,456.5L873.4,464.9M891.3,473.7L898.4,480.9M898.4,473.7L891.3,480.9M888.0,477.0L893.8,482.9M893.8,477.0L888.0,482.9M885.7,474.5L892.2,481.0M892.2,474.5L885.7,481.0M892.9,477.8L898.1,483.0M898.1,477.8L892.9,483.0M891.5,478.6L899.6,486.7M899.6,478.6L891.5,486.7M893.1,473.0L899.9,479.9M899.9,473.0L893.1,479.9M884.9,479.0L890.6,484.8M890.6,479.0L884.9,484.8M891.6,474.3L899.4,482.1M899.4,474.3L891.6,482.1M982.2,349.5L988.8,356.1M988.8,349.5L982.2,356.1M982.4,353.8L988.6,360.0M988.6,353.8L982.4,360.0M982.6,350.8L991.4,359.6M991.4,350.8L982.6,359.6M980.3,352.0L987.3,359.0M987.3,352.0L980.3,359.0M985.8,354.1L992.0,360.4M992.0,354.1L985.8,360.4M1028.0,336.5L1035.2,343.7M1035.2,336.5L1028.0,343.7M1022.1,337.1L1031.0,346.0M1031.0,337.1L1022.1,346.0M1024.4,334.6L1033.3,343.6M1033.3,334.6L1024.4,343.6M1024.2,335.3L1029.5,340.6M1029.5,335.3L1024.2,340.6M1579.0,184.8L1585.8,191.6M1585.8,184.8L1579.0,191.6M1575.9,178.2L1583.5,185.8M1583.5,178.2L1575.9,185.8M1573.9,182.9L1580.5,189.4M1580.5,182.9L1573.9,189.4M1574.0,181.1L1579.2,186.3M1579.2,181.1L1574.0,186.3M1573.2,180.0L1581.0,187.8M1581.0,180.0L1573.2,187.8M1579.0,184.5L1585.9,191.3M1585.9,184.5L1579.0,191.3M1570.8,181.6L1577.8,188.5M1577.8,181.6L1570.8,188.5M1577.2,187.2L1582.5,192.6M1582.5,187.2L1577.2,192.6M1573.8,182.0L1581.7,189.9M1581.7,182.0L1573.8,189.9M1579.7,184.6L1587.2,192.1M1587.2,184.6L1579.7,192.1M1711.4,233.8L1719.8,242.2M1719.8,233.8L1711.4,242.2M1712.0,235.1L1718.0,241.1M1718.0,235.1L1712.0,241.1M1713.4,232.6L1720.9,240.0M1720.9,232.6L1713.4,240.0M1711.8,235.3L1720.7,244.3M1720.7,235.3L1711.8,244.3M1704.9,232.8L1711.2,239.0M1711.2,232.8L1704.9,239.0M1708.3,231.3L1715.5,238.5M1715.5,231.3L1708.3,238.5M1704.4,231.4L1713.2,240.2M1713.2,231.4L1704.4,240.2M1712.7,234.1L1718.1,239.5M1718.1,234.1L1712.7,239.5" stroke="#ff2020" stroke-width="1" fill="none"/><path d="M729.4,678.9L736.6,686.1M736.6,678.9L729.4,686.1M742.4,674.4L749.6,681.6M749.6,674.4L742.4,681.6M762.4,655.4L769.6,662.6M769.6,655.4L762.4,662.6M779.4,653.4L786.6,660.6M786.6,653.4L779.4,660.6M803.4,653.4L810.6,660.6M810.6,653.4L803.4,660.6M806.4,645.4L813.6,652.6M813.6,645.4L806.4,652.6M835.4,600.4L842.6,607.6M842.6,600.4L835.4,607.6M894.9,623.4L902.1,630.6M902.1,623.4L894.9,630.6M915.1,619.4L922.3,626.6M922.3,619.4L915.1,626.6M996.4,549.9L1003.6,557.1M1003.6,549.9L996.4,557.1M1014.4,532.4L1021.6,539.6M1021.6,532.4L1014.4,539.6M1095.4,531.4L1102.6,538.6M1102.6,531.4L1095.4,538.6M1201.4,626.4L1208.6,633.6M1208.6,626.4L1201.4,633.6M1175.4,651.4L1182.6,658.6M1182.6,651.4L1175.4,658.6M1186.4,657.4L1193.6,664.6M1193.6,657.4L1186.4,664.6M1237.4,609.4L1244.6,616.6M1244.6,609.4L1237.4,616.6M1264.4,624.4L1271.6,631.6M1271.6,624.4L1264.4,631.6M1287.4,615.4L1294.6,622.6M1294.6,615.4L1287.4,622.6M1255.4,591.4L1262.6,598.6M1262.6,591.4L1255.4,598.6M1196.4,553.4L1203.6,560.6M1203.6,553.4L1196.4,560.6M1208.4,539.4L1215.6,546.6M1215.6,539.4L1208.4,546.6M1206.4,530.4L1213.6,537.6M1213.6,530.4L1206.4,537.6M1238.4,554.9L1245.6,562.1M1245.6,554.9L1238.4,562.1M1278.9,577.1L1286.1,584.3M1286.1,577.1L1278.9,584.3M1315.4,590.4L1322.6,597.6M1322.6,590.4L1315.4,597.6M1379.0,598.3L1386.2,605.5M1386.2,598.3L1379.0,605.5M1467.8,601.2L1475.0,608.4M1475.0,601.2L1467.8,608.4M1518.2,597.8L1525.4,605.0M1525.4,597.8L1518.2,605.0M1532.4,603.4L1539.6,610.6M1539.6,603.4L1532.4,610.6M1541.4,609.4L1548.6,616.6M1548.6,609.4L1541.4,616.6M1558.4,627.4L1565.6,634.6M1565.6,627.4L1558.4,634.6M1571.4,633.4L1578.6,640.6M1578.6,633.4L1571.4,640.6M1578.4,632.4L1585.6,639.6M1585.6,632.4L1578.4,639.6M1590.4,628.4L1597.6,635.6M1597.6,628.4L1590.4,635.6M1603.4,626.4L1610.6,633.6M1610.6,626.4L1603.4,633.6M1622.4,631.9L1629.6,639.1M1629.6,631.9L1622.4,639.1M1592.4,655.8L1599.6,663.0M1599.6,655.8L1592.4,663.0M1581.4,708.0L1588.6,715.2M1588.6,708.0L1581.4,715.2M1648.1,771.2L1655.3,778.4M1655.3,771.2L1648.1,778.4M1635.4,791.4L1642.6,798.6M1642.6,791.4L1635.4,798.6M1601.4,830.4L1608.6,837.6M1608.6,830.4L1601.4,837.6M1581.0,835.1L1588.2,842.3M1588.2,835.1L1581.0,842.3M1571.2,859.0L1578.4,866.2M1578.4,859.0L1571.2,866.2M1571.2,874.2L1578.4,881.4M1578.4,874.2L1571.2,881.4M1563.4,890.4L1570.6,897.6M1570.6,890.4L1563.4,897.6M1527.4,899.2L1534.6,906.4M1534.6,899.2L1527.4,906.4M1552.4,1016.4L1559.6,1023.6M1559.6,1016.4L1552.4,1023.6M1450.4,1038.4L1457.6,1045.6M1457.6,1038.4L1450.4,1045.6M1424.4,923.1L1431.6,930.3M1431.6,923.1L1424.4,930.3M1387.4,930.4L1394.6,937.6M1394.6,930.4L1387.4,937.6M1374.4,946.0L1381.6,953.2M1381.6,946.0L1374.4,953.2M1381.0,985.1L1388.2,992.3M1388.2,985.1L1381.0,992.3M1346.3,1008.4L1353.5,1015.6M1353.5,1008.4L1346.3,1015.6M1327.4,991.9L1334.6,999.1M1334.6,991.9L1327.4,999.1M1223.4,1028.0L1230.6,1035.2M1230.6,1028.0L1223.4,1035.2M1125.4,1005.4L1132.6,1012.6M1132.6,1005.4L1125.4,1012.6M1104.4,997.1L1111.6,1004.3M1111.6,997.1L1104.4,1004.3M1097.4,1004.4L1104.6,1011.6M1104.6,1004.4L1097.4,1011.6M1093.4,999.1L1100.6,1006.3M1100.6,999.1L1093.4,1006.3M1072.4,991.9L1079.6,999.1M1079.6,991.9L1072.4,999.1M1043.4,994.0L1050.6,1001.2M1050.6,994.0L1043.4,1001.2M1021.1,994.0L1028.3,1001.2M1028.3,994.0L1021.1,1001.2M1010.4,990.9L1017.6,998.1M1017.6,990.9L1010.4,998.1M988.0,978.4L995.2,985.6M995.2,978.4L988.0,985.6M959.1,955.4L966.3,962.6M966.3,955.4L959.1,962.6M955.0,945.4L962.2,952.6M962.2,945.4L955.0,952.6M953.9,934.1L961.1,941.3M961.1,934.1L953.9,941.3M962.2,913.4L969.4,920.6M969.4,913.4L962.2,920.6M1000.4,882.4L1007.6,889.6M1007.6,882.4L1000.4,889.6M983.9,871.1L991.1,878.3M991.1,871.1L983.9,878.3M961.2,858.4L968.4,865.6M968.4,858.4L961.2,865.6M909.4,846.4L916.6,853.6M916.6,846.4L909.4,853.6M888.4,847.4L895.6,854.6M895.6,847.4L888.4,854.6M874.3,852.9L881.5,860.1M881.5,852.9L874.3,860.1M846.0,853.4L853.2,860.6M853.2,853.4L846.0,860.6M836.2,841.0L843.4,848.2M843.4,841.0L836.2,848.2M806.1,849.4L813.3,856.6M813.3,849.4L806.1,856.6M804.4,872.4L811.6,879.6M811.6,872.4L804.4,879.6M797.3,885.4L804.5,892.6M804.5,885.4L797.3,892.6M746.4,922.4L753.6,929.6M753.6,922.4L746.4,929.6M684.9,950.2L692.1,957.4M692.1,950.2L684.9,957.4M670.4,947.4L677.6,954.6M677.6,947.4L670.4,954.6M631.4,930.4L638.6,937.6M638.6,930.4L631.4,937.6M622.1,908.4L629.3,915.6M629.3,908.4L622.1,915.6M628.4,876.4L635.6,883.6M635.6,876.4L628.4,883.6M633.4,862.4L640.6,869.6M640.6,862.4L633.4,869.6M646.0,843.1L653.2,850.3M653.2,843.1L646.0,850.3M648.4,818.4L655.6,825.6M655.6,818.4L648.4,825.6M640.4,798.0L647.6,805.2M647.6,798.0L640.4,805.2M630.9,784.7L638.1,791.9M638.1,784.7L630.9,791.9M764.0,570.0L772.0,578.0M772.0,570.0L764.0,578.0M780.0,581.0L788.0,589.0M788.0,581.0L780.0,589.0M765.0,630.0L773.0,638.0M773.0,630.0L765.0,638.0M737.0,635.0L745.0,643.0M745.0,635.0L737.0,643.0M749.0,587.0L757.0,595.0M757.0,587.0L749.0,595.0M1540.5,202.6L1548.5,210.6M1548.5,202.6L1540.5,210.6M1547.5,192.7L1555.5,200.7M1555.5,192.7L1547.5,200.7M1553.6,181.9L1561.6,189.9M1561.6,181.9L1553.6,189.9M1557.1,169.4L1565.1,177.4M1565.1,169.4L1557.1,177.4M1573.9,171.8L1581.9,179.8M1581.9,171.8L1573.9,179.8M1586.9,171.5L1594.9,179.5M1594.9,171.5L1586.9,179.5M1598.4,173.7L1606.4,181.7M1606.4,173.7L1598.4,181.7M1611.8,176.8L1619.8,184.8M1619.8,176.8L1611.8,184.8M1622.9,177.1L1630.9,185.1M1630.9,177.1L1622.9,185.1M1637.1,181.7L1645.1,189.7M1645.1,181.7L1637.1,189.7M1652.1,193.6L1660.1,201.6M1660.1,193.6L1652.1,201.6M1667.2,199.6L1675.2,207.6M1675.2,199.6L1667.2,207.6M1681.5,205.5L1689.5,213.5M1689.5,205.5L1681.5,213.5M1693.9,207.1L1701.9,215.1M1701.9,207.1L1693.9,215.1M1709.7,203.2L1717.7,211.2M1717.7,203.2L1709.7,211.2M1727.7,204.4L1735.7,212.4M1735.7,204.4L1727.7,212.4M1739.9,203.4L1747.9,211.4M1747.9,203.4L1739.9,211.4M1752.6,209.8L1760.6,217.8M1760.6,209.8L1752.6,217.8M1763.0,218.3L1771.0,226.3M1771.0,218.3L1763.0,226.3M1776.7,225.9L1784.7,233.9M1784.7,225.9L1776.7,233.9M1789.3,230.7L1797.3,238.7M1797.3,230.7L1789.3,238.7M1787.1,246.2L1795.1,254.2M1795.1,246.2L1787.1,254.2M1786.3,261.8L1794.3,269.8M1794.3,261.8L1786.3,269.8M1777.2,276.4L1785.2,284.4M1785.2,276.4L1777.2,284.4M1763.6,271.0L1771.6,279.0M1771.6,271.0L1763.6,279.0M1752.5,263.9L1760.5,271.9M1760.5,263.9L1752.5,271.9M1742.0,258.9L1750.0,266.9M1750.0,258.9L1742.0,266.9M1728.0,255.5L1736.0,263.5M1736.0,255.5L1728.0,263.5M1717.6,250.4L1725.6,258.4M1725.6,250.4L1717.6,258.4M1706.8,246.9L1714.8,254.9M1714.8,246.9L1706.8,254.9M1693.9,246.8L1701.9,254.8M1701.9,246.8L1693.9,254.8M1679.1,243.2L1687.1,251.2M1687.1,243.2L1679.1,251.2M1665.5,240.3L1673.5,248.3M1673.5,240.3L1665.5,248.3M1649.0,236.2L1657.0,244.2M1657.0,236.2L1649.0,244.2M1635.4,240.5L1643.4,248.5M1643.4,240.5L1635.4,248.5M1621.1,240.4L1629.1,248.4M1629.1,240.4L1621.1,248.4M1609.7,241.8L1617.7,249.8M1617.7,241.8L1609.7,249.8M1591.4,242.6L1599.4,250.6M1599.4,242.6L1591.4,250.6M1576.1,247.5L1584.1,255.5M1584.1,247.5L1576.1,255.5M1562.4,238.9L1570.4,246.9M1570.4,238.9L1562.4,246.9M1553.2,230.8L1561.2,238.8M1561.2,230.8L1553.2,238.8M1538.1,222.6L1546.1,230.6M1546.1,222.6L1538.1,230.6M1604.4,224.4L1612.4,232.4M1612.4,224.4L1604.4,232.4M1619.3,228.2L1627.3,236.2M1627.3,228.2L1619.3,236.2M1631.1,229.8L1639.1,237.8M1639.1,229.8L1631.1,237.8M1644.8,229.0L1652.8,237.0M1652.8,229.0L1644.8,237.0M1656.7,230.0L1664.7,238.0M1664.7,230.0L1656.7,238.0M1668.6,231.5L1676.6,239.5M1676.6,231.5L1668.6,239.5M1683.9,236.4L1691.9,244.4M1691.9,236.4L1683.9,244.4M1694.6,234.2L1702.6,242.2M1702.6,234.2L1694.6,242.2M1709.9,238.6L1717.9,246.6M1717.9,238.6L1709.9,246.6M1719.6,239.9L1727.6,247.9M1727.6,239.9L1719.6,247.9M1732.4,244.8L1740.4,252.8M1740.4,244.8L1732.4,252.8M1743.8,245.7L1751.8,253.7M1751.8,245.7L1743.8,253.7M1752.0,256.2L1760.0,264.2M1760.0,256.2L1752.0,264.2M1761.6,263.0L1769.6,271.0M1769.6,263.0L1761.6,271.0M1774.6,270.0L1782.6,278.0M1782.6,270.0L1774.6,278.0M1783.9,281.8L1791.9,289.8M1791.9,281.8L1783.9,289.8M1780.5,297.2L1788.5,305.2M1788.5,297.2L1780.5,305.2M1775.4,311.7L1783.4,319.7M1783.4,311.7L1775.4,319.7M1767.3,322.6L1775.3,330.6M1775.3,322.6L1767.3,330.6M1759.7,330.3L1767.7,338.3M1767.7,330.3L1759.7,338.3M1754.2,341.2L1762.2,349.2M1762.2,341.2L1754.2,349.2M1745.9,348.8L1753.9,356.8M1753.9,348.8L1745.9,356.8M1741.2,334.4L1749.2,342.4M1749.2,334.4L1741.2,342.4M1738.4,317.2L1746.4,325.2M1746.4,317.2L1738.4,325.2M1725.2,319.6L1733.2,327.6M1733.2,319.6L1725.2,327.6M1712.3,326.0L1720.3,334.0M1720.3,326.0L1712.3,334.0M1701.7,327.5L1709.7,335.5M1709.7,327.5L1701.7,335.5M1687.0,329.4L1695.0,337.4M1695.0,329.4L1687.0,337.4M1672.4,329.4L1680.4,337.4M1680.4,329.4L1672.4,337.4M1662.1,332.1L1670.1,340.1M1670.1,332.1L1662.1,340.1M1647.4,332.1L1655.4,340.1M1655.4,332.1L1647.4,340.1M1648.1,345.5L1656.1,353.5M1656.1,345.5L1648.1,353.5M1646.7,359.5L1654.7,367.5M1654.7,359.5L1646.7,367.5M1644.5,373.1L1652.5,381.1M1652.5,373.1L1644.5,381.1M1643.1,385.9L1651.1,393.9M1651.1,385.9L1643.1,393.9M1633.1,383.3L1641.1,391.3M1641.1,383.3L1633.1,391.3M1619.2,380.8L1627.2,388.8M1627.2,380.8L1619.2,388.8M1608.6,375.8L1616.6,383.8M1616.6,375.8L1608.6,383.8M1594.0,372.2L1602.0,380.2M1602.0,372.2L1594.0,380.2M1595.8,358.7L1603.8,366.7M1603.8,358.7L1595.8,366.7M1597.5,345.3L1605.5,353.3M1605.5,345.3L1597.5,353.3M1599.0,331.2L1607.0,339.2M1607.0,331.2L1599.0,339.2M1598.6,316.6L1606.6,324.6M1606.6,316.6L1598.6,324.6M1601.0,303.3L1609.0,311.3M1609.0,303.3L1601.0,311.3M1600.4,290.5L1608.4,298.5M1608.4,290.5L1600.4,298.5M1603.5,277.1L1611.5,285.1M1611.5,277.1L1603.5,285.1M1604.9,265.3L1612.9,273.3M1612.9,265.3L1604.9,273.3M1604.1,250.8L1612.1,258.8M1612.1,250.8L1604.1,258.8M1603.7,239.2L1611.7,247.2M1611.7,239.2L1603.7,247.2M1467.5,335.6L1475.5,343.6M1475.5,335.6L1467.5,343.6M1478.6,337.6L1486.6,345.6M1486.6,337.6L1478.6,345.6M1490.8,336.5L1498.8,344.5M1498.8,336.5L1490.8,344.5M1503.0,339.2L1511.0,347.2M1511.0,339.2L1503.0,347.2M1514.6,339.6L1522.6,347.6M1522.6,339.6L1514.6,347.6M1526.5,342.1L1534.5,350.1M1534.5,342.1L1526.5,350.1M1545.9,339.4L1553.9,347.4M1553.9,339.4L1545.9,347.4M1540.8,323.9L1548.8,331.9M1548.8,323.9L1540.8,331.9M1539.8,312.6L1547.8,320.6M1547.8,312.6L1539.8,320.6M1552.9,308.4L1560.9,316.4M1560.9,308.4L1552.9,316.4M1569.9,304.0L1577.9,312.0M1577.9,304.0L1569.9,312.0M1584.6,302.8L1592.6,310.8M1592.6,302.8L1584.6,310.8M1598.2,300.5L1606.2,308.5M1606.2,300.5L1598.2,308.5M1599.6,313.0L1607.6,321.0M1607.6,313.0L1599.6,321.0M1599.3,324.7L1607.3,332.7M1607.3,324.7L1599.3,332.7M1600.7,338.4L1608.7,346.4M1608.7,338.4L1600.7,346.4M1601.6,351.5L1609.6,359.5M1609.6,351.5L1601.6,359.5M1600.4,365.0L1608.4,373.0M1608.4,365.0L1600.4,373.0M1599.7,375.3L1607.7,383.3M1607.7,375.3L1599.7,383.3M1601.1,387.6L1609.1,395.6M1609.1,387.6L1601.1,395.6M1590.4,396.7L1598.4,404.7M1598.4,396.7L1590.4,404.7M1581.3,400.8L1589.3,408.8M1589.3,400.8L1581.3,408.8M1564.9,397.6L1572.9,405.6M1572.9,397.6L1564.9,405.6M1547.2,395.2L1555.2,403.2M1555.2,395.2L1547.2,403.2M1526.3,389.2L1534.3,397.2M1534.3,389.2L1526.3,397.2M1511.1,379.4L1519.1,387.4M1519.1,379.4L1511.1,387.4M1495.0,372.6L1503.0,380.6M1503.0,372.6L1495.0,380.6M1480.6,361.7L1488.6,369.7M1488.6,361.7L1480.6,369.7M1469.0,354.5L1477.0,362.5M1477.0,354.5L1469.0,362.5M1457.8,347.3L1465.8,355.3M1465.8,347.3L1457.8,355.3M1576.4,400.4L1584.4,408.4M1584.4,400.4L1576.4,408.4M1597.6,405.0L1605.6,413.0M1605.6,405.0L1597.6,413.0M1606.9,407.3L1614.9,415.3M1614.9,407.3L1606.9,415.3M1621.5,405.6L1629.5,413.6M1629.5,405.6L1621.5,413.6M1634.0,408.6L1642.0,416.6M1642.0,408.6L1634.0,416.6M1645.5,406.7L1653.5,414.7M1653.5,406.7L1645.5,414.7M1659.9,408.2L1667.9,416.2M1667.9,408.2L1659.9,416.2M1657.9,420.5L1665.9,428.5M1665.9,420.5L1657.9,428.5M1644.5,423.7L1652.5,431.7M1652.5,423.7L1644.5,431.7M1629.7,422.0L1637.7,430.0M1637.7,422.0L1629.7,430.0M1617.9,424.0L1625.9,432.0M1625.9,424.0L1617.9,432.0M1598.2,419.3L1606.2,427.3M1606.2,419.3L1598.2,427.3M1582.9,416.0L1590.9,424.0M1590.9,416.0L1582.9,424.0M1645.1,415.9L1653.1,423.9M1653.1,415.9L1645.1,423.9M1653.5,401.5L1661.5,409.5M1661.5,401.5L1653.5,409.5M1663.8,385.2L1671.8,393.2M1671.8,385.2L1663.8,393.2M1671.4,376.1L1679.4,384.1M1679.4,376.1L1671.4,384.1M1674.6,363.6L1682.6,371.6M1682.6,363.6L1674.6,371.6M1681.8,354.0L1689.8,362.0M1689.8,354.0L1681.8,362.0M1690.1,340.0L1698.1,348.0M1698.1,340.0L1690.1,348.0M1696.1,347.6L1704.1,355.6M1704.1,347.6L1696.1,355.6M1692.7,361.2L1700.7,369.2M1700.7,361.2L1692.7,369.2M1684.9,374.9L1692.9,382.9M1692.9,374.9L1684.9,382.9M1678.8,388.4L1686.8,396.4M1686.8,388.4L1678.8,396.4M1673.0,399.5L1681.0,407.5M1681.0,399.5L1673.0,407.5M1662.0,411.2L1670.0,419.2M1670.0,411.2L1662.0,419.2M1650.1,422.3L1658.1,430.3M1658.1,422.3L1650.1,430.3M1781.9,328.7L1789.9,336.7M1789.9,328.7L1781.9,336.7M1778.3,339.4L1786.3,347.4M1786.3,339.4L1778.3,347.4M1775.2,351.7L1783.2,359.7M1783.2,351.7L1775.2,359.7M1768.1,361.8L1776.1,369.8M1776.1,361.8L1768.1,369.8M1765.6,375.8L1773.6,383.8M1773.6,375.8L1765.6,383.8M1763.0,385.7L1771.0,393.7M1771.0,385.7L1763.0,393.7M1755.3,398.0L1763.3,406.0M1763.3,398.0L1755.3,406.0M1752.7,408.6L1760.7,416.6M1760.7,408.6L1752.7,416.6M1751.5,396.5L1759.5,404.5M1759.5,396.5L1751.5,404.5M1748.3,385.3L1756.3,393.3M1756.3,385.3L1748.3,393.3M1745.5,371.0L1753.5,379.0M1753.5,371.0L1745.5,379.0M1756.6,359.5L1764.6,367.5M1764.6,359.5L1756.6,367.5M1763.5,351.3L1771.5,359.3M1771.5,351.3L1763.5,359.3M1771.8,340.6L1779.8,348.6M1779.8,340.6L1771.8,348.6M846.8,280.5L854.8,288.5M854.8,280.5L846.8,288.5M875.7,271.4L883.7,279.4M883.7,271.4L875.7,279.4M908.8,258.4L916.8,266.4M916.8,258.4L908.8,266.4M937.7,249.6L945.7,257.6M945.7,249.6L937.7,257.6M968.4,238.2L976.4,246.2M976.4,238.2L968.4,246.2M1005.4,242.7L1013.4,250.7M1013.4,242.7L1005.4,250.7M1012.7,253.5L1020.7,261.5M1020.7,253.5L1012.7,261.5M1051.2,226.2L1059.2,234.2M1059.2,226.2L1051.2,234.2M1081.8,246.0L1089.8,254.0M1089.8,246.0L1081.8,254.0M1107.1,266.6L1115.1,274.6M1115.1,266.6L1107.1,274.6M1089.9,288.8L1097.9,296.8M1097.9,288.8L1089.9,296.8M1065.2,271.4L1073.2,279.4M1073.2,271.4L1065.2,279.4M1029.7,304.4L1037.7,312.4M1037.7,304.4L1029.7,312.4M1063.6,339.0L1071.6,347.0M1071.6,339.0L1063.6,347.0M1040.3,356.2L1048.3,364.2M1048.3,356.2L1040.3,364.2M1004.3,371.0L1012.3,379.0M1012.3,371.0L1004.3,379.0M969.3,381.4L977.3,389.4M977.3,381.4L969.3,389.4M935.5,395.9L943.5,403.9M943.5,395.9L935.5,403.9M899.0,414.2L907.0,422.2M907.0,414.2L899.0,422.2M864.4,434.1L872.4,442.1M872.4,434.1L864.4,442.1M844.7,455.7L852.7,463.7M852.7,455.7L844.7,463.7M827.5,485.2L835.5,493.2M835.5,485.2L827.5,493.2M809.5,509.5L817.5,517.5M817.5,509.5L809.5,517.5M802.7,503.3L810.7,511.3M810.7,503.3L802.7,511.3M786.0,497.7L794.0,505.7M794.0,497.7L786.0,505.7M793.8,489.5L801.8,497.5M801.8,489.5L793.8,497.5M809.8,465.8L817.8,473.8M817.8,465.8L809.8,473.8M818.6,452.5L826.6,460.5M826.6,452.5L818.6,460.5M810.6,452.6L818.6,460.6M818.6,452.6L810.6,460.6M799.9,446.1L807.9,454.1M807.9,446.1L799.9,454.1M781.4,465.3L789.4,473.3M789.4,465.3L781.4,473.3M763.9,485.5L771.9,493.5M771.9,485.5L763.9,493.5M747.6,502.5L755.6,510.5M755.6,502.5L747.6,510.5M733.4,507.0L741.4,515.0M741.4,507.0L733.4,515.0M726.7,502.7L734.7,510.7M734.7,502.7L726.7,510.7M745.1,479.3L753.1,487.3M753.1,479.3L745.1,487.3M760.9,454.0L768.9,462.0M768.9,454.0L760.9,462.0M779.4,426.5L787.4,434.5M787.4,426.5L779.4,434.5M793.4,412.0L801.4,420.0M801.4,412.0L793.4,420.0M794.5,390.9L802.5,398.9M802.5,390.9L794.5,398.9M789.8,365.2L797.8,373.2M797.8,365.2L789.8,373.2M786.1,337.9L794.1,345.9M794.1,337.9L786.1,345.9M805.5,316.9L813.5,324.9M813.5,316.9L805.5,324.9M828.5,300.3L836.5,308.3M836.5,300.3L828.5,308.3M878.7,434.5L886.7,442.5M886.7,434.5L878.7,442.5M916.3,429.2L924.3,437.2M924.3,429.2L916.3,437.2M950.3,419.6L958.3,427.6M958.3,419.6L950.3,427.6M994.3,427.4L1002.3,435.4M1002.3,427.4L994.3,435.4M1005.9,440.3L1013.9,448.3M1013.9,440.3L1005.9,448.3M1010.1,462.7L1018.1,470.7M1018.1,462.7L1010.1,470.7M997.1,477.2L1005.1,485.2M1005.1,477.2L997.1,485.2M976.7,482.7L984.7,490.7M984.7,482.7L976.7,490.7M954.4,469.9L962.4,477.9M962.4,469.9L954.4,477.9M937.4,504.4L945.4,512.4M945.4,504.4L937.4,512.4M958.7,545.6L966.7,553.6M966.7,545.6L958.7,553.6M937.0,555.2L945.0,563.2M945.0,555.2L937.0,563.2M934.4,584.4L942.4,592.4M942.4,584.4L934.4,592.4M900.8,596.5L908.8,604.5M908.8,596.5L900.8,604.5M872.8,591.4L880.8,599.4M880.8,591.4L872.8,599.4M862.0,581.0L870.0,589.0M870.0,581.0L862.0,589.0M876.2,560.6L884.2,568.6M884.2,560.6L876.2,568.6M892.2,534.8L900.2,542.8M900.2,534.8L892.2,542.8M876.2,509.6L884.2,517.6M884.2,509.6L876.2,517.6M868.1,485.9L876.1,493.9M876.1,485.9L868.1,493.9M872.4,457.7L880.4,465.7M880.4,457.7L872.4,465.7M765.5,569.1L773.5,577.1M773.5,569.1L765.5,577.1M779.5,579.7L787.5,587.7M787.5,579.7L779.5,587.7M771.4,604.4L779.4,612.4M779.4,604.4L771.4,612.4M763.9,629.9L771.9,637.9M771.9,629.9L763.9,637.9M735.1,636.7L743.1,644.7M743.1,636.7L735.1,644.7M742.5,612.6L750.5,620.6M750.5,612.6L742.5,620.6M749.8,587.3L757.8,595.3M757.8,587.3L749.8,595.3M1539.9,209.3L1547.9,217.3M1547.9,209.3L1539.9,217.3M1550.1,210.5L1558.1,218.5M1558.1,210.5L1550.1,218.5M1561.8,212.5L1569.8,220.5M1569.8,212.5L1561.8,220.5M1574.3,213.0L1582.3,221.0M1582.3,213.0L1574.3,221.0M1583.9,214.6L1591.9,222.6M1591.9,214.6L1583.9,222.6M1595.2,216.7L1603.2,224.7M1603.2,216.7L1595.2,224.7M1605.7,218.6L1613.7,226.6M1613.7,218.6L1605.7,226.6M1615.6,215.8L1623.6,223.8M1623.6,215.8L1615.6,223.8M1625.9,214.9L1633.9,222.9M1633.9,214.9L1625.9,222.9M1636.7,215.5L1644.7,223.5M1644.7,215.5L1636.7,223.5M1645.0,213.2L1653.0,221.2M1653.0,213.2L1645.0,221.2M1656.5,217.3L1664.5,225.3M1664.5,217.3L1656.5,225.3M1666.4,217.8L1674.4,225.8M1674.4,217.8L1666.4,225.8M1677.4,218.5L1685.4,226.5M1685.4,218.5L1677.4,226.5M1684.7,222.8L1692.7,230.8M1692.7,222.8L1684.7,230.8M1695.7,222.6L1703.7,230.6M1703.7,222.6L1695.7,230.6M1706.1,229.1L1714.1,237.1M1714.1,229.1L1706.1,237.1M1716.1,230.9L1724.1,238.9M1724.1,230.9L1716.1,238.9M1724.8,233.7L1732.8,241.7M1732.8,233.7L1724.8,241.7M1737.2,238.6L1745.2,246.6M1745.2,238.6L1737.2,246.6M1747.3,241.0L1755.3,249.0M1755.3,241.0L1747.3,249.0M1755.2,244.7L1763.2,252.7M1763.2,244.7L1755.2,252.7M1765.7,248.7L1773.7,256.7M1773.7,248.7L1765.7,256.7M1775.3,253.7L1783.3,261.7M1783.3,253.7L1775.3,261.7M1571.4,179.7L1579.4,187.7M1579.4,179.7L1571.4,187.7M1576.6,189.4L1584.6,197.4M1584.6,189.4L1576.6,197.4M1581.0,192.0L1589.0,200.0M1589.0,192.0L1581.0,200.0M1710.7,224.1L1718.7,232.1M1718.7,224.1L1710.7,232.1M1713.3,227.4L1721.3,235.4M1721.3,227.4L1713.3,235.4M1674.8,274.1L1682.8,282.1M1682.8,274.1L1674.8,282.1M1683.9,280.6L1691.9,288.6M1691.9,280.6L1683.9,288.6M1690.4,285.8L1698.4,293.8M1698.4,285.8L1690.4,293.8M1694.6,293.1L1702.6,301.1M1702.6,293.1L1694.6,301.1M1708.0,301.2L1716.0,309.2M1716.0,301.2L1708.0,309.2M1716.6,303.9L1724.6,311.9M1724.6,303.9L1716.6,311.9M1743.7,267.2L1751.7,275.2M1751.7,267.2L1743.7,275.2M1742.7,275.8L1750.7,283.8M1750.7,275.8L1742.7,283.8M1744.6,285.2L1752.6,293.2M1752.6,285.2L1744.6,293.2M1742.7,295.4L1750.7,303.4M1750.7,295.4L1742.7,303.4M1743.0,306.8L1751.0,314.8M1751.0,306.8L1743.0,314.8M1745.5,315.4L1753.5,323.4M1753.5,315.4L1745.5,323.4M1743.7,324.7L1751.7,332.7M1751.7,324.7L1743.7,332.7M1744.3,334.8L1752.3,342.8M1752.3,334.8L1744.3,342.8M1745.2,346.2L1753.2,354.2M1753.2,346.2L1745.2,354.2M1744.9,354.7L1752.9,362.7M1752.9,354.7L1744.9,362.7M1659.6,383.6L1667.6,391.6M1667.6,383.6L1659.6,391.6M1664.8,375.9L1672.8,383.9M1672.8,375.9L1664.8,383.9M1672.1,366.8L1680.1,374.8M1680.1,366.8L1672.1,374.8M1679.0,358.9L1687.0,366.9M1687.0,358.9L1679.0,366.9M1686.8,351.2L1694.8,359.2M1694.8,351.2L1686.8,359.2M1694.7,341.5L1702.7,349.5M1702.7,341.5L1694.7,349.5M1751.8,376.2L1759.8,384.2M1759.8,376.2L1751.8,384.2M1751.7,387.0L1759.7,395.0M1759.7,387.0L1751.7,395.0M1753.1,397.4L1761.1,405.4M1761.1,397.4L1753.1,405.4M1754.2,406.6L1762.2,414.6M1762.2,406.6L1754.2,414.6M1753.6,416.9L1761.6,424.9M1761.6,416.9L1753.6,424.9M1754.8,424.9L1762.8,432.9M1762.8,424.9L1754.8,432.9M1001.0,507.0L1009.0,515.0M1009.0,507.0L1001.0,515.0M1025.0,508.0L1033.0,516.0M1033.0,508.0L1025.0,516.0M998.5,519.7L1006.5,527.7M1006.5,519.7L998.5,527.7M1021.5,523.0L1029.5,531.0M1029.5,523.0L1021.5,531.0M1005.0,504.0L1013.0,512.0M1013.0,504.0L1005.0,512.0M1027.0,516.0L1035.0,524.0M1035.0,516.0L1027.0,524.0M1750.0,438.0L1758.0,446.0M1758.0,438.0L1750.0,446.0M1750.0,452.0L1758.0,460.0M1758.0,452.0L1750.0,460.0M1756.0,462.0L1764.0,470.0M1764.0,462.0L1756.0,470.0M1757.0,466.0L1765.0,474.0M1765.0,466.0L1757.0,474.0M1751.0,478.0L1759.0,486.0M1759.0,478.0L1751.0,486.0M1756.0,485.0L1764.0,493.0M1764.0,485.0L1756.0,493.0M1524.7,313.0L1532.7,321.0M1532.7,313.0L1524.7,321.0M1535.3,316.9L1543.3,324.9M1543.3,316.9L1535.3,324.9M1545.4,317.4L1553.4,325.4M1553.4,317.4L1545.4,325.4M1556.8,321.2L1564.8,329.2M1564.8,321.2L1556.8,329.2M1564.6,318.0L1572.6,326.0M1572.6,318.0L1564.6,326.0M1574.9,317.2L1582.9,325.2M1582.9,317.2L1574.9,325.2M1542.1,317.3L1550.1,325.3M1550.1,317.3L1542.1,325.3M1546.3,325.2L1554.3,333.2M1554.3,325.2L1546.3,333.2M1550.8,335.6L1558.8,343.6M1558.8,335.6L1550.8,343.6M1555.5,344.5L1563.5,352.5M1563.5,344.5L1555.5,352.5M1566.3,352.5L1574.3,360.5M1574.3,352.5L1566.3,360.5M1576.7,355.8L1584.7,363.8M1584.7,355.8L1576.7,363.8M1586.1,361.5L1594.1,369.5M1594.1,361.5L1586.1,369.5M1608.6,250.8L1616.6,258.8M1616.6,250.8L1608.6,258.8M1622.3,258.9L1630.3,266.9M1630.3,258.9L1622.3,266.9M1629.9,257.5L1637.9,265.5M1637.9,257.5L1629.9,265.5M632.1,784.6L639.3,791.8M639.3,784.6L632.1,791.8M640.2,797.8L647.4,805.0M647.4,797.8L640.2,805.0M645.2,809.5L652.4,816.7M652.4,809.5L645.2,816.7M648.5,819.8L655.7,827.0M655.7,819.8L648.5,827.0M647.5,829.6L654.7,836.8M654.7,829.6L647.5,836.8M646.9,842.9L654.1,850.1M654.1,842.9L646.9,850.1M638.4,854.2L645.6,861.4M645.6,854.2L638.4,861.4M632.0,862.6L639.2,869.8M639.2,862.6L632.0,869.8M628.3,877.5L635.5,884.7M635.5,877.5L628.3,884.7M626.0,886.2L633.2,893.4M633.2,886.2L626.0,893.4M623.5,896.8L630.7,904.0M630.7,896.8L623.5,904.0M622.3,908.0L629.5,915.2M629.5,908.0L622.3,915.2M627.5,918.6L634.7,925.8M634.7,918.6L627.5,925.8M631.0,929.6L638.2,936.8M638.2,929.6L631.0,936.8M642.6,935.7L649.8,942.9M649.8,935.7L642.6,942.9M651.9,939.3L659.1,946.5M659.1,939.3L651.9,946.5M660.4,942.1L667.6,949.3M667.6,942.1L660.4,949.3M730.4,678.9L737.6,686.1M737.6,678.9L730.4,686.1M703.4,704.4L710.6,711.6M710.6,704.4L703.4,711.6M678.9,732.5L686.1,739.7M686.1,732.5L678.9,739.7M656.7,757.3L663.9,764.5M663.9,757.3L656.7,764.5M989.3,977.9L996.5,985.1M996.5,977.9L989.3,985.1M999.9,985.7L1007.1,992.9M1007.1,985.7L999.9,992.9M1010.8,991.8L1018.0,999.0M1018.0,991.8L1010.8,999.0M1026.5,991.0L1033.7,998.2M1033.7,991.0L1026.5,998.2M1043.4,994.3L1050.6,1001.5M1050.6,994.3L1043.4,1001.5M1057.0,992.6L1064.2,999.8M1064.2,992.6L1057.0,999.8" fill="none" stroke="#ff1010" stroke-width="1.15"/><circle cx="908" cy="337" r="4.2" fill="#4f8a5a" stroke="#fff" stroke-width="1"/><circle cx="937" cy="452" r="4.2" fill="#4f8a5a" stroke="#fff" stroke-width="1"/><circle cx="1205" cy="533" r="4.2" fill="#4f8a5a" stroke="#fff" stroke-width="1"/><circle cx="1214" cy="678" r="4.2" fill="#4f8a5a" stroke="#fff" stroke-width="1"/><circle cx="1035" cy="874" r="4.2" fill="#4f8a5a" stroke="#fff" stroke-width="1"/><circle cx="1721.6" cy="565.8" r="4.2" fill="#4f8a5a" stroke="#fff" stroke-width="1"/><text x="912" y="331.5" font-family="Liberation Sans" font-size="16" style="font-style:italic;" fill="#fff" stroke="#606060" stroke-width="2.6" stroke-linejoin="round" paint-order="stroke">Swellendam</text><text x="941" y="446.5" font-family="Liberation Sans" font-size="13.8" style="" fill="#fff" stroke="#606060" stroke-width="2.6" stroke-linejoin="round" paint-order="stroke">Railton</text><text x="1208" y="527" font-family="Liberation Sans" font-size="12" style="" fill="#fff" stroke="#606060" stroke-width="2.6" stroke-linejoin="round" paint-order="stroke">Bontebok National Park Entrance Gate</text><text x="1217" y="673" font-family="Liberation Sans" font-size="12" style="" fill="#fff" stroke="#606060" stroke-width="2.6" stroke-linejoin="round" paint-order="stroke">Bontebok National Park Reception &amp; Shop</text><text x="1039" y="870" font-family="Liberation Sans" font-size="10.1" style="" fill="#fff" stroke="#606060" stroke-width="2.6" stroke-linejoin="round" paint-order="stroke">Lang Elsies Kraal Rest Camp</text><text x="1724.5" y="560.5" font-family="Liberation Sans" font-size="16.2" style="font-style:italic;" fill="#fff" stroke="#606060" stroke-width="2.6" stroke-linejoin="round" paint-order="stroke">Buffeljagsrivier</text></g></svg><div class="a" style="left:106px;top:1156px;width:291px;height:11px;background:#e5e5e5;border:1px solid #d6d6d6;border-top:0;border-radius:0 0 5px 5px;box-sizing:border-box"></div>
<div class="a" style="left:188px;top:1156px;width:130px;height:20px;border:1px solid #8f8f8f;border-radius:4px;background:#fff;box-sizing:border-box;overflow:hidden">
<div class="a" style="left:0;top:0;width:59px;height:18px;background:linear-gradient(#7c7c7c,#909090);border-right:1px solid #777"></div>
<div class="st" style="left:8px;top:0px;color:#fff;font-size:13px">Layers</div>
<div class="st" style="left:71px;top:0px;font-size:13px">Browser</div>
</div>
<div class="st" style="left:63px;top:1183px">Validation finished.</div>
<div class="st" style="left:1012px;top:1183px;color:#1010e0;text-decoration:underline">There is a new plugin available</div>
<div class="a" style="left:1200px;top:1183px;width:20px;height:20px;box-sizing:border-box;border:1px solid #9a9a9a;background:#e4e4e4"><svg width="18" height="18"><circle cx="8" cy="8" r="4.5" fill="none" stroke="#222" stroke-width="1.5"/><circle cx="10" cy="12" r="3" fill="none" stroke="#222" stroke-width="1.3"/><path d="M4,3 l8,12" stroke="#222" stroke-width="1.2"/></svg></div>
<div class="st" style="left:1229.5px;top:1183px">Coordinate:</div>
<div class="a" style="left:1306px;top:1183px;width:300px;height:20px;box-sizing:border-box;border:1px solid #a0a0a0;background:#fff;box-shadow:inset 0 1px 1px rgba(0,0,0,.12)"></div>
<div class="st" style="left:1306px;width:300px;text-align:center;top:1184px">20.4430,-34.0604</div>
<div class="st" style="left:1615.5px;top:1183px">Scale</div>
<div class="a" style="left:1661px;top:1187px;width:93px;height:15px;box-sizing:border-box;border:1px solid #9c9c9c;border-radius:3px;background:#fff"><div class="a" style="left:79px;top:0;width:1px;height:13px;background:#c8c8c8"></div><svg class="a" style="left:82px;top:4px" width="8" height="6"><path d="M0.5,1 h6 l-3,4z" fill="#444"/></svg></div>
<div class="st" style="left:1663px;top:1187px;font-size:13px">1:19951</div>
<div class="a" style="left:1761px;top:1183px;width:20px;height:20px;box-sizing:border-box;border:1px solid #9a9a9a;background:#e8e8e8"><svg width="18" height="18"><circle cx="6" cy="6" r="3.8" fill="none" stroke="#d22" stroke-width="1.4"/><path d="M3.5,3.5l5,5" stroke="#d22" stroke-width="1.3"/><path d="M3,17 c3,-1 5,-3 7,-6 l5,-8 l1.5,1 l-5,8.5 c-2,3 -4,4.5 -8.5,4.5z" fill="#555"/><path d="M10,11 l5,-8" stroke="#999" stroke-width=".8"/></svg></div>
<svg class="a" style="left:1786px;top:1181px" width="18" height="20"><rect x="1.5" y="5.5" width="13" height="13" rx="2" fill="url(#cbg2)" stroke="#56606e"/><path d="M4,12 l3.2,4 l7.3,-13" fill="none" stroke="#1b2633" stroke-width="2.5" stroke-linecap="round" stroke-linejoin="round"/><defs><linearGradient id="cbg2" x1="0" y1="0" x2="0" y2="1"><stop offset="0" stop-color="#eef1f4"/><stop offset="1" stop-color="#c2cad3"/></linearGradient></defs></svg>
<div class="st" style="left:1805px;top:1183px">Render</div>
<div class="st" style="left:1853.5px;top:1183px;color:#3a3a3a">EPSG:4326</div>
<div class="a" style="left:1931px;top:1183px;width:20px;height:20px;box-sizing:border-box;border:1px solid #9a9a9a;background:#e8e8e8"><svg width="18" height="18"><circle cx="9" cy="9" r="7" fill="none" stroke="#7a7a7a" stroke-width="1.4"/><ellipse cx="9" cy="9" rx="3.5" ry="7" fill="none" stroke="#8a8a8a" stroke-width="1"/><path d="M2,9h14" stroke="#8a8a8a" stroke-width="1"/><rect x="6.5" y="6.5" width="5" height="5" fill="#ddd" stroke="#7a7a7a"/></svg></div>
<svg class="a" style="left:1962px;top:1195px" width="14" height="14"><path d="M2,12 l10,-10 M6,12 l6,-6 M10,12 l2,-2" stroke="#777" stroke-width="1"/></svg>

</body></html>
